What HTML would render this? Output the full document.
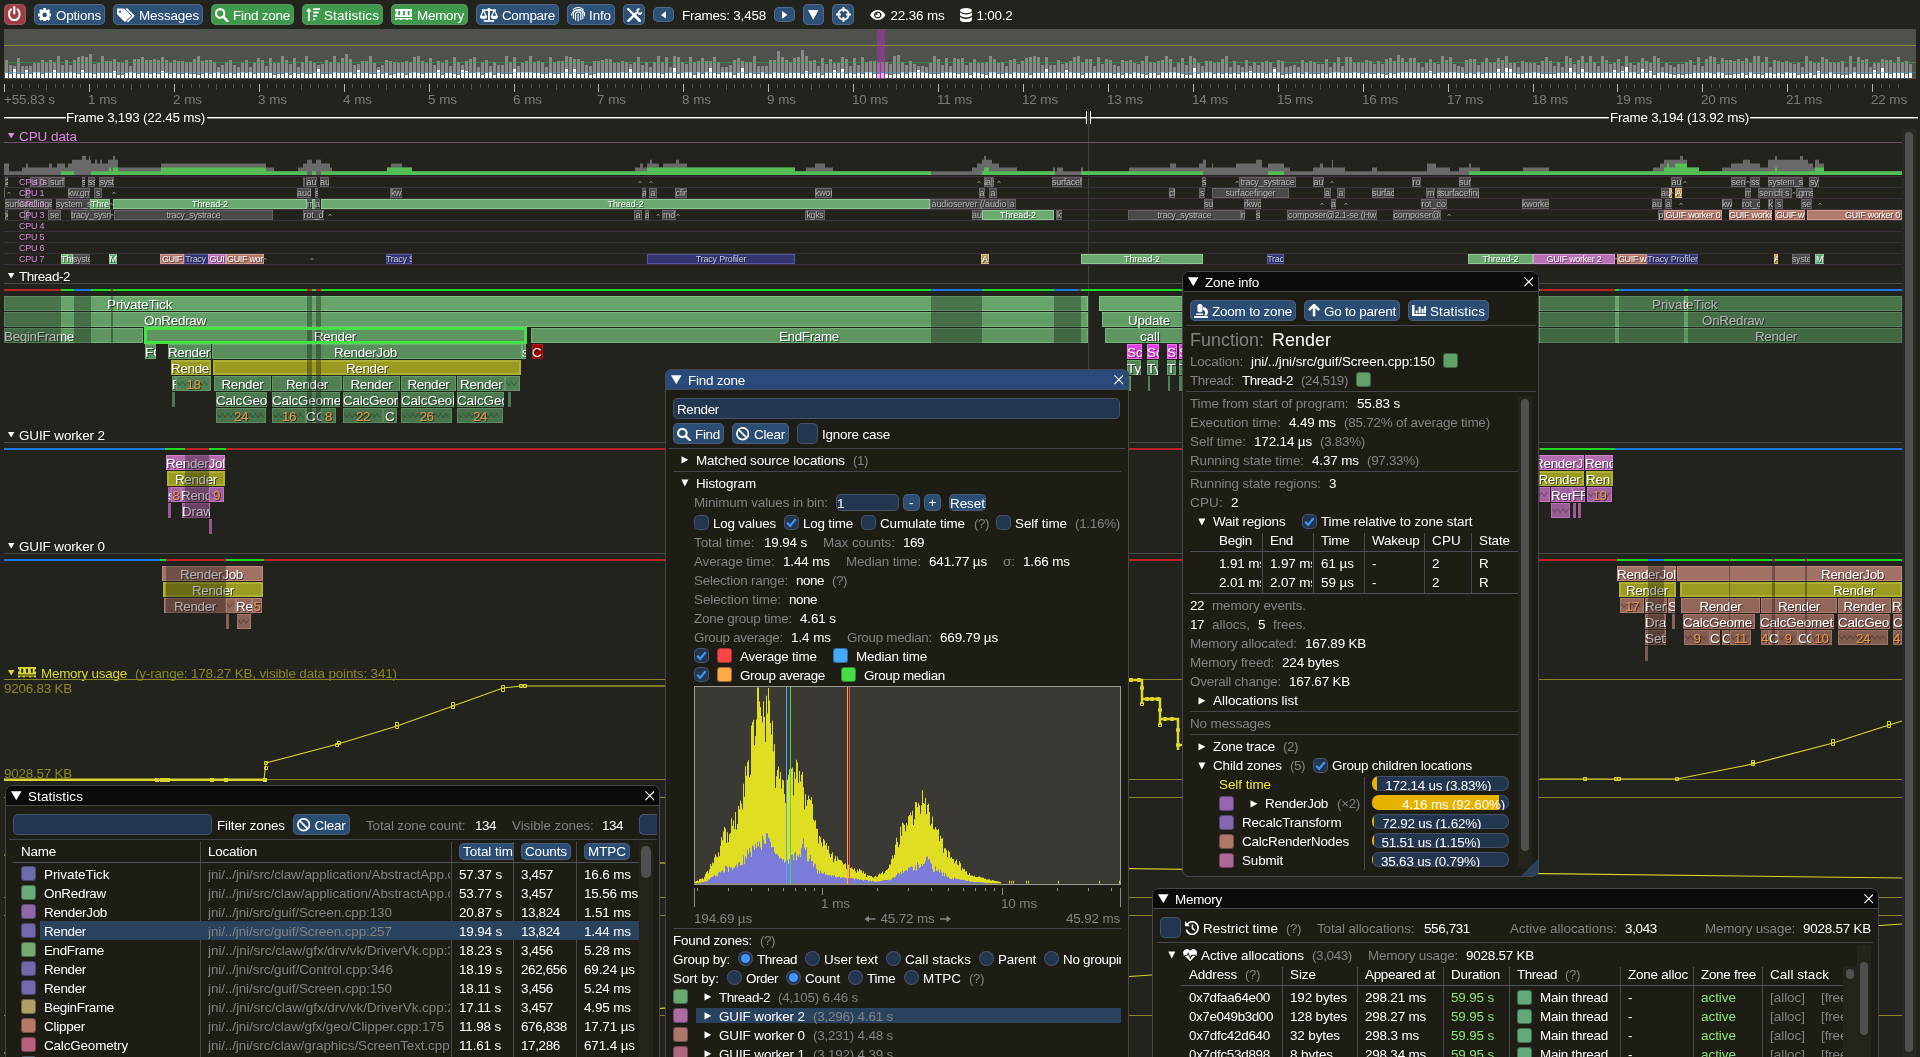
<!DOCTYPE html><html><head><meta charset="utf-8"><title>Tracy Profiler</title><style>
*{box-sizing:border-box}
html,body{margin:0;padding:0;background:#21231c;}
body{width:1920px;height:1057px;position:relative;overflow:hidden;font-family:"Liberation Sans",sans-serif;font-size:13.43px;color:#fff;will-change:transform;}
div,span,svg,i,b{position:absolute;}
span{white-space:pre;line-height:15px;height:15px;}
i{top:0;height:100%;font-style:normal}
b{font-weight:normal;top:1px;height:15px;line-height:15px;white-space:pre;text-shadow:1px 1px 0 rgba(0,0,0,.55);}
.big{font-size:17.9px;line-height:20px;height:20px;}
.sm{font-size:8.95px;line-height:10px;height:10px;letter-spacing:-0.2px;}
.cz{height:10px;font-size:8.95px;line-height:10px;overflow:hidden;white-space:pre;text-align:center;text-shadow:1px 1px 0 rgba(0,0,0,.5);}
.z{height:15px;overflow:hidden;}
.win{overflow:hidden;border-radius:7px;box-shadow:inset 0 0 0 1px #45454b;}
.clip{overflow:hidden;}
</style></head><body>
<div style="left:4px;top:4px;width:22px;height:21px;background:#a03c44;border-radius:5px;box-shadow:inset 0 0 0 1px rgba(130,130,150,.45);"></div>
<svg style="left:8.2px;top:5.6px" width="12.6" height="15.4" viewBox="0.9 0 14.2 15.3" preserveAspectRatio="none" fill="#fff" stroke="none"><path d="M8 1.2v6.3" stroke="#fff" stroke-width="2.3" stroke-linecap="round" fill="none"/><path d="M4.3 3.4a6 6 0 1 0 7.4 0" fill="none" stroke="#fff" stroke-width="2.2" stroke-linecap="round"/></svg>
<div style="left:34px;top:4px;width:71px;height:21px;background:#2e5177;border-radius:5px;box-shadow:inset 0 0 0 1px rgba(130,130,150,.45);"></div>
<svg style="left:38px;top:7.7px" width="13.3" height="13.8" viewBox="0 0 16 16" preserveAspectRatio="none" fill="#fff" stroke="none"><g transform="translate(8 8)"><circle r="4.500" fill="none" stroke="#fff" stroke-width="3.600"/><rect x="-1.700" y="-8" width="3.400" height="4" transform="rotate(0)"/><rect x="-1.700" y="-8" width="3.400" height="4" transform="rotate(45)"/><rect x="-1.700" y="-8" width="3.400" height="4" transform="rotate(90)"/><rect x="-1.700" y="-8" width="3.400" height="4" transform="rotate(135)"/><rect x="-1.700" y="-8" width="3.400" height="4" transform="rotate(180)"/><rect x="-1.700" y="-8" width="3.400" height="4" transform="rotate(225)"/><rect x="-1.700" y="-8" width="3.400" height="4" transform="rotate(270)"/><rect x="-1.700" y="-8" width="3.400" height="4" transform="rotate(315)"/></g></svg>
<span style="left:56px;top:8px;color:#fff;letter-spacing:-0.183px;">Options</span>
<div style="left:113px;top:4px;width:90px;height:21px;background:#2e5177;border-radius:5px;box-shadow:inset 0 0 0 1px rgba(130,130,150,.45);"></div>
<svg style="left:117px;top:7.5px" width="17.5" height="14.7" viewBox="0.5 1 15.3 13" preserveAspectRatio="none" fill="#fff" stroke="none"><path d="M0.5 1.5h6.2l6.3 6.3-5.6 5.6-6.9-6.9z M3.2 3.3a1 1 0 1 0 .01 0z" fill-rule="evenodd"/><path d="M8.7 1.5l6.3 6.3-5.6 5.6" fill="none" stroke="#fff" stroke-width="1.5"/></svg>
<span style="left:139px;top:8px;color:#fff;letter-spacing:-0.151px;">Messages</span>
<div style="left:211px;top:4px;width:83px;height:21px;background:#3e9a4a;border-radius:5px;box-shadow:inset 0 0 0 1px rgba(130,130,150,.45);"></div>
<svg style="left:215px;top:7.5px" width="13.7" height="14.3" viewBox="0.75 0.75 15.2 15.2" preserveAspectRatio="none" fill="#fff" stroke="none"><circle cx="6.5" cy="6.5" r="4.6" fill="none" stroke="#fff" stroke-width="2.3"/><path d="M10 10l4.6 4.6" stroke="#fff" stroke-width="2.6" stroke-linecap="round"/></svg>
<span style="left:233px;top:8px;color:#fff;letter-spacing:-0.220px;">Find zone</span>
<div style="left:302px;top:4px;width:81px;height:21px;background:#3e9a4a;border-radius:5px;box-shadow:inset 0 0 0 1px rgba(130,130,150,.45);"></div>
<svg style="left:306px;top:8px" width="14.3" height="12.9" viewBox="0.5 1.5 15 13.5" preserveAspectRatio="none" fill="#fff" stroke="none"><path d="M3.5 15V3" stroke="#fff" stroke-width="1.8"/><path d="M0.5 5.2L3.5 1.5 6.5 5.2z"/><path d="M8 2.6h7.5M8 6.2h5.8M8 9.8h4M8 13.4h2.3" stroke="#fff" stroke-width="1.9"/></svg>
<span style="left:324px;top:8px;color:#fff;letter-spacing:0.127px;">Statistics</span>
<div style="left:391px;top:4px;width:77px;height:21px;background:#3e9a4a;border-radius:5px;box-shadow:inset 0 0 0 1px rgba(130,130,150,.45);"></div>
<svg style="left:394.7px;top:9px" width="17.8" height="11.1" viewBox="0.5 3 15 10.5" preserveAspectRatio="none" fill="#fff" stroke="none"><path d="M0.5 3h15v2.2a1.2 1.2 0 0 0 0 2.4V10.5h-15V7.6a1.2 1.2 0 0 0 0-2.4z M3.2 4.8v4h1.6v-4z M7.2 4.8v4h1.6v-4z M11.2 4.8v4h1.6v-4z" fill-rule="evenodd"/><path d="M0.5 11.6h15v1.9h-1.6v-.9h-2.4v.9h-1.6v-.9h-3.8v.9h-1.6v-.9h-2.4v.9h-1.6z"/></svg>
<span style="left:417px;top:8px;color:#fff;letter-spacing:-0.250px;">Memory</span>
<div style="left:476px;top:4px;width:83px;height:21px;background:#2e5177;border-radius:5px;box-shadow:inset 0 0 0 1px rgba(130,130,150,.45);"></div>
<svg style="left:480px;top:8px" width="17.9" height="13.9" viewBox="0.3 1.2 15.4 13.7" preserveAspectRatio="none" fill="#fff" stroke="none"><path d="M8 2v11" stroke="#fff" stroke-width="1.6"/><path d="M2 3.3h12" stroke="#fff" stroke-width="1.5"/><path d="M3.5 14h9" stroke="#fff" stroke-width="1.7"/><path d="M3.3 3.5L0.8 9.5h5z M12.7 3.5L10.2 9.5h5z" fill="none" stroke="#fff" stroke-width="1.1"/><path d="M0.3 9.6h6a3 2.6 0 0 1-6 0z M9.7 9.6h6a3 2.6 0 0 1-6 0z"/><circle cx="8" cy="2.6" r="1.4"/></svg>
<span style="left:502px;top:8px;color:#fff;letter-spacing:-0.319px;">Compare</span>
<div style="left:567px;top:4px;width:48px;height:21px;background:#2e5177;border-radius:5px;box-shadow:inset 0 0 0 1px rgba(130,130,150,.45);"></div>
<svg style="left:570.8px;top:7.3px" width="14.3" height="14.3" viewBox="1 0.8 14 15" preserveAspectRatio="none" fill="#fff" stroke="none"><g fill="none" stroke="#fff" stroke-width="1.15" stroke-linecap="round"><path d="M1.6 9.5a6.6 6.6 0 0 1 12.8-1.5v2"/><path d="M3.4 12.5v-4a4.6 4.6 0 0 1 9.2 0v4.5"/><path d="M5.4 14.5v-6a2.6 2.6 0 0 1 5.2 0v5.5"/><path d="M8 8.4v6.8"/><path d="M3.2 3.3a7 7 0 0 1 9.6 0"/></g></svg>
<span style="left:589px;top:8px;color:#fff;letter-spacing:-0.100px;">Info</span>
<div style="left:623px;top:4px;width:22px;height:21px;background:#2e5177;border-radius:5px;box-shadow:inset 0 0 0 1px rgba(130,130,150,.45);"></div>
<svg style="left:626.5px;top:7.6px" width="15.5" height="14.3" viewBox="0.9 0.9 15.4 14.4" preserveAspectRatio="none" fill="#fff" stroke="none"><path d="M2 2l5.5 5.5" stroke="#fff" stroke-width="2.2" stroke-linecap="round"/><path d="M7.5 7.5l6 6.2" stroke="#fff" stroke-width="3" stroke-linecap="round"/><path d="M2.3 13.8l7.5-7.5" stroke="#fff" stroke-width="2.4" stroke-linecap="round"/><path d="M10 3.2a3 3 0 0 1 4.2-1.5l-2 2 .4 1.7 1.7.4 2-2a3 3 0 0 1-4.6 3.3z"/></svg>
<div style="left:653px;top:7px;width:21px;height:15px;background:#2e5177;border-radius:5px;box-shadow:inset 0 0 0 1px rgba(130,130,150,.45);"></div>
<svg style="left:661px;top:10.9px" width="5.4" height="7.8" viewBox="4.5 2.5 6.5 11" preserveAspectRatio="none" fill="#fff" stroke="none"><path d="M11 2.5v11L4.5 8z"/></svg>
<span style="left:682px;top:8px;color:#fff;letter-spacing:-0.199px;">Frames: 3,458</span>
<div style="left:774px;top:7px;width:21px;height:15px;background:#2e5177;border-radius:5px;box-shadow:inset 0 0 0 1px rgba(130,130,150,.45);"></div>
<svg style="left:781.9px;top:10.9px" width="5.4" height="7.8" viewBox="5 2.5 6.5 11" preserveAspectRatio="none" fill="#fff" stroke="none"><path d="M5 2.5v11L11.5 8z"/></svg>
<div style="left:803px;top:4px;width:21px;height:21px;background:#2e5177;border-radius:5px;box-shadow:inset 0 0 0 1px rgba(130,130,150,.45);"></div>
<svg style="left:808.3px;top:9.9px" width="10.5" height="9.8" viewBox="2 3 12 11" preserveAspectRatio="none" fill="#fff" stroke="none"><path d="M2 3h12L8 14z"/></svg>
<div style="left:832px;top:4px;width:22px;height:21px;background:#2e5177;border-radius:5px;box-shadow:inset 0 0 0 1px rgba(130,130,150,.45);"></div>
<svg style="left:835.5px;top:7px" width="15" height="15" viewBox="0.5 0.5 15 15" preserveAspectRatio="none" fill="#fff" stroke="none"><circle cx="8" cy="8" r="5.2" fill="none" stroke="#fff" stroke-width="1.8"/><path d="M8 0.5v5M8 10.5v5M0.5 8h5M10.5 8h5" stroke="#fff" stroke-width="1.8"/></svg>
<svg style="left:870px;top:10.2px" width="15.5" height="10" viewBox="0.3 2.6 15.4 10.8" preserveAspectRatio="none" fill="#fff" stroke="none"><path d="M0.3 8C2.2 4.2 5 2.6 8 2.6s5.8 1.6 7.7 5.4c-1.9 3.8-4.7 5.4-7.7 5.4S2.2 11.800 .3 8z M8 4.300a3.700 3.700 0 1 0 .01 0z" fill-rule="evenodd"/><circle cx="8" cy="8" r="2.4"/><circle cx="6.900" cy="6.900" r="1" fill="#22231c"/></svg>
<span style="left:890.5px;top:8px;color:#fff;letter-spacing:-0.155px;">22.36 ms</span>
<svg style="left:960px;top:7.6px" width="12" height="14.3" viewBox="1.5 0.4 13 14.4" preserveAspectRatio="none" fill="#fff" stroke="none"><ellipse cx="8" cy="3" rx="6.5" ry="2.600"/><path d="M1.500 4.800c1 1.500 3.500 2.100 6.500 2.100s5.500-.6 6.500-2.100v3c-1 1.500-3.500 2.100-6.500 2.100S2.500 9.300 1.500 7.800z"/><path d="M1.500 9.300c1 1.500 3.500 2.100 6.500 2.100s5.500-.6 6.500-2.100v3.200c-1 1.700-3.500 2.300-6.500 2.300s-5.500-.6-6.500-2.300z"/></svg>
<span style="left:976.5px;top:8px;color:#fff;letter-spacing:-0.223px;">1:00.2</span>
<div style="left:4px;top:29px;width:1912px;height:50px;background:#4f524c;"></div>
<svg style="left:0;top:0" width="1920" height="80"><path d="M5 60h3v18h-3zM9 65h3v13h-3zM13 66h3v12h-3zM17 58h3v20h-3zM21 66h3v12h-3zM25 66h3v12h-3zM29 66h3v12h-3zM33 63h3v15h-3zM37 63h3v15h-3zM41 60h3v18h-3zM45 62h3v16h-3zM49 60h3v18h-3zM53 62h3v16h-3zM57 56h3v22h-3zM61 65h3v13h-3zM65 60h3v18h-3zM69 65h3v13h-3zM73 60h3v18h-3zM77 57h3v21h-3zM81 56h3v22h-3zM85 57h3v21h-3zM89 54h3v24h-3zM93 64h3v14h-3zM97 63h3v15h-3zM101 56h3v22h-3zM105 61h3v17h-3zM109 61h3v17h-3zM113 59h3v19h-3zM117 62h3v16h-3zM121 63h3v15h-3zM125 60h3v18h-3zM129 66h3v12h-3zM133 59h3v19h-3zM137 59h3v19h-3zM141 57h3v21h-3zM145 60h3v18h-3zM149 60h3v18h-3zM153 59h3v19h-3zM157 60h3v18h-3zM161 57h3v21h-3zM165 60h3v18h-3zM169 63h3v15h-3zM173 60h3v18h-3zM177 61h3v17h-3zM181 61h3v17h-3zM185 62h3v16h-3zM189 62h3v16h-3zM193 59h3v19h-3zM197 56h3v22h-3zM201 61h3v17h-3zM205 60h3v18h-3zM209 60h3v18h-3zM213 62h3v16h-3zM217 67h3v11h-3zM221 65h3v13h-3zM225 62h3v16h-3zM229 60h3v18h-3zM233 65h3v13h-3zM237 67h3v11h-3zM241 63h3v15h-3zM245 60h3v18h-3zM249 67h3v11h-3zM253 63h3v15h-3zM257 58h3v20h-3zM261 60h3v18h-3zM265 66h3v12h-3zM269 58h3v20h-3zM273 63h3v15h-3zM277 63h3v15h-3zM281 56h3v22h-3zM285 60h3v18h-3zM289 64h3v14h-3zM293 58h3v20h-3zM297 67h3v11h-3zM301 62h3v16h-3zM305 56h3v22h-3zM309 61h3v17h-3zM313 63h3v15h-3zM317 65h3v13h-3zM321 64h3v14h-3zM325 60h3v18h-3zM329 62h3v16h-3zM333 56h3v22h-3zM337 63h3v15h-3zM341 58h3v20h-3zM345 54h3v24h-3zM349 59h3v19h-3zM353 65h3v13h-3zM357 64h3v14h-3zM361 61h3v17h-3zM365 61h3v17h-3zM369 56h3v22h-3zM373 63h3v15h-3zM377 67h3v11h-3zM381 65h3v13h-3zM385 60h3v18h-3zM389 61h3v17h-3zM393 62h3v16h-3zM397 63h3v15h-3zM401 62h3v16h-3zM405 61h3v17h-3zM409 62h3v16h-3zM413 57h3v21h-3zM417 56h3v22h-3zM421 61h3v17h-3zM425 63h3v15h-3zM429 58h3v20h-3zM433 65h3v13h-3zM437 61h3v17h-3zM441 63h3v15h-3zM445 60h3v18h-3zM449 66h3v12h-3zM453 57h3v21h-3zM457 62h3v16h-3zM461 65h3v13h-3zM465 61h3v17h-3zM469 59h3v19h-3zM473 57h3v21h-3zM477 67h3v11h-3zM481 62h3v16h-3zM485 60h3v18h-3zM489 66h3v12h-3zM493 62h3v16h-3zM497 65h3v13h-3zM501 65h3v13h-3zM505 56h3v22h-3zM509 62h3v16h-3zM513 57h3v21h-3zM517 66h3v12h-3zM521 63h3v15h-3zM525 61h3v17h-3zM529 56h3v22h-3zM533 62h3v16h-3zM537 61h3v17h-3zM541 62h3v16h-3zM545 67h3v11h-3zM549 57h3v21h-3zM553 62h3v16h-3zM557 61h3v17h-3zM561 61h3v17h-3zM565 56h3v22h-3zM569 57h3v21h-3zM573 59h3v19h-3zM577 59h3v19h-3zM581 61h3v17h-3zM585 65h3v13h-3zM589 66h3v12h-3zM593 61h3v17h-3zM597 61h3v17h-3zM601 60h3v18h-3zM605 59h3v19h-3zM609 59h3v19h-3zM613 63h3v15h-3zM617 63h3v15h-3zM621 61h3v17h-3zM625 62h3v16h-3zM629 64h3v14h-3zM633 62h3v16h-3zM637 57h3v21h-3zM641 65h3v13h-3zM645 62h3v16h-3zM649 67h3v11h-3zM653 62h3v16h-3zM657 56h3v22h-3zM661 62h3v16h-3zM665 57h3v21h-3zM669 67h3v11h-3zM673 56h3v22h-3zM677 57h3v21h-3zM681 62h3v16h-3zM685 64h3v14h-3zM689 57h3v21h-3zM693 62h3v16h-3zM697 61h3v17h-3zM701 58h3v20h-3zM705 61h3v17h-3zM709 61h3v17h-3zM713 57h3v21h-3zM717 62h3v16h-3zM721 67h3v11h-3zM725 67h3v11h-3zM729 65h3v13h-3zM733 60h3v18h-3zM737 58h3v20h-3zM741 61h3v17h-3zM745 62h3v16h-3zM749 62h3v16h-3zM753 56h3v22h-3zM757 66h3v12h-3zM761 66h3v12h-3zM765 66h3v12h-3zM769 60h3v18h-3zM773 60h3v18h-3zM777 51h3v27h-3zM781 57h3v21h-3zM785 60h3v18h-3zM789 62h3v16h-3zM793 58h3v20h-3zM797 57h3v21h-3zM801 50h3v28h-3zM805 56h3v22h-3zM809 61h3v17h-3zM813 60h3v18h-3zM817 66h3v12h-3zM821 58h3v20h-3zM825 64h3v14h-3zM829 59h3v19h-3zM833 63h3v15h-3zM837 63h3v15h-3zM841 57h3v21h-3zM845 59h3v19h-3zM849 66h3v12h-3zM853 58h3v20h-3zM857 65h3v13h-3zM861 57h3v21h-3zM865 62h3v16h-3zM869 61h3v17h-3zM873 61h3v17h-3zM877 63h3v15h-3zM881 62h3v16h-3zM885 62h3v16h-3zM889 64h3v14h-3zM893 56h3v22h-3zM897 55h3v23h-3zM901 62h3v16h-3zM905 65h3v13h-3zM909 61h3v17h-3zM913 64h3v14h-3zM917 66h3v12h-3zM921 66h3v12h-3zM925 67h3v11h-3zM929 63h3v15h-3zM933 56h3v22h-3zM937 59h3v19h-3zM941 65h3v13h-3zM945 58h3v20h-3zM949 66h3v12h-3zM953 58h3v20h-3zM957 59h3v19h-3zM961 58h3v20h-3zM965 65h3v13h-3zM969 63h3v15h-3zM973 59h3v19h-3zM977 63h3v15h-3zM981 63h3v15h-3zM985 62h3v16h-3zM989 56h3v22h-3zM993 59h3v19h-3zM997 63h3v15h-3zM1001 62h3v16h-3zM1005 66h3v12h-3zM1009 60h3v18h-3zM1013 59h3v19h-3zM1017 64h3v14h-3zM1021 61h3v17h-3zM1025 58h3v20h-3zM1029 57h3v21h-3zM1033 56h3v22h-3zM1037 57h3v21h-3zM1041 65h3v13h-3zM1045 57h3v21h-3zM1049 65h3v13h-3zM1053 65h3v13h-3zM1057 60h3v18h-3zM1061 64h3v14h-3zM1065 63h3v15h-3zM1069 61h3v17h-3zM1073 57h3v21h-3zM1077 56h3v22h-3zM1081 62h3v16h-3zM1085 59h3v19h-3zM1089 59h3v19h-3zM1093 66h3v12h-3zM1097 57h3v21h-3zM1101 64h3v14h-3zM1105 59h3v19h-3zM1109 60h3v18h-3zM1113 65h3v13h-3zM1117 66h3v12h-3zM1121 60h3v18h-3zM1125 61h3v17h-3zM1129 60h3v18h-3zM1133 63h3v15h-3zM1137 64h3v14h-3zM1141 61h3v17h-3zM1145 56h3v22h-3zM1149 62h3v16h-3zM1153 63h3v15h-3zM1157 61h3v17h-3zM1161 60h3v18h-3zM1165 56h3v22h-3zM1169 59h3v19h-3zM1173 67h3v11h-3zM1177 63h3v15h-3zM1181 58h3v20h-3zM1185 65h3v13h-3zM1189 56h3v22h-3zM1193 58h3v20h-3zM1197 63h3v15h-3zM1201 66h3v12h-3zM1205 61h3v17h-3zM1209 61h3v17h-3zM1213 63h3v15h-3zM1217 62h3v16h-3zM1221 59h3v19h-3zM1225 56h3v22h-3zM1229 67h3v11h-3zM1233 61h3v17h-3zM1237 65h3v13h-3zM1241 67h3v11h-3zM1245 60h3v18h-3zM1249 66h3v12h-3zM1253 62h3v16h-3zM1257 65h3v13h-3zM1261 62h3v16h-3zM1265 61h3v17h-3zM1269 62h3v16h-3zM1273 67h3v11h-3zM1277 60h3v18h-3zM1281 61h3v17h-3zM1285 67h3v11h-3zM1289 66h3v12h-3zM1293 65h3v13h-3zM1297 67h3v11h-3zM1301 60h3v18h-3zM1305 63h3v15h-3zM1309 61h3v17h-3zM1313 62h3v16h-3zM1317 64h3v14h-3zM1321 64h3v14h-3zM1325 59h3v19h-3zM1329 67h3v11h-3zM1333 63h3v15h-3zM1337 57h3v21h-3zM1341 66h3v12h-3zM1345 57h3v21h-3zM1349 57h3v21h-3zM1353 63h3v15h-3zM1357 62h3v16h-3zM1361 63h3v15h-3zM1365 60h3v18h-3zM1369 61h3v17h-3zM1373 64h3v14h-3zM1377 61h3v17h-3zM1381 64h3v14h-3zM1385 59h3v19h-3zM1389 58h3v20h-3zM1393 61h3v17h-3zM1397 55h3v23h-3zM1401 58h3v20h-3zM1405 62h3v16h-3zM1409 58h3v20h-3zM1413 58h3v20h-3zM1417 63h3v15h-3zM1421 67h3v11h-3zM1425 63h3v15h-3zM1429 59h3v19h-3zM1433 63h3v15h-3zM1437 64h3v14h-3zM1441 56h3v22h-3zM1445 60h3v18h-3zM1449 57h3v21h-3zM1453 64h3v14h-3zM1457 66h3v12h-3zM1461 67h3v11h-3zM1465 60h3v18h-3zM1469 59h3v19h-3zM1473 59h3v19h-3zM1477 65h3v13h-3zM1481 62h3v16h-3zM1485 58h3v20h-3zM1489 63h3v15h-3zM1493 62h3v16h-3zM1497 58h3v20h-3zM1501 60h3v18h-3zM1505 56h3v22h-3zM1509 63h3v15h-3zM1513 63h3v15h-3zM1517 67h3v11h-3zM1521 61h3v17h-3zM1525 62h3v16h-3zM1529 63h3v15h-3zM1533 63h3v15h-3zM1537 65h3v13h-3zM1541 61h3v17h-3zM1545 57h3v21h-3zM1549 61h3v17h-3zM1553 66h3v12h-3zM1557 62h3v16h-3zM1561 67h3v11h-3zM1565 56h3v22h-3zM1569 58h3v20h-3zM1573 64h3v14h-3zM1577 60h3v18h-3zM1581 56h3v22h-3zM1585 63h3v15h-3zM1589 56h3v22h-3zM1593 62h3v16h-3zM1597 66h3v12h-3zM1601 56h3v22h-3zM1605 60h3v18h-3zM1609 64h3v14h-3zM1613 63h3v15h-3zM1617 59h3v19h-3zM1621 66h3v12h-3zM1625 56h3v22h-3zM1629 63h3v15h-3zM1633 65h3v13h-3zM1637 63h3v15h-3zM1641 58h3v20h-3zM1645 61h3v17h-3zM1649 63h3v15h-3zM1653 56h3v22h-3zM1657 58h3v20h-3zM1661 67h3v11h-3zM1665 63h3v15h-3zM1669 65h3v13h-3zM1673 67h3v11h-3zM1677 64h3v14h-3zM1681 64h3v14h-3zM1685 62h3v16h-3zM1689 60h3v18h-3zM1693 65h3v13h-3zM1697 57h3v21h-3zM1701 66h3v12h-3zM1705 59h3v19h-3zM1709 56h3v22h-3zM1713 57h3v21h-3zM1717 64h3v14h-3zM1721 58h3v20h-3zM1725 60h3v18h-3zM1729 60h3v18h-3zM1733 61h3v17h-3zM1737 59h3v19h-3zM1741 61h3v17h-3zM1745 58h3v20h-3zM1749 63h3v15h-3zM1753 56h3v22h-3zM1757 56h3v22h-3zM1761 62h3v16h-3zM1765 57h3v21h-3zM1769 67h3v11h-3zM1773 60h3v18h-3zM1777 61h3v17h-3zM1781 62h3v16h-3zM1785 61h3v17h-3zM1789 63h3v15h-3zM1793 64h3v14h-3zM1797 63h3v15h-3zM1801 67h3v11h-3zM1805 56h3v22h-3zM1809 61h3v17h-3zM1813 63h3v15h-3zM1817 63h3v15h-3zM1821 57h3v21h-3zM1825 59h3v19h-3zM1829 62h3v16h-3zM1833 63h3v15h-3zM1837 62h3v16h-3zM1841 61h3v17h-3zM1845 67h3v11h-3zM1849 56h3v22h-3zM1853 67h3v11h-3zM1857 57h3v21h-3zM1861 60h3v18h-3zM1865 59h3v19h-3zM1869 67h3v11h-3zM1873 63h3v15h-3zM1877 63h3v15h-3zM1881 59h3v19h-3zM1885 60h3v18h-3zM1889 60h3v18h-3zM1893 63h3v15h-3zM1897 57h3v21h-3zM1901 62h3v16h-3zM1905 61h3v17h-3zM1909 64h3v14h-3z" fill="#888"/><path d="M5 73h3v5h-3zM9 74h3v4h-3zM13 69h3v9h-3zM17 74h3v4h-3zM21 74h3v4h-3zM25 70h3v8h-3zM29 74h3v4h-3zM33 72h3v6h-3zM37 72h3v6h-3zM41 74h3v4h-3zM45 73h3v5h-3zM49 73h3v5h-3zM53 70h3v8h-3zM57 73h3v5h-3zM61 73h3v5h-3zM65 73h3v5h-3zM69 72h3v6h-3zM73 73h3v5h-3zM77 74h3v4h-3zM81 70h3v8h-3zM85 73h3v5h-3zM89 73h3v5h-3zM93 74h3v4h-3zM97 73h3v5h-3zM101 73h3v5h-3zM105 73h3v5h-3zM109 73h3v5h-3zM113 71h3v7h-3zM117 75h3v3h-3zM121 75h3v3h-3zM125 73h3v5h-3zM129 72h3v6h-3zM133 73h3v5h-3zM137 74h3v4h-3zM141 73h3v5h-3zM145 73h3v5h-3zM149 74h3v4h-3zM153 73h3v5h-3zM157 74h3v4h-3zM161 71h3v7h-3zM165 73h3v5h-3zM169 74h3v4h-3zM173 73h3v5h-3zM177 74h3v4h-3zM181 74h3v4h-3zM185 73h3v5h-3zM189 74h3v4h-3zM193 74h3v4h-3zM197 75h3v3h-3zM201 74h3v4h-3zM205 73h3v5h-3zM209 74h3v4h-3zM213 73h3v5h-3zM217 72h3v6h-3zM221 74h3v4h-3zM225 74h3v4h-3zM229 73h3v5h-3zM233 74h3v4h-3zM237 73h3v5h-3zM241 72h3v6h-3zM245 73h3v5h-3zM249 72h3v6h-3zM253 74h3v4h-3zM257 73h3v5h-3zM261 73h3v5h-3zM265 73h3v5h-3zM269 73h3v5h-3zM273 75h3v3h-3zM277 74h3v4h-3zM281 74h3v4h-3zM285 73h3v5h-3zM289 75h3v3h-3zM293 73h3v5h-3zM297 74h3v4h-3zM301 73h3v5h-3zM305 74h3v4h-3zM309 74h3v4h-3zM313 73h3v5h-3zM317 69h3v9h-3zM321 74h3v4h-3zM325 74h3v4h-3zM329 74h3v4h-3zM333 72h3v6h-3zM337 73h3v5h-3zM341 73h3v5h-3zM345 73h3v5h-3zM349 72h3v6h-3zM353 74h3v4h-3zM357 70h3v8h-3zM361 73h3v5h-3zM365 73h3v5h-3zM369 74h3v4h-3zM373 74h3v4h-3zM377 70h3v8h-3zM381 74h3v4h-3zM385 73h3v5h-3zM389 75h3v3h-3zM393 74h3v4h-3zM397 73h3v5h-3zM401 73h3v5h-3zM405 75h3v3h-3zM409 73h3v5h-3zM413 72h3v6h-3zM417 73h3v5h-3zM421 74h3v4h-3zM425 73h3v5h-3zM429 73h3v5h-3zM433 73h3v5h-3zM437 70h3v8h-3zM441 75h3v3h-3zM445 73h3v5h-3zM449 73h3v5h-3zM453 74h3v4h-3zM457 75h3v3h-3zM461 70h3v8h-3zM465 71h3v7h-3zM469 73h3v5h-3zM473 73h3v5h-3zM477 72h3v6h-3zM481 75h3v3h-3zM485 73h3v5h-3zM489 72h3v6h-3zM493 75h3v3h-3zM497 73h3v5h-3zM501 74h3v4h-3zM505 74h3v4h-3zM509 74h3v4h-3zM513 69h3v9h-3zM517 72h3v6h-3zM521 72h3v6h-3zM525 72h3v6h-3zM529 72h3v6h-3zM533 73h3v5h-3zM537 73h3v5h-3zM541 74h3v4h-3zM545 74h3v4h-3zM549 73h3v5h-3zM553 74h3v4h-3zM557 74h3v4h-3zM561 73h3v5h-3zM565 69h3v9h-3zM569 74h3v4h-3zM573 69h3v9h-3zM577 74h3v4h-3zM581 74h3v4h-3zM585 73h3v5h-3zM589 75h3v3h-3zM593 74h3v4h-3zM597 73h3v5h-3zM601 73h3v5h-3zM605 73h3v5h-3zM609 73h3v5h-3zM613 73h3v5h-3zM617 73h3v5h-3zM621 72h3v6h-3zM625 73h3v5h-3zM629 69h3v9h-3zM633 73h3v5h-3zM637 73h3v5h-3zM641 73h3v5h-3zM645 72h3v6h-3zM649 73h3v5h-3zM653 73h3v5h-3zM657 73h3v5h-3zM661 74h3v4h-3zM665 73h3v5h-3zM669 73h3v5h-3zM673 68h3v10h-3zM677 74h3v4h-3zM681 73h3v5h-3zM685 72h3v6h-3zM689 72h3v6h-3zM693 75h3v3h-3zM697 72h3v6h-3zM701 74h3v4h-3zM705 72h3v6h-3zM709 68h3v10h-3zM713 73h3v5h-3zM717 74h3v4h-3zM721 72h3v6h-3zM725 72h3v6h-3zM729 72h3v6h-3zM733 75h3v3h-3zM737 73h3v5h-3zM741 68h3v10h-3zM745 74h3v4h-3zM749 73h3v5h-3zM753 74h3v4h-3zM757 74h3v4h-3zM761 72h3v6h-3zM765 74h3v4h-3zM769 74h3v4h-3zM773 72h3v6h-3zM777 73h3v5h-3zM781 73h3v5h-3zM785 74h3v4h-3zM789 73h3v5h-3zM793 73h3v5h-3zM797 73h3v5h-3zM801 74h3v4h-3zM805 71h3v7h-3zM809 74h3v4h-3zM813 73h3v5h-3zM817 73h3v5h-3zM821 75h3v3h-3zM825 73h3v5h-3zM829 73h3v5h-3zM833 70h3v8h-3zM837 73h3v5h-3zM841 69h3v9h-3zM845 74h3v4h-3zM849 73h3v5h-3zM853 74h3v4h-3zM857 73h3v5h-3zM861 74h3v4h-3zM865 72h3v6h-3zM869 72h3v6h-3zM873 74h3v4h-3zM877 74h3v4h-3zM881 73h3v5h-3zM885 74h3v4h-3zM889 75h3v3h-3zM893 74h3v4h-3zM897 74h3v4h-3zM901 72h3v6h-3zM905 74h3v4h-3zM909 72h3v6h-3zM913 72h3v6h-3zM917 70h3v8h-3zM921 72h3v6h-3zM925 73h3v5h-3zM929 74h3v4h-3zM933 74h3v4h-3zM937 74h3v4h-3zM941 73h3v5h-3zM945 72h3v6h-3zM949 72h3v6h-3zM953 73h3v5h-3zM957 74h3v4h-3zM961 73h3v5h-3zM965 73h3v5h-3zM969 75h3v3h-3zM973 72h3v6h-3zM977 73h3v5h-3zM981 74h3v4h-3zM985 75h3v3h-3zM989 72h3v6h-3zM993 72h3v6h-3zM997 74h3v4h-3zM1001 74h3v4h-3zM1005 73h3v5h-3zM1009 74h3v4h-3zM1013 72h3v6h-3zM1017 73h3v5h-3zM1021 73h3v5h-3zM1025 73h3v5h-3zM1029 75h3v3h-3zM1033 73h3v5h-3zM1037 73h3v5h-3zM1041 73h3v5h-3zM1045 69h3v9h-3zM1049 73h3v5h-3zM1053 73h3v5h-3zM1057 72h3v6h-3zM1061 73h3v5h-3zM1065 70h3v8h-3zM1069 72h3v6h-3zM1073 73h3v5h-3zM1077 73h3v5h-3zM1081 75h3v3h-3zM1085 73h3v5h-3zM1089 73h3v5h-3zM1093 73h3v5h-3zM1097 72h3v6h-3zM1101 73h3v5h-3zM1105 73h3v5h-3zM1109 73h3v5h-3zM1113 74h3v4h-3zM1117 73h3v5h-3zM1121 75h3v3h-3zM1125 73h3v5h-3zM1129 74h3v4h-3zM1133 72h3v6h-3zM1137 73h3v5h-3zM1141 74h3v4h-3zM1145 75h3v3h-3zM1149 73h3v5h-3zM1153 73h3v5h-3zM1157 75h3v3h-3zM1161 72h3v6h-3zM1165 73h3v5h-3zM1169 72h3v6h-3zM1173 72h3v6h-3zM1177 73h3v5h-3zM1181 74h3v4h-3zM1185 75h3v3h-3zM1189 75h3v3h-3zM1193 68h3v10h-3zM1197 74h3v4h-3zM1201 73h3v5h-3zM1205 72h3v6h-3zM1209 72h3v6h-3zM1213 74h3v4h-3zM1217 73h3v5h-3zM1221 74h3v4h-3zM1225 73h3v5h-3zM1229 74h3v4h-3zM1233 73h3v5h-3zM1237 74h3v4h-3zM1241 72h3v6h-3zM1245 72h3v6h-3zM1249 71h3v7h-3zM1253 73h3v5h-3zM1257 73h3v5h-3zM1261 73h3v5h-3zM1265 74h3v4h-3zM1269 73h3v5h-3zM1273 69h3v9h-3zM1277 72h3v6h-3zM1281 75h3v3h-3zM1285 74h3v4h-3zM1289 74h3v4h-3zM1293 73h3v5h-3zM1297 73h3v5h-3zM1301 74h3v4h-3zM1305 72h3v6h-3zM1309 74h3v4h-3zM1313 74h3v4h-3zM1317 74h3v4h-3zM1321 73h3v5h-3zM1325 74h3v4h-3zM1329 73h3v5h-3zM1333 72h3v6h-3zM1337 72h3v6h-3zM1341 73h3v5h-3zM1345 73h3v5h-3zM1349 73h3v5h-3zM1353 72h3v6h-3zM1357 73h3v5h-3zM1361 74h3v4h-3zM1365 73h3v5h-3zM1369 74h3v4h-3zM1373 74h3v4h-3zM1377 73h3v5h-3zM1381 74h3v4h-3zM1385 75h3v3h-3zM1389 73h3v5h-3zM1393 74h3v4h-3zM1397 73h3v5h-3zM1401 72h3v6h-3zM1405 72h3v6h-3zM1409 72h3v6h-3zM1413 73h3v5h-3zM1417 73h3v5h-3zM1421 73h3v5h-3zM1425 73h3v5h-3zM1429 71h3v7h-3zM1433 74h3v4h-3zM1437 73h3v5h-3zM1441 72h3v6h-3zM1445 73h3v5h-3zM1449 72h3v6h-3zM1453 72h3v6h-3zM1457 73h3v5h-3zM1461 73h3v5h-3zM1465 74h3v4h-3zM1469 73h3v5h-3zM1473 74h3v4h-3zM1477 72h3v6h-3zM1481 74h3v4h-3zM1485 73h3v5h-3zM1489 73h3v5h-3zM1493 73h3v5h-3zM1497 69h3v9h-3zM1501 73h3v5h-3zM1505 68h3v10h-3zM1509 69h3v9h-3zM1513 73h3v5h-3zM1517 74h3v4h-3zM1521 74h3v4h-3zM1525 73h3v5h-3zM1529 73h3v5h-3zM1533 72h3v6h-3zM1537 73h3v5h-3zM1541 74h3v4h-3zM1545 74h3v4h-3zM1549 74h3v4h-3zM1553 74h3v4h-3zM1557 73h3v5h-3zM1561 73h3v5h-3zM1565 73h3v5h-3zM1569 68h3v10h-3zM1573 72h3v6h-3zM1577 74h3v4h-3zM1581 69h3v9h-3zM1585 72h3v6h-3zM1589 73h3v5h-3zM1593 73h3v5h-3zM1597 73h3v5h-3zM1601 73h3v5h-3zM1605 72h3v6h-3zM1609 73h3v5h-3zM1613 70h3v8h-3zM1617 73h3v5h-3zM1621 71h3v7h-3zM1625 67h3v11h-3zM1629 72h3v6h-3zM1633 72h3v6h-3zM1637 74h3v4h-3zM1641 69h3v9h-3zM1645 73h3v5h-3zM1649 71h3v7h-3zM1653 75h3v3h-3zM1657 73h3v5h-3zM1661 72h3v6h-3zM1665 73h3v5h-3zM1669 74h3v4h-3zM1673 75h3v3h-3zM1677 74h3v4h-3zM1681 75h3v3h-3zM1685 74h3v4h-3zM1689 74h3v4h-3zM1693 73h3v5h-3zM1697 73h3v5h-3zM1701 73h3v5h-3zM1705 72h3v6h-3zM1709 73h3v5h-3zM1713 74h3v4h-3zM1717 72h3v6h-3zM1721 73h3v5h-3zM1725 75h3v3h-3zM1729 75h3v3h-3zM1733 74h3v4h-3zM1737 74h3v4h-3zM1741 73h3v5h-3zM1745 75h3v3h-3zM1749 72h3v6h-3zM1753 74h3v4h-3zM1757 74h3v4h-3zM1761 75h3v3h-3zM1765 73h3v5h-3zM1769 73h3v5h-3zM1773 74h3v4h-3zM1777 73h3v5h-3zM1781 74h3v4h-3zM1785 72h3v6h-3zM1789 73h3v5h-3zM1793 73h3v5h-3zM1797 75h3v3h-3zM1801 74h3v4h-3zM1805 74h3v4h-3zM1809 73h3v5h-3zM1813 75h3v3h-3zM1817 71h3v7h-3zM1821 74h3v4h-3zM1825 74h3v4h-3zM1829 72h3v6h-3zM1833 74h3v4h-3zM1837 74h3v4h-3zM1841 75h3v3h-3zM1845 75h3v3h-3zM1849 74h3v4h-3zM1853 72h3v6h-3zM1857 74h3v4h-3zM1861 74h3v4h-3zM1865 74h3v4h-3zM1869 74h3v4h-3zM1873 70h3v8h-3zM1877 74h3v4h-3zM1881 68h3v10h-3zM1885 73h3v5h-3zM1889 74h3v4h-3zM1893 73h3v5h-3zM1897 73h3v5h-3zM1901 73h3v5h-3zM1905 74h3v4h-3zM1909 73h3v5h-3z" fill="#f8f8f8"/></svg>
<div style="left:4px;top:45px;width:1912px;height:1px;background:rgba(180,170,40,.6);"></div>
<div style="left:4px;top:62px;width:1912px;height:1px;background:rgba(60,160,60,.6);"></div>
<div style="left:4px;top:72px;width:1912px;height:1px;background:rgba(60,160,220,.5);"></div>
<div style="left:877px;top:29px;width:8px;height:50px;background:rgba(221,34,221,.36);"></div>
<svg style="left:0;top:0" width="1920" height="100"><path d="M4.5 84v8M89.5 84v8M174.5 84v8M259.5 84v8M344.5 84v8M429.5 84v8M514.5 84v8M598.5 84v8M683.5 84v8M768.5 84v8M853.5 84v8M938.5 84v8M1023.5 84v8M1108.5 84v8M1193.5 84v8M1278.5 84v8M1363.5 84v8M1448.5 84v8M1533.5 84v8M1617.5 84v8M1702.5 84v8M1787.5 84v8M1872.5 84v8" stroke="#b4b4b0" fill="none"/><path d="M46.5 84v6M131.5 84v6M216.5 84v6M301.5 84v6M386.5 84v6M471.5 84v6M556.5 84v6M641.5 84v6M726.5 84v6M811.5 84v6M896.5 84v6M981.5 84v6M1066.5 84v6M1150.5 84v6M1235.5 84v6M1320.5 84v6M1405.5 84v6M1490.5 84v6M1575.5 84v6M1660.5 84v6M1745.5 84v6M1830.5 84v6M12.5 84v4M21.5 84v4M29.5 84v4M38.5 84v4M55.5 84v4M63.5 84v4M72.5 84v4M80.5 84v4M97.5 84v4M106.5 84v4M114.5 84v4M123.5 84v4M140.5 84v4M148.5 84v4M157.5 84v4M165.5 84v4M182.5 84v4M191.5 84v4M199.5 84v4M208.5 84v4M225.5 84v4M233.5 84v4M242.5 84v4M250.5 84v4M267.5 84v4M276.5 84v4M284.5 84v4M293.5 84v4M310.5 84v4M318.5 84v4M327.5 84v4M335.5 84v4M352.5 84v4M361.5 84v4M369.5 84v4M378.5 84v4M395.5 84v4M403.5 84v4M412.5 84v4M420.5 84v4M437.5 84v4M446.5 84v4M454.5 84v4M463.5 84v4M480.5 84v4M488.5 84v4M497.5 84v4M505.5 84v4M522.5 84v4M531.5 84v4M539.5 84v4M547.5 84v4M564.5 84v4M573.5 84v4M581.5 84v4M590.5 84v4M607.5 84v4M615.5 84v4M624.5 84v4M632.5 84v4M649.5 84v4M658.5 84v4M666.5 84v4M675.5 84v4M692.5 84v4M700.5 84v4M709.5 84v4M717.5 84v4M734.5 84v4M743.5 84v4M751.5 84v4M760.5 84v4M777.5 84v4M785.5 84v4M794.5 84v4M802.5 84v4M819.5 84v4M828.5 84v4M836.5 84v4M845.5 84v4M862.5 84v4M870.5 84v4M879.5 84v4M887.5 84v4M904.5 84v4M913.5 84v4M921.5 84v4M930.5 84v4M947.5 84v4M955.5 84v4M964.5 84v4M972.5 84v4M989.5 84v4M998.5 84v4M1006.5 84v4M1015.5 84v4M1032.5 84v4M1040.5 84v4M1049.5 84v4M1057.5 84v4M1074.5 84v4M1082.5 84v4M1091.5 84v4M1099.5 84v4M1116.5 84v4M1125.5 84v4M1133.5 84v4M1142.5 84v4M1159.5 84v4M1167.5 84v4M1176.5 84v4M1184.5 84v4M1201.5 84v4M1210.5 84v4M1218.5 84v4M1227.5 84v4M1244.5 84v4M1252.5 84v4M1261.5 84v4M1269.5 84v4M1286.5 84v4M1295.5 84v4M1303.5 84v4M1312.5 84v4M1329.5 84v4M1337.5 84v4M1346.5 84v4M1354.5 84v4M1371.5 84v4M1380.5 84v4M1388.5 84v4M1397.5 84v4M1414.5 84v4M1422.5 84v4M1431.5 84v4M1439.5 84v4M1456.5 84v4M1465.5 84v4M1473.5 84v4M1482.5 84v4M1499.5 84v4M1507.5 84v4M1516.5 84v4M1524.5 84v4M1541.5 84v4M1550.5 84v4M1558.5 84v4M1567.5 84v4M1584.5 84v4M1592.5 84v4M1600.5 84v4M1609.5 84v4M1626.5 84v4M1634.5 84v4M1643.5 84v4M1651.5 84v4M1668.5 84v4M1677.5 84v4M1685.5 84v4M1694.5 84v4M1711.5 84v4M1719.5 84v4M1728.5 84v4M1736.5 84v4M1753.5 84v4M1762.5 84v4M1770.5 84v4M1779.5 84v4M1796.5 84v4M1804.5 84v4M1813.5 84v4M1821.5 84v4M1838.5 84v4M1847.5 84v4M1855.5 84v4M1864.5 84v4M1881.5 84v4M1889.5 84v4M1898.5 84v4" stroke="#53544f" fill="none"/></svg>
<span style="left:4px;top:92px;color:#7b7c78;letter-spacing:-0.112px;">+55.83 s</span>
<span style="left:88px;top:92px;color:#7b7c78;letter-spacing:-0.026px;">1 ms</span>
<span style="left:173px;top:92px;color:#7b7c78;letter-spacing:-0.026px;">2 ms</span>
<span style="left:258px;top:92px;color:#7b7c78;letter-spacing:-0.026px;">3 ms</span>
<span style="left:343px;top:92px;color:#7b7c78;letter-spacing:-0.026px;">4 ms</span>
<span style="left:428px;top:92px;color:#7b7c78;letter-spacing:-0.026px;">5 ms</span>
<span style="left:513px;top:92px;color:#7b7c78;letter-spacing:-0.026px;">6 ms</span>
<span style="left:597px;top:92px;color:#7b7c78;letter-spacing:-0.026px;">7 ms</span>
<span style="left:682px;top:92px;color:#7b7c78;letter-spacing:-0.026px;">8 ms</span>
<span style="left:767px;top:92px;color:#7b7c78;letter-spacing:-0.026px;">9 ms</span>
<span style="left:852px;top:92px;color:#7b7c78;letter-spacing:-0.114px;">10 ms</span>
<span style="left:937px;top:92px;color:#7b7c78;letter-spacing:-0.114px;">11 ms</span>
<span style="left:1022px;top:92px;color:#7b7c78;letter-spacing:-0.114px;">12 ms</span>
<span style="left:1107px;top:92px;color:#7b7c78;letter-spacing:-0.114px;">13 ms</span>
<span style="left:1192px;top:92px;color:#7b7c78;letter-spacing:-0.114px;">14 ms</span>
<span style="left:1277px;top:92px;color:#7b7c78;letter-spacing:-0.114px;">15 ms</span>
<span style="left:1362px;top:92px;color:#7b7c78;letter-spacing:-0.114px;">16 ms</span>
<span style="left:1447px;top:92px;color:#7b7c78;letter-spacing:-0.114px;">17 ms</span>
<span style="left:1532px;top:92px;color:#7b7c78;letter-spacing:-0.114px;">18 ms</span>
<span style="left:1616px;top:92px;color:#7b7c78;letter-spacing:-0.114px;">19 ms</span>
<span style="left:1701px;top:92px;color:#7b7c78;letter-spacing:-0.114px;">20 ms</span>
<span style="left:1786px;top:92px;color:#7b7c78;letter-spacing:-0.114px;">21 ms</span>
<span style="left:1871px;top:92px;color:#7b7c78;letter-spacing:-0.114px;">22 ms</span>
<div style="left:4px;top:117px;width:62px;height:1px;background:#fff;"></div>
<div style="left:4px;top:118px;width:62px;height:1px;background:rgba(255,255,255,.4);"></div>
<div style="left:207px;top:117px;width:879px;height:1px;background:#fff;"></div>
<div style="left:207px;top:118px;width:879px;height:1px;background:rgba(255,255,255,.4);"></div>
<div style="left:1091px;top:117px;width:518px;height:1px;background:#fff;"></div>
<div style="left:1091px;top:118px;width:518px;height:1px;background:rgba(255,255,255,.4);"></div>
<div style="left:1750px;top:117px;width:168px;height:1px;background:#fff;"></div>
<div style="left:1750px;top:118px;width:168px;height:1px;background:rgba(255,255,255,.4);"></div>
<span style="left:66px;top:110px;color:#fff;letter-spacing:-0.230px;">Frame 3,193 (22.45 ms)</span>
<div style="left:1086px;top:111px;width:1px;height:13px;background:#fff;"></div>
<div style="left:1090px;top:111px;width:1px;height:13px;background:#fff;"></div>
<span style="left:1610px;top:110px;color:#fff;letter-spacing:-0.230px;">Frame 3,194 (13.92 ms)</span>
<div style="left:1088px;top:110px;width:1px;height:320px;background:rgba(255,255,255,.13);"></div>
<div style="left:1902px;top:129px;width:14px;height:928px;background:rgba(255,255,255,.03);"></div>
<div style="left:1905px;top:132px;width:8px;height:920px;background:#4f4f4f;border-radius:4px;"></div>
<svg style="left:8.200px;top:132.5px" width="6.400" height="5.600" viewBox="0 0 8 7" preserveAspectRatio="none"><path d="M0 0h8L4 7z" fill="#dd88dd"/></svg>
<span style="left:19px;top:129px;color:#dd88dd;letter-spacing:-0.028px;">CPU data</span>
<div style="left:4px;top:142px;width:1898px;height:1px;background:#724a72;"></div>
<svg style="left:0;top:140px" width="1920" height="40" viewBox="0 140 1920 40"><path d="M4 175V163.6H9V175zM9 175V171.2H22V175zM22 175V167.4H26V175zM26 175V163.6H28V175zM28 175V167.4H49V175zM49 175V163.6H52V175zM52 175V167.4H57V175zM57 175V163.6H61V175zM61 175V163.6H65V175zM65 175V167.4H68V175zM68 175V163.6H72V175zM72 175V159.8H74V175zM74 175V159.8H82V175zM82 175V156H86V175zM86 175V159.8H89V175zM89 175V156H90V175zM90 175V159.8H91V175zM91 175V163.6H95V175zM95 175V159.8H97V175zM97 175V163.6H100V175zM100 175V159.8H102V175zM102 175V163.6H108V175zM108 175V159.8H109V175zM109 175V159.8H111V175zM111 175V159.8H113V175zM113 175V156H115V175zM115 175V159.8H118V175zM118 175V167.4H161V175zM161 175V163.6H266V175zM266 175V167.4H274V175zM274 175V171.2H298V175zM298 175V167.4H303V175zM303 175V163.6H307V175zM307 175V159.8H312V175zM312 175V163.6H316V175zM316 175V159.8H321V175zM321 175V163.6H325V175zM325 175V163.6H330V175zM330 175V167.4H332V175zM332 175V171.2H387V175zM387 175V167.4H391V175zM391 175V163.6H402V175zM402 175V167.4H412V175zM412 175V171.2H635V175zM635 175V167.4H640V175zM640 175V163.6H643V175zM643 175V167.4H647V175zM647 175V163.6H650V175zM650 175V159.8H652V175zM652 175V163.6H659V175zM659 175V167.4H663V175zM663 175V163.6H676V175zM676 175V159.8H679V175zM679 175V163.6H687V175zM687 175V167.4H795V175zM795 175V171.2H806V175zM806 175V167.4H815V175zM815 175V163.6H825V175zM825 175V167.4H833V175zM833 175V171.2H931V175zM931 175V171.2H972V175zM972 175V167.4H977V175zM977 175V163.6H982V175zM982 175V159.8H984V175zM984 175V156H986V175zM986 175V159.8H989V175zM989 175V159.8H992V175zM992 175V163.6H999V175zM999 175V167.4H1017V175zM1017 175V171.2H1053V175zM1053 175V167.4H1055V175zM1055 175V171.2H1057V175zM1057 175V167.4H1063V175zM1063 175V171.2H1081V175zM1081 175V167.4H1083V175zM1083 175V171.2H1129V175zM1129 175V167.4H1170V175zM1170 175V163.6H1176V175zM1176 175V167.4H1199V175zM1199 175V163.6H1203V175zM1203 175V159.8H1206V175zM1206 175V167.4H1212V175zM1212 175V163.6H1213V175zM1213 175V167.4H1236V175zM1236 175V163.6H1240V175zM1240 175V163.6H1256V175zM1256 175V159.8H1262V175zM1262 175V167.4H1268V175zM1268 175V163.6H1284V175zM1284 175V167.4H1290V175zM1290 175V171.2H1313V175zM1313 175V167.4H1320V175zM1320 175V163.6H1323V175zM1323 175V167.4H1332V175zM1332 175V159.8H1333V175zM1333 175V167.4H1345V175zM1345 175V171.2H1372V175zM1372 175V167.4H1377V175zM1377 175V171.2H1427V175zM1427 175V163.6H1436V175zM1436 175V167.4H1450V175zM1450 175V171.2H1459V175zM1459 175V167.4H1469V175zM1469 175V163.6H1471V175zM1471 175V167.4H1480V175zM1480 175V171.2H1523V175zM1523 175V167.4H1549V175zM1549 175V171.2H1653V175zM1653 175V167.4H1660V175zM1660 175V163.6H1664V175zM1664 175V159.8H1667V175zM1667 175V159.8H1669V175zM1669 175V159.8H1675V175zM1675 175V159.8H1680V175zM1680 175V156H1683V175zM1683 175V159.8H1687V175zM1687 175V167.4H1699V175zM1699 175V171.2H1722V175zM1722 175V167.4H1731V175zM1731 175V163.6H1743V175zM1743 175V159.8H1750V175zM1750 175V163.6H1760V175zM1760 175V167.4H1768V175zM1768 175V159.8H1775V175zM1775 175V156H1777V175zM1777 175V159.8H1792V175zM1792 175V159.8H1800V175zM1800 175V156H1803V175zM1803 175V159.8H1808V175zM1808 175V163.6H1813V175zM1813 175V167.4H1815V175zM1815 175V159.8H1819V175zM1819 175V163.6H1824V175zM1824 175V171.2H1902V175z" fill="#696969"/><path d="M61 175V171.2H65V175zM65 175V171.2H68V175zM68 175V171.2H72V175zM72 175V171.2H74V175zM91 175V171.2H95V175zM95 175V171.2H97V175zM97 175V171.2H100V175zM100 175V171.2H102V175zM102 175V171.2H108V175zM108 175V171.2H109V175zM109 175V167.4H111V175zM111 175V171.2H113V175zM113 175V167.4H115V175zM115 175V167.4H118V175zM118 175V171.2H161V175zM161 175V167.4H266V175zM266 175V171.2H274V175zM274 175V171.2H298V175zM298 175V171.2H303V175zM303 175V171.2H307V175zM312 175V171.2H316V175zM321 175V171.2H325V175zM325 175V171.2H330V175zM330 175V171.2H332V175zM332 175V171.2H387V175zM387 175V167.4H391V175zM391 175V167.4H402V175zM402 175V167.4H412V175zM412 175V171.2H635V175zM635 175V171.2H640V175zM640 175V171.2H643V175zM643 175V171.2H647V175zM647 175V167.4H650V175zM650 175V167.4H652V175zM652 175V167.4H659V175zM659 175V167.4H663V175zM663 175V167.4H676V175zM676 175V167.4H679V175zM679 175V167.4H687V175zM687 175V167.4H795V175zM795 175V171.2H806V175zM806 175V171.2H815V175zM815 175V171.2H825V175zM825 175V171.2H833V175zM833 175V171.2H931V175zM982 175V171.2H984V175zM984 175V167.4H986V175zM986 175V167.4H989V175zM989 175V171.2H992V175zM992 175V171.2H999V175zM999 175V171.2H1017V175zM1017 175V171.2H1053V175zM1053 175V171.2H1055V175zM1081 175V171.2H1083V175zM1083 175V171.2H1129V175zM1129 175V171.2H1170V175zM1170 175V171.2H1176V175zM1176 175V171.2H1199V175zM1199 175V171.2H1203V175zM1268 175V171.2H1284V175zM1469 175V171.2H1471V175zM1471 175V171.2H1480V175zM1480 175V171.2H1523V175zM1523 175V171.2H1549V175zM1549 175V171.2H1653V175zM1653 175V171.2H1660V175zM1660 175V171.2H1664V175zM1664 175V167.4H1667V175zM1667 175V163.6H1669V175zM1669 175V167.4H1675V175zM1675 175V163.6H1680V175zM1680 175V163.6H1683V175zM1683 175V163.6H1687V175zM1687 175V167.4H1699V175zM1699 175V171.2H1722V175zM1722 175V171.2H1731V175zM1731 175V171.2H1743V175zM1743 175V171.2H1750V175zM1750 175V171.2H1760V175zM1760 175V171.2H1768V175zM1768 175V171.2H1775V175zM1775 175V167.4H1777V175zM1777 175V171.2H1792V175zM1792 175V171.2H1800V175zM1800 175V171.2H1803V175zM1803 175V171.2H1808V175zM1808 175V171.2H1813V175zM1813 175V171.2H1815V175zM1815 175V167.4H1819V175zM1819 175V167.4H1824V175zM1824 175V171.2H1902V175z" fill="#54bd55"/></svg>
<div style="left:4px;top:176px;width:1898px;height:1px;background:#3b2f3a;"></div>
<div style="left:4px;top:187px;width:1898px;height:1px;background:#3b2f3a;"></div>
<div style="left:4px;top:198px;width:1898px;height:1px;background:#3b2f3a;"></div>
<div style="left:4px;top:209px;width:1898px;height:1px;background:#3b2f3a;"></div>
<div style="left:4px;top:220px;width:1898px;height:1px;background:#3b2f3a;"></div>
<div style="left:4px;top:231px;width:1898px;height:1px;background:#3b2f3a;"></div>
<div style="left:4px;top:242px;width:1898px;height:1px;background:#3b2f3a;"></div>
<div style="left:4px;top:253px;width:1898px;height:1px;background:#3b2f3a;"></div>
<div style="left:4px;top:264px;width:1898px;height:1px;background:#3b2f3a;"></div>
<div class="cz" style="left:5px;top:177px;width:3px;background:#494949;box-shadow:inset 0 0 0 1px #646464;color:#b9b9b9;letter-spacing:0.022px;">2</div>
<div class="cz" style="left:30px;top:177px;width:10px;background:#494949;box-shadow:inset 0 0 0 1px #646464;color:#b9b9b9;letter-spacing:-0.475px;">s</div>
<div class="cz" style="left:40px;top:177px;width:9px;background:#494949;box-shadow:inset 0 0 0 1px #646464;color:#b9b9b9;letter-spacing:-0.475px;">s</div>
<div class="cz" style="left:49px;top:177px;width:16px;background:#494949;box-shadow:inset 0 0 0 1px #646464;color:#b9b9b9;letter-spacing:-0.230px;">surf</div>
<div class="cz" style="left:82px;top:177px;width:3px;background:#494949;box-shadow:inset 0 0 0 1px #646464;color:#b9b9b9;letter-spacing:-0.475px;">s</div>
<div class="cz" style="left:88px;top:177px;width:7px;background:#494949;box-shadow:inset 0 0 0 1px #646464;color:#b9b9b9;letter-spacing:-0.475px;">ss</div>
<div class="cz" style="left:99px;top:177px;width:15px;background:#494949;box-shadow:inset 0 0 0 1px #646464;color:#b9b9b9;letter-spacing:-0.478px;">syst</div>
<div class="cz" style="left:303px;top:177px;width:2px;background:#494949;box-shadow:inset 0 0 0 1px #646464;color:#b9b9b9;letter-spacing:0.000px;"></div>
<div class="cz" style="left:306px;top:177px;width:11px;background:#494949;box-shadow:inset 0 0 0 1px #646464;color:#b9b9b9;letter-spacing:0.022px;">au</div>
<div class="cz" style="left:320px;top:177px;width:9px;background:#494949;box-shadow:inset 0 0 0 1px #646464;color:#b9b9b9;letter-spacing:0.022px;">au</div>
<div class="cz" style="left:984px;top:177px;width:2px;background:#494949;box-shadow:inset 0 0 0 1px #646464;color:#b9b9b9;letter-spacing:0.022px;">a</div>
<div class="cz" style="left:986px;top:177px;width:8px;background:#494949;box-shadow:inset 0 0 0 1px #646464;color:#b9b9b9;letter-spacing:-0.259px;">a|s</div>
<div class="cz" style="left:1052px;top:177px;width:30px;background:#494949;box-shadow:inset 0 0 0 1px #646464;color:#b9b9b9;letter-spacing:-0.230px;">surfacef</div>
<div class="cz" style="left:1202px;top:177px;width:4px;background:#494949;box-shadow:inset 0 0 0 1px #646464;color:#b9b9b9;letter-spacing:-0.475px;">s</div>
<div class="cz" style="left:1239px;top:177px;width:57px;background:#494949;box-shadow:inset 0 0 0 1px #646464;color:#b9b9b9;letter-spacing:-0.264px;">tracy_systrace</div>
<div class="cz" style="left:1313px;top:177px;width:11px;background:#494949;box-shadow:inset 0 0 0 1px #646464;color:#b9b9b9;letter-spacing:0.022px;">au</div>
<div class="cz" style="left:1412px;top:177px;width:9px;background:#494949;box-shadow:inset 0 0 0 1px #646464;color:#b9b9b9;letter-spacing:0.021px;">ro</div>
<div class="cz" style="left:1459px;top:177px;width:12px;background:#494949;box-shadow:inset 0 0 0 1px #646464;color:#b9b9b9;letter-spacing:-0.144px;">sur</div>
<div class="cz" style="left:1671px;top:177px;width:11px;background:#494949;box-shadow:inset 0 0 0 1px #646464;color:#b9b9b9;letter-spacing:0.022px;">au</div>
<div class="cz" style="left:1731px;top:177px;width:15px;background:#494949;box-shadow:inset 0 0 0 1px #646464;color:#b9b9b9;letter-spacing:-0.143px;">sen</div>
<div class="cz" style="left:1750px;top:177px;width:10px;background:#494949;box-shadow:inset 0 0 0 1px #646464;color:#b9b9b9;letter-spacing:-0.475px;">ss</div>
<div class="cz" style="left:1768px;top:177px;width:35px;background:#494949;box-shadow:inset 0 0 0 1px #646464;color:#b9b9b9;letter-spacing:-0.350px;">system_s</div>
<div class="cz" style="left:1809px;top:177px;width:10px;background:#494949;box-shadow:inset 0 0 0 1px #646464;color:#b9b9b9;letter-spacing:-0.475px;">sy</div>
<div class="cz" style="left:25px;top:188px;width:5px;background:#494949;box-shadow:inset 0 0 0 1px #646464;color:#b9b9b9;letter-spacing:0.000px;"></div>
<div class="cz" style="left:68px;top:188px;width:22px;background:#494949;box-shadow:inset 0 0 0 1px #646464;color:#b9b9b9;letter-spacing:-0.372px;">kw.gm</div>
<div class="cz" style="left:94px;top:188px;width:8px;background:#494949;box-shadow:inset 0 0 0 1px #646464;color:#b9b9b9;letter-spacing:-0.475px;">s</div>
<div class="cz" style="left:297px;top:188px;width:14px;background:#494949;box-shadow:inset 0 0 0 1px #646464;color:#b9b9b9;letter-spacing:0.022px;">aud</div>
<div class="cz" style="left:315px;top:188px;width:3px;background:#494949;box-shadow:inset 0 0 0 1px #646464;color:#b9b9b9;letter-spacing:-0.475px;">s</div>
<div class="cz" style="left:390px;top:188px;width:12px;background:#494949;box-shadow:inset 0 0 0 1px #646464;color:#b9b9b9;letter-spacing:-0.469px;">kw</div>
<div class="cz" style="left:642px;top:188px;width:4px;background:#494949;box-shadow:inset 0 0 0 1px #646464;color:#b9b9b9;letter-spacing:0.022px;">a</div>
<div class="cz" style="left:649px;top:188px;width:8px;background:#494949;box-shadow:inset 0 0 0 1px #646464;color:#b9b9b9;letter-spacing:0.022px;">a</div>
<div class="cz" style="left:675px;top:188px;width:12px;background:#494949;box-shadow:inset 0 0 0 1px #646464;color:#b9b9b9;letter-spacing:-0.233px;">cfir</div>
<div class="cz" style="left:815px;top:188px;width:17px;background:#494949;box-shadow:inset 0 0 0 1px #646464;color:#b9b9b9;letter-spacing:-0.224px;">kwor</div>
<div class="cz" style="left:979px;top:188px;width:6px;background:#494949;box-shadow:inset 0 0 0 1px #646464;color:#b9b9b9;letter-spacing:0.022px;">a</div>
<div class="cz" style="left:989px;top:188px;width:8px;background:#494949;box-shadow:inset 0 0 0 1px #646464;color:#b9b9b9;letter-spacing:0.022px;">a</div>
<div class="cz" style="left:1169px;top:188px;width:6px;background:#494949;box-shadow:inset 0 0 0 1px #646464;color:#b9b9b9;letter-spacing:-0.481px;">cf</div>
<div class="cz" style="left:1199px;top:188px;width:6px;background:#494949;box-shadow:inset 0 0 0 1px #646464;color:#b9b9b9;letter-spacing:-0.475px;">s</div>
<div class="cz" style="left:1212px;top:188px;width:77px;background:#494949;box-shadow:inset 0 0 0 1px #646464;color:#b9b9b9;letter-spacing:-0.134px;">surfacefinger</div>
<div class="cz" style="left:1324px;top:188px;width:7px;background:#494949;box-shadow:inset 0 0 0 1px #646464;color:#b9b9b9;letter-spacing:0.022px;">a</div>
<div class="cz" style="left:1337px;top:188px;width:8px;background:#494949;box-shadow:inset 0 0 0 1px #646464;color:#b9b9b9;letter-spacing:0.022px;">a</div>
<div class="cz" style="left:1372px;top:188px;width:22px;background:#494949;box-shadow:inset 0 0 0 1px #646464;color:#b9b9b9;letter-spacing:-0.229px;">surfac</div>
<div class="cz" style="left:1426px;top:188px;width:9px;background:#494949;box-shadow:inset 0 0 0 1px #646464;color:#b9b9b9;letter-spacing:-0.455px;">m</div>
<div class="cz" style="left:1437px;top:188px;width:3px;background:#494949;box-shadow:inset 0 0 0 1px #646464;color:#b9b9b9;letter-spacing:-0.475px;">s</div>
<div class="cz" style="left:1440px;top:188px;width:39px;background:#494949;box-shadow:inset 0 0 0 1px #646464;color:#b9b9b9;letter-spacing:-0.162px;">surfacefing</div>
<div class="cz" style="left:1661px;top:188px;width:9px;background:#494949;box-shadow:inset 0 0 0 1px #646464;color:#b9b9b9;letter-spacing:0.022px;">au</div>
<div class="cz" style="left:1669px;top:188px;width:3px;background:#b89a5a;box-shadow:inset 0 0 0 1px #d8ba7a;color:#fff;letter-spacing:0.030px;">A</div>
<div class="cz" style="left:1675px;top:188px;width:7px;background:#b89a5a;box-shadow:inset 0 0 0 1px #d8ba7a;color:#fff;letter-spacing:0.030px;">A</div>
<div class="cz" style="left:1745px;top:188px;width:6px;background:#494949;box-shadow:inset 0 0 0 1px #646464;color:#b9b9b9;letter-spacing:-0.455px;">m</div>
<div class="cz" style="left:1758px;top:188px;width:16px;background:#494949;box-shadow:inset 0 0 0 1px #646464;color:#b9b9b9;letter-spacing:-0.143px;">sen</div>
<div class="cz" style="left:1774px;top:188px;width:8px;background:#494949;box-shadow:inset 0 0 0 1px #646464;color:#b9b9b9;letter-spacing:-0.479px;">cfs</div>
<div class="cz" style="left:1782px;top:188px;width:10px;background:#494949;box-shadow:inset 0 0 0 1px #646464;color:#b9b9b9;letter-spacing:-0.475px;">s</div>
<div class="cz" style="left:1796px;top:188px;width:17px;background:#494949;box-shadow:inset 0 0 0 1px #646464;color:#b9b9b9;letter-spacing:-0.349px;">.gms</div>
<div class="cz" style="left:5px;top:199px;width:47px;background:#494949;box-shadow:inset 0 0 0 1px #646464;color:#b9b9b9;letter-spacing:-0.134px;">surfaceflinge</div>
<div class="cz" style="left:56px;top:199px;width:34px;background:#494949;box-shadow:inset 0 0 0 1px #646464;color:#b9b9b9;letter-spacing:-0.308px;">system_se</div>
<div class="cz" style="left:90px;top:199px;width:20px;background:#6aaa70;box-shadow:inset 0 0 0 1px #8cc890;color:#fff;letter-spacing:-0.101px;">Thre</div>
<div class="cz" style="left:113px;top:199px;width:194px;background:#6aaa70;box-shadow:inset 0 0 0 1px #8cc890;color:#fff;letter-spacing:-0.039px;">Thread-2</div>
<div class="cz" style="left:307px;top:199px;width:6px;background:#494949;box-shadow:inset 0 0 0 1px #646464;color:#b9b9b9;letter-spacing:-0.455px;">m</div>
<div class="cz" style="left:312px;top:199px;width:4px;background:#6aaa70;box-shadow:inset 0 0 0 1px #8cc890;color:#fff;letter-spacing:0.000px;"></div>
<div class="cz" style="left:315px;top:199px;width:5px;background:#494949;box-shadow:inset 0 0 0 1px #646464;color:#b9b9b9;letter-spacing:0.022px;">a</div>
<div class="cz" style="left:321px;top:199px;width:609px;background:#6aaa70;box-shadow:inset 0 0 0 1px #8cc890;color:#fff;letter-spacing:-0.039px;">Thread-2</div>
<div class="cz" style="left:930px;top:199px;width:78px;background:#494949;box-shadow:inset 0 0 0 1px #646464;color:#b9b9b9;letter-spacing:-0.085px;">audioserver (/audio</div>
<div class="cz" style="left:1008px;top:199px;width:8px;background:#494949;box-shadow:inset 0 0 0 1px #646464;color:#b9b9b9;letter-spacing:0.022px;">a</div>
<div class="cz" style="left:1204px;top:199px;width:9px;background:#494949;box-shadow:inset 0 0 0 1px #646464;color:#b9b9b9;letter-spacing:-0.226px;">su</div>
<div class="cz" style="left:1244px;top:199px;width:17px;background:#494949;box-shadow:inset 0 0 0 1px #646464;color:#b9b9b9;letter-spacing:-0.224px;">rkwo</div>
<div class="cz" style="left:1331px;top:199px;width:5px;background:#494949;box-shadow:inset 0 0 0 1px #646464;color:#b9b9b9;letter-spacing:0.022px;">a</div>
<div class="cz" style="left:1421px;top:199px;width:20px;background:#494949;box-shadow:inset 0 0 0 1px #646464;color:#b9b9b9;letter-spacing:-0.179px;">rot_c</div>
<div class="cz" style="left:1440px;top:199px;width:7px;background:#494949;box-shadow:inset 0 0 0 1px #646464;color:#b9b9b9;letter-spacing:0.022px;">o</div>
<div class="cz" style="left:1522px;top:199px;width:27px;background:#494949;box-shadow:inset 0 0 0 1px #646464;color:#b9b9b9;letter-spacing:-0.225px;">kworke</div>
<div class="cz" style="left:1652px;top:199px;width:10px;background:#494949;box-shadow:inset 0 0 0 1px #646464;color:#b9b9b9;letter-spacing:0.022px;">au</div>
<div class="cz" style="left:1665px;top:199px;width:7px;background:#494949;box-shadow:inset 0 0 0 1px #646464;color:#b9b9b9;letter-spacing:0.022px;">a</div>
<div class="cz" style="left:1722px;top:199px;width:10px;background:#494949;box-shadow:inset 0 0 0 1px #646464;color:#b9b9b9;letter-spacing:-0.469px;">kw</div>
<div class="cz" style="left:1742px;top:199px;width:18px;background:#494949;box-shadow:inset 0 0 0 1px #646464;color:#b9b9b9;letter-spacing:-0.179px;">rot_c</div>
<div class="cz" style="left:1768px;top:199px;width:5px;background:#494949;box-shadow:inset 0 0 0 1px #646464;color:#b9b9b9;letter-spacing:-0.475px;">k</div>
<div class="cz" style="left:1775px;top:199px;width:8px;background:#494949;box-shadow:inset 0 0 0 1px #646464;color:#b9b9b9;letter-spacing:-0.475px;">s</div>
<div class="cz" style="left:1801px;top:199px;width:11px;background:#494949;box-shadow:inset 0 0 0 1px #646464;color:#b9b9b9;letter-spacing:-0.226px;">se</div>
<div class="cz" style="left:5px;top:210px;width:3px;background:#494949;box-shadow:inset 0 0 0 1px #646464;color:#b9b9b9;letter-spacing:-0.475px;">x</div>
<div class="cz" style="left:24px;top:210px;width:5px;background:#494949;box-shadow:inset 0 0 0 1px #646464;color:#b9b9b9;letter-spacing:0.000px;"></div>
<div class="cz" style="left:48px;top:210px;width:13px;background:#494949;box-shadow:inset 0 0 0 1px #646464;color:#b9b9b9;letter-spacing:-0.226px;">se</div>
<div class="cz" style="left:71px;top:210px;width:40px;background:#494949;box-shadow:inset 0 0 0 1px #646464;color:#b9b9b9;letter-spacing:-0.277px;">tracy_sysn</div>
<div class="cz" style="left:114px;top:210px;width:159px;background:#494949;box-shadow:inset 0 0 0 1px #646464;color:#b9b9b9;letter-spacing:-0.264px;">tracy_systrace</div>
<div class="cz" style="left:303px;top:210px;width:21px;background:#494949;box-shadow:inset 0 0 0 1px #646464;color:#b9b9b9;letter-spacing:-0.080px;">rot_d</div>
<div class="cz" style="left:634px;top:210px;width:8px;background:#494949;box-shadow:inset 0 0 0 1px #646464;color:#b9b9b9;letter-spacing:0.022px;">a</div>
<div class="cz" style="left:645px;top:210px;width:4px;background:#494949;box-shadow:inset 0 0 0 1px #646464;color:#b9b9b9;letter-spacing:0.022px;">a</div>
<div class="cz" style="left:662px;top:210px;width:14px;background:#494949;box-shadow:inset 0 0 0 1px #646464;color:#b9b9b9;letter-spacing:-0.216px;">md</div>
<div class="cz" style="left:805px;top:210px;width:20px;background:#494949;box-shadow:inset 0 0 0 1px #646464;color:#b9b9b9;letter-spacing:-0.351px;">kgks</div>
<div class="cz" style="left:972px;top:210px;width:10px;background:#494949;box-shadow:inset 0 0 0 1px #646464;color:#b9b9b9;letter-spacing:0.022px;">au</div>
<div class="cz" style="left:982px;top:210px;width:72px;background:#6aaa70;box-shadow:inset 0 0 0 1px #8cc890;color:#fff;letter-spacing:-0.039px;">Thread-2</div>
<div class="cz" style="left:1056px;top:210px;width:6px;background:#494949;box-shadow:inset 0 0 0 1px #646464;color:#b9b9b9;letter-spacing:-0.475px;">k</div>
<div class="cz" style="left:1128px;top:210px;width:113px;background:#494949;box-shadow:inset 0 0 0 1px #646464;color:#b9b9b9;letter-spacing:-0.264px;">tracy_systrace</div>
<div class="cz" style="left:1241px;top:210px;width:4px;background:#494949;box-shadow:inset 0 0 0 1px #646464;color:#b9b9b9;letter-spacing:0.022px;">n</div>
<div class="cz" style="left:1256px;top:210px;width:4px;background:#494949;box-shadow:inset 0 0 0 1px #646464;color:#b9b9b9;letter-spacing:-0.475px;">s</div>
<div class="cz" style="left:1287px;top:210px;width:90px;background:#494949;box-shadow:inset 0 0 0 1px #646464;color:#b9b9b9;letter-spacing:-0.192px;">composer@2.1-se (Hw</div>
<div class="cz" style="left:1393px;top:210px;width:48px;background:#494949;box-shadow:inset 0 0 0 1px #646464;color:#b9b9b9;letter-spacing:-0.154px;">composer@</div>
<div class="cz" style="left:1440px;top:210px;width:1px;background:#494949;box-shadow:inset 0 0 0 1px #646464;color:#b9b9b9;letter-spacing:0.000px;"></div>
<div class="cz" style="left:1658px;top:210px;width:6px;background:#494949;box-shadow:inset 0 0 0 1px #646464;color:#b9b9b9;letter-spacing:0.022px;">p</div>
<div class="cz" style="left:1664px;top:210px;width:58px;background:#b27a6c;box-shadow:inset 0 0 0 1px #d09a8c;color:#fff;letter-spacing:-0.245px;">GUIF worker 0</div>
<div class="cz" style="left:1729px;top:210px;width:43px;background:#b27a6c;box-shadow:inset 0 0 0 1px #d09a8c;color:#fff;letter-spacing:-0.274px;">GUIF worke</div>
<div class="cz" style="left:1775px;top:210px;width:30px;background:#b27a6c;box-shadow:inset 0 0 0 1px #d09a8c;color:#fff;letter-spacing:-0.388px;">GUIF w</div>
<div class="cz" style="left:1807px;top:210px;width:95px;background:#b27a6c;box-shadow:inset 0 0 0 1px #d09a8c;color:#fff;text-align:right;padding-right:2px;letter-spacing:-0.245px;">GUIF worker 0</div>
<div class="cz" style="left:61px;top:254px;width:12px;background:#6aaa70;box-shadow:inset 0 0 0 1px #8cc890;color:#fff;letter-spacing:-0.142px;">Thr</div>
<div class="cz" style="left:73px;top:254px;width:17px;background:#494949;box-shadow:inset 0 0 0 1px #646464;color:#b9b9b9;letter-spacing:-0.378px;">syste</div>
<div class="cz" style="left:109px;top:254px;width:8px;background:#5fa878;box-shadow:inset 0 0 0 1px #88c89a;color:#fff;letter-spacing:-0.455px;">M</div>
<div class="cz" style="left:160px;top:254px;width:24px;background:#b27a6c;box-shadow:inset 0 0 0 1px #d09a8c;color:#fff;letter-spacing:-0.345px;">GUIF</div>
<div class="cz" style="left:184px;top:254px;width:25px;background:#34346e;box-shadow:inset 0 0 0 1px #5656a0;color:#c9c9e8;letter-spacing:-0.310px;">Tracy </div>
<div class="cz" style="left:208px;top:254px;width:18px;background:#b872b4;box-shadow:inset 0 0 0 1px #d596d0;color:#fff;letter-spacing:-0.304px;">GUI</div>
<div class="cz" style="left:226px;top:254px;width:38px;background:#b27a6c;box-shadow:inset 0 0 0 1px #d09a8c;color:#fff;letter-spacing:-0.286px;">GUIF wor</div>
<div class="cz" style="left:386px;top:254px;width:26px;background:#34346e;box-shadow:inset 0 0 0 1px #5656a0;color:#c9c9e8;letter-spacing:-0.262px;">Tracy S</div>
<div class="cz" style="left:647px;top:254px;width:148px;background:#34346e;box-shadow:inset 0 0 0 1px #5656a0;color:#c9c9e8;letter-spacing:-0.158px;">Tracy Profiler</div>
<div class="cz" style="left:981px;top:254px;width:8px;background:#b89a5a;box-shadow:inset 0 0 0 1px #d8ba7a;color:#fff;letter-spacing:0.030px;">A</div>
<div class="cz" style="left:1081px;top:254px;width:122px;background:#6aaa70;box-shadow:inset 0 0 0 1px #8cc890;color:#fff;letter-spacing:-0.039px;">Thread-2</div>
<div class="cz" style="left:1267px;top:254px;width:17px;background:#34346e;box-shadow:inset 0 0 0 1px #5656a0;color:#c9c9e8;letter-spacing:-0.225px;">Trac</div>
<div class="cz" style="left:1468px;top:254px;width:65px;background:#6aaa70;box-shadow:inset 0 0 0 1px #8cc890;color:#fff;letter-spacing:-0.039px;">Thread-2</div>
<div class="cz" style="left:1533px;top:254px;width:82px;background:#b872b4;box-shadow:inset 0 0 0 1px #d596d0;color:#fff;letter-spacing:-0.245px;">GUIF worker 2</div>
<div class="cz" style="left:1617px;top:254px;width:30px;background:#b27a6c;box-shadow:inset 0 0 0 1px #d09a8c;color:#fff;letter-spacing:-0.388px;">GUIF w</div>
<div class="cz" style="left:1647px;top:254px;width:51px;background:#34346e;box-shadow:inset 0 0 0 1px #5656a0;color:#c9c9e8;letter-spacing:-0.158px;">Tracy Profiler</div>
<div class="cz" style="left:1774px;top:254px;width:4px;background:#b89a5a;box-shadow:inset 0 0 0 1px #d8ba7a;color:#fff;letter-spacing:0.030px;">A</div>
<div class="cz" style="left:1792px;top:254px;width:18px;background:#494949;box-shadow:inset 0 0 0 1px #646464;color:#b9b9b9;letter-spacing:-0.378px;">syste</div>
<div class="cz" style="left:1815px;top:254px;width:9px;background:#5fa878;box-shadow:inset 0 0 0 1px #88c89a;color:#fff;letter-spacing:-0.455px;">M</div>
<div style="left:4px;top:188px;width:1px;height:10px;background:#646464;"></div>
<svg style="left:0;top:170px" width="1920" height="100" viewBox="0 170 1920 100"><path d="M7.5 194l1.500 -2 1.500 2M112.5 194l1.500 -2 1.500 2M109.5 205l1.500 -2 1.500 2M110.5 216l1.500 -2 1.500 2M328.5 216l1.500 -2 1.500 2M263.5 260l1.500 -2 1.500 2M310.5 260l1.500 -2 1.500 2M638.5 183l1.500 -2 1.500 2M649.5 183l1.500 -2 1.500 2M656.5 216l1.500 -2 1.500 2M676.5 216l1.500 -2 1.500 2M977.5 183l1.500 -2 1.500 2M997.5 183l1.500 -2 1.500 2M1235.5 183l1.500 -2 1.500 2M1330.5 183l1.500 -2 1.500 2M1320.5 205l1.500 -2 1.500 2M1344.5 205l1.500 -2 1.500 2M1683.5 183l1.500 -2 1.500 2M1746.5 183l1.500 -2 1.500 2M1670.5 194l1.500 -2 1.500 2M1792.5 194l1.500 -2 1.500 2M1679.5 205l1.500 -2 1.500 2M1818.5 205l1.500 -2 1.500 2M1447.5 216l1.500 -2 1.500 2M1614.5 260l1.500 -2 1.500 2" fill="none" stroke="#8c8c8c" stroke-width="0.900"/></svg>
<span class="sm" style="left:19px;top:177px;color:#dd88dd">CPU 0</span>
<span class="sm" style="left:19px;top:188px;color:#dd88dd">CPU 1</span>
<span class="sm" style="left:19px;top:199px;color:#dd88dd">CPU 2</span>
<span class="sm" style="left:19px;top:210px;color:#dd88dd">CPU 3</span>
<span class="sm" style="left:19px;top:221px;color:#dd88dd">CPU 4</span>
<span class="sm" style="left:19px;top:232px;color:#dd88dd">CPU 5</span>
<span class="sm" style="left:19px;top:243px;color:#dd88dd">CPU 6</span>
<span class="sm" style="left:19px;top:254px;color:#dd88dd">CPU 7</span>
<svg style="left:8.200px;top:272.5px" width="6.400" height="5.600" viewBox="0 0 8 7" preserveAspectRatio="none"><path d="M0 0h8L4 7z" fill="#fff"/></svg>
<span style="left:19px;top:269px;color:#fff;letter-spacing:-0.437px;">Thread-2</span>
<div style="left:4px;top:283px;width:1898px;height:1px;background:#4a4a46;"></div>
<div style="left:4px;top:289px;width:57px;height:2px;background:#b8242a;"></div>
<div style="left:61px;top:289px;width:13px;height:2px;background:#22d826;"></div>
<div style="left:74px;top:289px;width:17px;height:2px;background:#1f78e8;"></div>
<div style="left:91px;top:289px;width:20px;height:2px;background:#22d826;"></div>
<div style="left:111px;top:289px;width:2px;height:2px;background:#b8242a;"></div>
<div style="left:113px;top:289px;width:194px;height:2px;background:#22d826;"></div>
<div style="left:307px;top:289px;width:5px;height:2px;background:#b8242a;"></div>
<div style="left:312px;top:289px;width:4px;height:2px;background:#22d826;"></div>
<div style="left:316px;top:289px;width:5px;height:2px;background:#b8242a;"></div>
<div style="left:321px;top:289px;width:610px;height:2px;background:#22d826;"></div>
<div style="left:931px;top:289px;width:51px;height:2px;background:#1f78e8;"></div>
<div style="left:982px;top:289px;width:72px;height:2px;background:#22d826;"></div>
<div style="left:1054px;top:289px;width:25px;height:2px;background:#1f78e8;"></div>
<div style="left:1079px;top:289px;width:2px;height:2px;background:#b8242a;"></div>
<div style="left:1081px;top:289px;width:459px;height:2px;background:#22d826;"></div>
<div style="left:1540px;top:289px;width:75px;height:2px;background:#b8242a;"></div>
<div style="left:1615px;top:289px;width:4px;height:2px;background:#22d826;"></div>
<div style="left:1619px;top:289px;width:65px;height:2px;background:#1f78e8;"></div>
<div style="left:1684px;top:289px;width:4px;height:2px;background:#22d826;"></div>
<div style="left:1688px;top:289px;width:214px;height:2px;background:#1f78e8;"></div>
<div class="z" style="left:4px;top:296px;width:1084px;background:#68a56c;box-shadow:inset 0 0 0 1px #7ec582;"><b style="left:103px;color:#fff;letter-spacing:-0.038px;">PrivateTick</b><i style="left:0px;width:57px;background:rgba(0,0,0,.3)"></i><i style="left:70px;width:17px;background:rgba(0,0,0,.3)"></i><i style="left:107px;width:2px;background:rgba(0,0,0,.3)"></i><i style="left:303px;width:5px;background:rgba(0,0,0,.3)"></i><i style="left:312px;width:5px;background:rgba(0,0,0,.3)"></i><i style="left:927px;width:51px;background:rgba(0,0,0,.3)"></i><i style="left:1050px;width:25px;background:rgba(0,0,0,.3)"></i><i style="left:1075px;width:2px;background:rgba(0,0,0,.3)"></i></div>
<div class="z" style="left:1099px;top:296px;width:803px;background:#68a56c;box-shadow:inset 0 0 0 1px #7ec582;"><b style="left:553px;color:#fff;letter-spacing:-0.038px;">PrivateTick</b><i style="left:441px;width:75px;background:rgba(0,0,0,.3)"></i><i style="left:520px;width:65px;background:rgba(0,0,0,.3)"></i><i style="left:589px;width:214px;background:rgba(0,0,0,.3)"></i></div>
<div class="z" style="left:4px;top:312px;width:1084px;background:#639d67;box-shadow:inset 0 0 0 1px #78bb7c;"><b style="left:140px;color:#fff;letter-spacing:-0.274px;">OnRedraw</b><i style="left:0px;width:57px;background:rgba(0,0,0,.3)"></i><i style="left:70px;width:17px;background:rgba(0,0,0,.3)"></i><i style="left:107px;width:2px;background:rgba(0,0,0,.3)"></i><i style="left:303px;width:5px;background:rgba(0,0,0,.3)"></i><i style="left:312px;width:5px;background:rgba(0,0,0,.3)"></i><i style="left:927px;width:51px;background:rgba(0,0,0,.3)"></i><i style="left:1050px;width:25px;background:rgba(0,0,0,.3)"></i><i style="left:1075px;width:2px;background:rgba(0,0,0,.3)"></i></div>
<div class="z" style="left:1102px;top:312px;width:800px;background:#639d67;box-shadow:inset 0 0 0 1px #78bb7c;"><b style="left:600px;color:#fff;letter-spacing:-0.274px;">OnRedraw</b><i style="left:438px;width:75px;background:rgba(0,0,0,.3)"></i><i style="left:517px;width:65px;background:rgba(0,0,0,.3)"></i><i style="left:586px;width:214px;background:rgba(0,0,0,.3)"></i></div>
<span style="left:1128px;top:313px;color:#fff;letter-spacing:-0.218px;text-shadow:1px 1px 0 rgba(0,0,0,.6);">Update</span>
<div class="z" style="left:4px;top:328px;width:139px;background:#5e9561;box-shadow:inset 0 0 0 1px #72b276;"><b style="left:0px;color:#fff;letter-spacing:-0.315px;">BeginFrame</b><i style="left:0px;width:57px;background:rgba(0,0,0,.3)"></i><i style="left:70px;width:17px;background:rgba(0,0,0,.3)"></i><i style="left:107px;width:2px;background:rgba(0,0,0,.3)"></i></div>
<div class="z" style="left:145px;top:328px;width:381px;background:#5e9561;"><b style="left:169px;color:#fff;letter-spacing:-0.341px;">Render</b><i style="left:162px;width:5px;background:rgba(0,0,0,.3)"></i><i style="left:171px;width:5px;background:rgba(0,0,0,.3)"></i></div>
<div style="left:144px;top:327px;width:383px;height:17px;border:3px solid #44e244;"></div>
<div class="z" style="left:531px;top:328px;width:557px;background:#5e9561;box-shadow:inset 0 0 0 1px #72b276;"><b style="left:248px;color:#fff;letter-spacing:-0.337px;">EndFrame</b><i style="left:400px;width:51px;background:rgba(0,0,0,.3)"></i><i style="left:523px;width:25px;background:rgba(0,0,0,.3)"></i><i style="left:548px;width:2px;background:rgba(0,0,0,.3)"></i></div>
<div class="z" style="left:1105px;top:328px;width:797px;background:#5e9561;box-shadow:inset 0 0 0 1px #72b276;"><b style="left:650px;color:#fff;letter-spacing:-0.341px;">Render</b><i style="left:435px;width:75px;background:rgba(0,0,0,.3)"></i><i style="left:514px;width:65px;background:rgba(0,0,0,.3)"></i><i style="left:583px;width:214px;background:rgba(0,0,0,.3)"></i></div>
<span style="left:1140px;top:329px;color:#fff;letter-spacing:-0.038px;text-shadow:1px 1px 0 rgba(0,0,0,.6);">call</span>
<div class="z" style="left:145px;top:344px;width:11px;background:#598d5d;box-shadow:inset 0 0 0 1px #6caa70;"><b style="left:0px;color:#fff;letter-spacing:0.049px;">FC</b></div>
<div class="z" style="left:168px;top:344px;width:43px;background:#598d5d;box-shadow:inset 0 0 0 1px #6caa70;"><b style="left:0px;color:#fff;letter-spacing:-0.341px;">Render</b></div>
<div class="z" style="left:212px;top:344px;width:310px;background:#598d5d;box-shadow:inset 0 0 0 1px #6caa70;"><b style="left:122px;color:#fff;letter-spacing:-0.300px;">RenderJob</b><i style="left:95px;width:5px;background:rgba(0,0,0,.3)"></i><i style="left:104px;width:5px;background:rgba(0,0,0,.3)"></i></div>
<div class="z" style="left:522px;top:344px;width:4px;background:#598d5d;box-shadow:inset 0 0 0 1px #6caa70;"><b style="left:0px;color:#fff;letter-spacing:0.285px;">s</b></div>
<div class="z" style="left:532px;top:344px;width:11px;background:#960000;box-shadow:inset 0 0 0 1px #b01c1c;"><b style="left:0px;color:#fff;letter-spacing:0.301px;">C</b></div>
<div class="z" style="left:1127px;top:344px;width:15px;background:#e040e0;box-shadow:inset 0 0 0 1px #f070f0;"><b style="left:0px;color:#fff;letter-spacing:0.164px;">Sc</b></div>
<div class="z" style="left:1147px;top:344px;width:12px;background:#e040e0;box-shadow:inset 0 0 0 1px #f070f0;"><b style="left:0px;color:#fff;letter-spacing:0.164px;">Sc</b></div>
<div class="z" style="left:1167px;top:344px;width:10px;background:#e040e0;box-shadow:inset 0 0 0 1px #f070f0;"><b style="left:0px;color:#fff;letter-spacing:0.042px;">S</b></div>
<div class="z" style="left:1179px;top:344px;width:5px;background:#e040e0;box-shadow:inset 0 0 0 1px #f070f0;"><b style="left:0px;color:#fff;letter-spacing:0.042px;">S</b></div>
<div class="z" style="left:171px;top:360px;width:40px;background:#9a9a20;box-shadow:inset 0 0 0 2px #adb034;"><b style="left:0px;color:#fff;letter-spacing:-0.315px;">Rende</b></div>
<div class="z" style="left:213px;top:360px;width:308px;background:#9a9a20;box-shadow:inset 0 0 0 2px #adb034;"><b style="left:133px;color:#fff;letter-spacing:-0.341px;">Render</b><i style="left:94px;width:5px;background:rgba(0,0,0,.3)"></i><i style="left:103px;width:5px;background:rgba(0,0,0,.3)"></i></div>
<div class="z" style="left:1127px;top:360px;width:14px;background:#558658;box-shadow:inset 0 0 0 1px #67a16b;"><b style="left:0px;color:#fff;letter-spacing:0.041px;">Ty</b></div>
<div class="z" style="left:1147px;top:360px;width:11px;background:#558658;box-shadow:inset 0 0 0 1px #67a16b;"><b style="left:0px;color:#fff;letter-spacing:0.041px;">Ty</b></div>
<div class="z" style="left:1167px;top:360px;width:9px;background:#558658;box-shadow:inset 0 0 0 1px #67a16b;"><b style="left:0px;color:#fff;letter-spacing:-0.204px;">T</b></div>
<div class="z" style="left:1179px;top:360px;width:5px;background:#558658;box-shadow:inset 0 0 0 1px #67a16b;"><b style="left:0px;color:#fff;letter-spacing:-0.204px;">T</b></div>
<div class="z" style="left:172px;top:376px;width:4px;background:#508054;box-shadow:inset 0 0 0 1px #629966;"><b style="left:0px;color:#fff;letter-spacing:-0.204px;">F</b></div>
<div class="z" style="left:176px;top:376px;width:35px;background:#508054;box-shadow:inset 0 0 0 1px #629966;"><svg style="left:0;top:0" width="35" height="15"><polyline points="1,5.5 3.75,9.5 6.5,5.5 9.25,9.5 12,5.5 14.75,9.5 17.5,5.5 20.25,9.5 23,5.5 25.75,9.5 28.5,5.5 31.25,9.5" fill="none" stroke="rgba(0,0,0,.32)" stroke-width="1"/></svg><b style="left:0;width:35px;text-align:center;color:#e8964a;letter-spacing:-0.469px;">18</b></div>
<div class="z" style="left:214px;top:376px;width:57px;background:#508054;box-shadow:inset 0 0 0 1px #629966;"><b style="left:0;width:57px;text-align:center;color:#fff;letter-spacing:-0.341px;">Render</b></div>
<div class="z" style="left:272px;top:376px;width:70px;background:#508054;box-shadow:inset 0 0 0 1px #629966;"><b style="left:0;width:70px;text-align:center;color:#fff;letter-spacing:-0.341px;">Render</b><i style="left:35px;width:5px;background:rgba(0,0,0,.3)"></i><i style="left:44px;width:5px;background:rgba(0,0,0,.3)"></i></div>
<div class="z" style="left:343px;top:376px;width:57px;background:#508054;box-shadow:inset 0 0 0 1px #629966;"><b style="left:0;width:57px;text-align:center;color:#fff;letter-spacing:-0.341px;">Render</b></div>
<div class="z" style="left:401px;top:376px;width:55px;background:#508054;box-shadow:inset 0 0 0 1px #629966;"><b style="left:0;width:55px;text-align:center;color:#fff;letter-spacing:-0.341px;">Render</b></div>
<div class="z" style="left:457px;top:376px;width:48px;background:#508054;box-shadow:inset 0 0 0 1px #629966;"><b style="left:3px;color:#fff;letter-spacing:-0.248px;">Render F</b></div>
<div class="z" style="left:505px;top:376px;width:15px;background:#508054;box-shadow:inset 0 0 0 1px #629966;"><svg style="left:0;top:0" width="15" height="15"><polyline points="1,5.5 3.75,9.5 6.5,5.5 9.25,9.5 12,5.5" fill="none" stroke="rgba(0,0,0,.32)" stroke-width="1"/></svg></div>
<div class="z" style="left:1127px;top:376px;width:4px;background:#508054;box-shadow:inset 0 0 0 1px #629966;"></div>
<div class="z" style="left:1148px;top:376px;width:2px;background:#508054;"></div>
<div class="z" style="left:1168px;top:376px;width:2px;background:#508054;"></div>
<div class="z" style="left:1179px;top:376px;width:3px;background:#508054;"></div>
<div class="z" style="left:172px;top:392px;width:3px;background:#4c794f;"></div>
<div class="z" style="left:216px;top:392px;width:51px;background:#4c794f;box-shadow:inset 0 0 0 1px #5d9261;"><b style="left:0px;color:#fff;letter-spacing:-0.179px;">CalcGeo</b></div>
<div class="z" style="left:272px;top:392px;width:68px;background:#4c794f;box-shadow:inset 0 0 0 1px #5d9261;"><b style="left:0px;color:#fff;letter-spacing:-0.212px;">CalcGeome</b><i style="left:35px;width:5px;background:rgba(0,0,0,.3)"></i><i style="left:44px;width:5px;background:rgba(0,0,0,.3)"></i></div>
<div class="z" style="left:343px;top:392px;width:55px;background:#4c794f;box-shadow:inset 0 0 0 1px #5d9261;"><b style="left:0px;color:#fff;letter-spacing:-0.215px;">CalcGeor</b></div>
<div class="z" style="left:401px;top:392px;width:53px;background:#4c794f;box-shadow:inset 0 0 0 1px #5d9261;"><b style="left:0px;color:#fff;letter-spacing:-0.154px;">CalcGeoi</b></div>
<div class="z" style="left:457px;top:392px;width:47px;background:#4c794f;box-shadow:inset 0 0 0 1px #5d9261;"><b style="left:0px;color:#fff;letter-spacing:-0.071px;">CalcGec</b></div>
<div class="z" style="left:508px;top:392px;width:3px;background:#4c794f;"></div>
<div class="z" style="left:216px;top:408px;width:50px;background:#49734b;box-shadow:inset 0 0 0 1px #598b5c;"><svg style="left:0;top:0" width="50" height="15"><polyline points="1,5.5 3.75,9.5 6.5,5.5 9.25,9.5 12,5.5 14.75,9.5 17.5,5.5 20.25,9.5 23,5.5 25.75,9.5 28.5,5.5 31.25,9.5 34,5.5 36.75,9.5 39.5,5.5 42.25,9.5 45,5.5 47.75,9.5" fill="none" stroke="rgba(0,0,0,.32)" stroke-width="1"/></svg><b style="left:0;width:50px;text-align:center;color:#e8964a;letter-spacing:-0.469px;">24</b></div>
<div class="z" style="left:272px;top:408px;width:34px;background:#49734b;box-shadow:inset 0 0 0 1px #598b5c;"><svg style="left:0;top:0" width="34" height="15"><polyline points="1,5.5 3.75,9.5 6.5,5.5 9.25,9.5 12,5.5 14.75,9.5 17.5,5.5 20.25,9.5 23,5.5 25.75,9.5 28.5,5.5 31.25,9.5" fill="none" stroke="rgba(0,0,0,.32)" stroke-width="1"/></svg><b style="left:0;width:34px;text-align:center;color:#e8964a;letter-spacing:-0.469px;">16</b></div>
<div class="z" style="left:306px;top:408px;width:15px;background:#49734b;box-shadow:inset 0 0 0 1px #598b5c;"><b style="left:0px;color:#fff;letter-spacing:0.301px;">CC</b><i style="left:1px;width:5px;background:rgba(0,0,0,.3)"></i><i style="left:10px;width:5px;background:rgba(0,0,0,.3)"></i></div>
<div class="z" style="left:321px;top:408px;width:15px;background:#49734b;box-shadow:inset 0 0 0 1px #598b5c;"><svg style="left:0;top:0" width="15" height="15"><polyline points="1,5.5 3.75,9.5 6.5,5.5 9.25,9.5 12,5.5" fill="none" stroke="rgba(0,0,0,.32)" stroke-width="1"/></svg><b style="left:0;width:15px;text-align:center;color:#e8964a;letter-spacing:-0.469px;">8</b></div>
<div class="z" style="left:343px;top:408px;width:40px;background:#49734b;box-shadow:inset 0 0 0 1px #598b5c;"><svg style="left:0;top:0" width="40" height="15"><polyline points="1,5.5 3.75,9.5 6.5,5.5 9.25,9.5 12,5.5 14.75,9.5 17.5,5.5 20.25,9.5 23,5.5 25.75,9.5 28.5,5.5 31.25,9.5 34,5.5 36.75,9.5" fill="none" stroke="rgba(0,0,0,.32)" stroke-width="1"/></svg><b style="left:0;width:40px;text-align:center;color:#e8964a;letter-spacing:-0.469px;">22</b></div>
<div class="z" style="left:383px;top:408px;width:14px;background:#49734b;box-shadow:inset 0 0 0 1px #598b5c;"><b style="left:0;width:14px;text-align:center;color:#fff;letter-spacing:0.301px;">C</b></div>
<div class="z" style="left:401px;top:408px;width:51px;background:#49734b;box-shadow:inset 0 0 0 1px #598b5c;"><svg style="left:0;top:0" width="51" height="15"><polyline points="1,5.5 3.75,9.5 6.5,5.5 9.25,9.5 12,5.5 14.75,9.5 17.5,5.5 20.25,9.5 23,5.5 25.75,9.5 28.5,5.5 31.25,9.5 34,5.5 36.75,9.5 39.5,5.5 42.25,9.5 45,5.5 47.75,9.5" fill="none" stroke="rgba(0,0,0,.32)" stroke-width="1"/></svg><b style="left:0;width:51px;text-align:center;color:#e8964a;letter-spacing:-0.469px;">26</b></div>
<div class="z" style="left:457px;top:408px;width:46px;background:#49734b;box-shadow:inset 0 0 0 1px #598b5c;"><svg style="left:0;top:0" width="46" height="15"><polyline points="1,5.5 3.75,9.5 6.5,5.5 9.25,9.5 12,5.5 14.75,9.5 17.5,5.5 20.25,9.5 23,5.5 25.75,9.5 28.5,5.5 31.25,9.5 34,5.5 36.75,9.5 39.5,5.5 42.25,9.5" fill="none" stroke="rgba(0,0,0,.32)" stroke-width="1"/></svg><b style="left:0;width:46px;text-align:center;color:#e8964a;letter-spacing:-0.469px;">24</b></div>
<svg style="left:8.200px;top:431.5px" width="6.400" height="5.600" viewBox="0 0 8 7" preserveAspectRatio="none"><path d="M0 0h8L4 7z" fill="#fff"/></svg>
<span style="left:19px;top:428px;color:#fff;letter-spacing:-0.101px;">GUIF worker 2</span>
<div style="left:4px;top:442px;width:1898px;height:1px;background:#4a4a46;"></div>
<div style="left:4px;top:448px;width:161px;height:2px;background:#1f78e8;"></div>
<div style="left:165px;top:448px;width:20px;height:2px;background:#22d826;"></div>
<div style="left:185px;top:448px;width:24px;height:2px;background:#b8242a;"></div>
<div style="left:209px;top:448px;width:17px;height:2px;background:#22d826;"></div>
<div style="left:226px;top:448px;width:1314px;height:2px;background:#b8242a;"></div>
<div style="left:1540px;top:448px;width:75px;height:2px;background:#22d826;"></div>
<div style="left:1615px;top:448px;width:287px;height:2px;background:#1f78e8;"></div>
<div class="z" style="left:166px;top:455px;width:59px;background:#b26cad;box-shadow:inset 0 0 0 1px #d482ce;"><b style="left:0px;color:#fff;letter-spacing:-0.246px;">RenderJol</b><i style="left:19px;width:24px;background:rgba(0,0,0,.3)"></i></div>
<div class="z" style="left:167px;top:471px;width:58px;background:#9a9a20;box-shadow:inset 0 0 0 2px #adb034;"><b style="left:0;width:58px;text-align:center;color:#fff;letter-spacing:-0.341px;">Render</b><i style="left:18px;width:24px;background:rgba(0,0,0,.3)"></i></div>
<div class="z" style="left:168px;top:487px;width:3px;background:#a1619c;"><b style="left:0px;color:#fff;letter-spacing:0.285px;">s</b></div>
<div class="z" style="left:171px;top:487px;width:10px;background:#a1619c;box-shadow:inset 0 0 0 1px #c076bb;"><svg style="left:0;top:0" width="10" height="15"><polyline points="1,5.5 3.75,9.5 6.5,5.5" fill="none" stroke="rgba(0,0,0,.32)" stroke-width="1"/></svg><b style="left:0;width:10px;text-align:center;color:#e8964a;letter-spacing:-0.469px;">8</b></div>
<div class="z" style="left:181px;top:487px;width:28px;background:#a1619c;box-shadow:inset 0 0 0 1px #c076bb;"><b style="left:0px;color:#fff;letter-spacing:-0.277px;">Rend</b><i style="left:4px;width:24px;background:rgba(0,0,0,.3)"></i></div>
<div class="z" style="left:209px;top:487px;width:15px;background:#a1619c;box-shadow:inset 0 0 0 1px #c076bb;"><svg style="left:0;top:0" width="15" height="15"><polyline points="1,5.5 3.75,9.5 6.5,5.5 9.25,9.5 12,5.5" fill="none" stroke="rgba(0,0,0,.32)" stroke-width="1"/></svg><b style="left:0;width:15px;text-align:center;color:#e8964a;letter-spacing:-0.469px;">9</b></div>
<div class="z" style="left:168px;top:503px;width:3px;background:#995d94;"></div>
<div class="z" style="left:182px;top:503px;width:28px;background:#995d94;box-shadow:inset 0 0 0 1px #b770b2;"><b style="left:0px;color:#fff;letter-spacing:-0.085px;">Draw</b><i style="left:3px;width:24px;background:rgba(0,0,0,.3)"></i></div>
<div class="z" style="left:209px;top:519px;width:3px;background:#91588d;"></div>
<div class="z" style="left:1534px;top:455px;width:50px;background:#b26cad;box-shadow:inset 0 0 0 1px #d482ce;"><b style="left:0px;color:#fff;letter-spacing:-0.252px;">RenderJ</b><i style="left:0px;width:6px;background:rgba(0,0,0,.3)"></i></div>
<div class="z" style="left:1585px;top:455px;width:28px;background:#b26cad;box-shadow:inset 0 0 0 1px #d482ce;"><b style="left:0px;color:#fff;letter-spacing:-0.277px;">Rend</b></div>
<div class="z" style="left:1535px;top:471px;width:49px;background:#9a9a20;box-shadow:inset 0 0 0 2px #adb034;"><b style="left:0;width:49px;text-align:center;color:#fff;letter-spacing:-0.341px;">Render</b><i style="left:0px;width:5px;background:rgba(0,0,0,.3)"></i></div>
<div class="z" style="left:1586px;top:471px;width:27px;background:#9a9a20;box-shadow:inset 0 0 0 2px #adb034;"><b style="left:0px;color:#fff;letter-spacing:-0.212px;">Ren</b></div>
<div class="z" style="left:1535px;top:487px;width:15px;background:#a1619c;box-shadow:inset 0 0 0 1px #c076bb;"><svg style="left:0;top:0" width="15" height="15"><polyline points="1,5.5 3.75,9.5 6.5,5.5 9.25,9.5 12,5.5" fill="none" stroke="rgba(0,0,0,.32)" stroke-width="1"/></svg><i style="left:0px;width:5px;background:rgba(0,0,0,.3)"></i></div>
<div class="z" style="left:1551px;top:487px;width:21px;background:#a1619c;box-shadow:inset 0 0 0 1px #c076bb;"><b style="left:0px;color:#fff;letter-spacing:-0.213px;">Rer</b></div>
<div class="z" style="left:1572px;top:487px;width:13px;background:#a1619c;box-shadow:inset 0 0 0 1px #c076bb;"><b style="left:0px;color:#fff;letter-spacing:-0.204px;">FF</b></div>
<div class="z" style="left:1587px;top:487px;width:25px;background:#a1619c;box-shadow:inset 0 0 0 1px #c076bb;"><svg style="left:0;top:0" width="25" height="15"><polyline points="1,5.5 3.75,9.5 6.5,5.5 9.25,9.5 12,5.5 14.75,9.5 17.5,5.5 20.25,9.5 23,5.5" fill="none" stroke="rgba(0,0,0,.32)" stroke-width="1"/></svg><b style="left:0;width:25px;text-align:center;color:#e8964a;letter-spacing:-0.469px;">19</b></div>
<div class="z" style="left:1551px;top:503px;width:19px;background:#995d94;box-shadow:inset 0 0 0 1px #b770b2;"><svg style="left:0;top:0" width="19" height="15"><polyline points="1,5.5 3.75,9.5 6.5,5.5 9.25,9.5 12,5.5 14.75,9.5 17.5,5.5" fill="none" stroke="rgba(0,0,0,.32)" stroke-width="1"/></svg></div>
<div class="z" style="left:1573px;top:503px;width:3px;background:#995d94;"></div>
<div class="z" style="left:1578px;top:503px;width:3px;background:#995d94;"></div>
<svg style="left:8.200px;top:542.5px" width="6.400" height="5.600" viewBox="0 0 8 7" preserveAspectRatio="none"><path d="M0 0h8L4 7z" fill="#fff"/></svg>
<span style="left:19px;top:539px;color:#fff;letter-spacing:-0.101px;">GUIF worker 0</span>
<div style="left:4px;top:553px;width:1898px;height:1px;background:#4a4a46;"></div>
<div style="left:4px;top:559px;width:156px;height:2px;background:#1f78e8;"></div>
<div style="left:160px;top:559px;width:6px;height:2px;background:#22d826;"></div>
<div style="left:166px;top:559px;width:60px;height:2px;background:#b8242a;"></div>
<div style="left:226px;top:559px;width:38px;height:2px;background:#22d826;"></div>
<div style="left:264px;top:559px;width:1276px;height:2px;background:#b8242a;"></div>
<div style="left:1540px;top:559px;width:77px;height:2px;background:#b8242a;"></div>
<div style="left:1617px;top:559px;width:31px;height:2px;background:#22d826;"></div>
<div style="left:1648px;top:559px;width:16px;height:2px;background:#1f78e8;"></div>
<div style="left:1664px;top:559px;width:65px;height:2px;background:#22d826;"></div>
<div style="left:1729px;top:559px;width:1px;height:2px;background:#b8242a;"></div>
<div style="left:1730px;top:559px;width:42px;height:2px;background:#22d826;"></div>
<div style="left:1772px;top:559px;width:3px;height:2px;background:#b8242a;"></div>
<div style="left:1775px;top:559px;width:30px;height:2px;background:#22d826;"></div>
<div style="left:1805px;top:559px;width:2px;height:2px;background:#b8242a;"></div>
<div style="left:1807px;top:559px;width:95px;height:2px;background:#22d826;"></div>
<div class="z" style="left:162px;top:566px;width:101px;background:#a17165;box-shadow:inset 0 0 0 1px #c0887a;"><b style="left:18px;color:#fff;letter-spacing:-0.300px;">RenderJob</b><i style="left:4px;width:60px;background:rgba(0,0,0,.3)"></i></div>
<div class="z" style="left:163px;top:582px;width:100px;background:#9a9a20;box-shadow:inset 0 0 0 2px #adb034;"><b style="left:29px;color:#fff;letter-spacing:-0.341px;">Render</b><i style="left:3px;width:60px;background:rgba(0,0,0,.3)"></i></div>
<div class="z" style="left:164px;top:598px;width:62px;background:#91665b;box-shadow:inset 0 0 0 1px #ae7b6f;"><b style="left:10px;color:#fff;letter-spacing:-0.341px;">Render</b><i style="left:2px;width:60px;background:rgba(0,0,0,.3)"></i></div>
<div class="z" style="left:226px;top:598px;width:10px;background:#91665b;box-shadow:inset 0 0 0 1px #ae7b6f;"><svg style="left:0;top:0" width="10" height="15"><polyline points="1,5.5 3.75,9.5 6.5,5.5" fill="none" stroke="rgba(0,0,0,.32)" stroke-width="1"/></svg></div>
<div class="z" style="left:236px;top:598px;width:16px;background:#91665b;box-shadow:inset 0 0 0 1px #ae7b6f;"><b style="left:0px;color:#fff;letter-spacing:-0.084px;">Re</b></div>
<div class="z" style="left:252px;top:598px;width:10px;background:#91665b;box-shadow:inset 0 0 0 1px #ae7b6f;"><svg style="left:0;top:0" width="10" height="15"><polyline points="1,5.5 3.75,9.5 6.5,5.5" fill="none" stroke="rgba(0,0,0,.32)" stroke-width="1"/></svg><b style="left:0;width:10px;text-align:center;color:#e8964a;letter-spacing:-0.469px;">5</b></div>
<div class="z" style="left:226px;top:614px;width:3px;background:#8a6157;"></div>
<div class="z" style="left:237px;top:614px;width:14px;background:#8a6157;box-shadow:inset 0 0 0 1px #a67569;"><svg style="left:0;top:0" width="14" height="15"><polyline points="1,5.5 3.75,9.5 6.5,5.5 9.25,9.5 12,5.5" fill="none" stroke="rgba(0,0,0,.32)" stroke-width="1"/></svg></div>
<div class="z" style="left:1617px;top:566px;width:59px;background:#a17165;box-shadow:inset 0 0 0 1px #c0887a;"><b style="left:0px;color:#fff;letter-spacing:-0.246px;">RenderJol</b><i style="left:31px;width:16px;background:rgba(0,0,0,.3)"></i></div>
<div class="z" style="left:1677px;top:566px;width:225px;background:#a17165;box-shadow:inset 0 0 0 1px #c0887a;"><b style="left:144px;color:#fff;letter-spacing:-0.300px;">RenderJob</b><i style="left:52px;width:1px;background:rgba(0,0,0,.3)"></i><i style="left:95px;width:3px;background:rgba(0,0,0,.3)"></i><i style="left:128px;width:2px;background:rgba(0,0,0,.3)"></i></div>
<div class="z" style="left:1619px;top:582px;width:57px;background:#9a9a20;box-shadow:inset 0 0 0 2px #adb034;"><b style="left:7px;color:#fff;letter-spacing:-0.341px;">Render</b><i style="left:29px;width:16px;background:rgba(0,0,0,.3)"></i></div>
<div class="z" style="left:1680px;top:582px;width:222px;background:#9a9a20;box-shadow:inset 0 0 0 2px #adb034;"><b style="left:153px;color:#fff;letter-spacing:-0.341px;">Render</b><i style="left:49px;width:1px;background:rgba(0,0,0,.3)"></i><i style="left:92px;width:3px;background:rgba(0,0,0,.3)"></i><i style="left:125px;width:2px;background:rgba(0,0,0,.3)"></i></div>
<div class="z" style="left:1620px;top:598px;width:24px;background:#91665b;box-shadow:inset 0 0 0 1px #ae7b6f;"><svg style="left:0;top:0" width="24" height="15"><polyline points="1,5.5 3.75,9.5 6.5,5.5 9.25,9.5 12,5.5 14.75,9.5 17.5,5.5 20.25,9.5" fill="none" stroke="rgba(0,0,0,.32)" stroke-width="1"/></svg><b style="left:0;width:24px;text-align:center;color:#e8964a;letter-spacing:-0.469px;">17</b></div>
<div class="z" style="left:1645px;top:598px;width:22px;background:#91665b;box-shadow:inset 0 0 0 1px #ae7b6f;"><b style="left:0px;color:#fff;letter-spacing:-0.213px;">Rer</b><i style="left:3px;width:16px;background:rgba(0,0,0,.3)"></i></div>
<div class="z" style="left:1668px;top:598px;width:7px;background:#91665b;box-shadow:inset 0 0 0 1px #ae7b6f;"><b style="left:0px;color:#fff;letter-spacing:0.042px;">S</b></div>
<div class="z" style="left:1681px;top:598px;width:79px;background:#91665b;box-shadow:inset 0 0 0 1px #ae7b6f;"><b style="left:0;width:79px;text-align:center;color:#fff;letter-spacing:-0.341px;">Render</b><i style="left:48px;width:1px;background:rgba(0,0,0,.3)"></i></div>
<div class="z" style="left:1761px;top:598px;width:76px;background:#91665b;box-shadow:inset 0 0 0 1px #ae7b6f;"><b style="left:0;width:76px;text-align:center;color:#fff;letter-spacing:-0.341px;">Render</b><i style="left:11px;width:3px;background:rgba(0,0,0,.3)"></i><i style="left:44px;width:2px;background:rgba(0,0,0,.3)"></i></div>
<div class="z" style="left:1838px;top:598px;width:53px;background:#91665b;box-shadow:inset 0 0 0 1px #ae7b6f;"><b style="left:0;width:53px;text-align:center;color:#fff;letter-spacing:-0.341px;">Render</b></div>
<div class="z" style="left:1892px;top:598px;width:10px;background:#91665b;box-shadow:inset 0 0 0 1px #ae7b6f;"><b style="left:0px;color:#fff;letter-spacing:0.301px;">R</b></div>
<div class="z" style="left:1645px;top:614px;width:21px;background:#8a6157;box-shadow:inset 0 0 0 1px #a67569;"><b style="left:0px;color:#fff;letter-spacing:-0.213px;">Dra</b><i style="left:3px;width:16px;background:rgba(0,0,0,.3)"></i></div>
<div class="z" style="left:1672px;top:614px;width:3px;background:#8a6157;"></div>
<div class="z" style="left:1683px;top:614px;width:72px;background:#8a6157;box-shadow:inset 0 0 0 1px #a67569;"><b style="left:0px;color:#fff;letter-spacing:-0.212px;">CalcGeome</b><i style="left:46px;width:1px;background:rgba(0,0,0,.3)"></i></div>
<div class="z" style="left:1760px;top:614px;width:74px;background:#8a6157;box-shadow:inset 0 0 0 1px #a67569;"><b style="left:0px;color:#fff;letter-spacing:-0.164px;">CalcGeomet</b><i style="left:12px;width:3px;background:rgba(0,0,0,.3)"></i><i style="left:45px;width:2px;background:rgba(0,0,0,.3)"></i></div>
<div class="z" style="left:1838px;top:614px;width:52px;background:#8a6157;box-shadow:inset 0 0 0 1px #a67569;"><b style="left:0px;color:#fff;letter-spacing:-0.179px;">CalcGeo</b></div>
<div class="z" style="left:1893px;top:614px;width:9px;background:#8a6157;box-shadow:inset 0 0 0 1px #a67569;"><b style="left:0px;color:#fff;letter-spacing:0.301px;">C</b></div>
<div class="z" style="left:1645px;top:630px;width:21px;background:#835c52;box-shadow:inset 0 0 0 1px #9d7064;"><b style="left:0px;color:#fff;letter-spacing:-0.053px;">Set</b><i style="left:3px;width:16px;background:rgba(0,0,0,.3)"></i></div>
<div class="z" style="left:1684px;top:630px;width:26px;background:#835c52;box-shadow:inset 0 0 0 1px #9d7064;"><svg style="left:0;top:0" width="26" height="15"><polyline points="1,5.5 3.75,9.5 6.5,5.5 9.25,9.5 12,5.5 14.75,9.5 17.5,5.5 20.25,9.5 23,5.5" fill="none" stroke="rgba(0,0,0,.32)" stroke-width="1"/></svg><b style="left:0;width:26px;text-align:center;color:#e8964a;letter-spacing:-0.469px;">9</b></div>
<div class="z" style="left:1710px;top:630px;width:10px;background:#835c52;box-shadow:inset 0 0 0 1px #9d7064;"><b style="left:0px;color:#fff;letter-spacing:0.301px;">C</b></div>
<div class="z" style="left:1722px;top:630px;width:8px;background:#835c52;box-shadow:inset 0 0 0 1px #9d7064;"><b style="left:0px;color:#fff;letter-spacing:0.301px;">C</b><i style="left:7px;width:1px;background:rgba(0,0,0,.3)"></i></div>
<div class="z" style="left:1730px;top:630px;width:21px;background:#835c52;box-shadow:inset 0 0 0 1px #9d7064;"><svg style="left:0;top:0" width="21" height="15"><polyline points="1,5.5 3.75,9.5 6.5,5.5 9.25,9.5 12,5.5 14.75,9.5 17.5,5.5" fill="none" stroke="rgba(0,0,0,.32)" stroke-width="1"/></svg><b style="left:0;width:21px;text-align:center;color:#e8964a;letter-spacing:-0.469px;">11</b></div>
<div class="z" style="left:1761px;top:630px;width:8px;background:#835c52;box-shadow:inset 0 0 0 1px #9d7064;"><svg style="left:0;top:0" width="8" height="15"><polyline points="1,5.5 3.75,9.5 6.5,5.5" fill="none" stroke="rgba(0,0,0,.32)" stroke-width="1"/></svg><b style="left:0px;color:#e8964a;letter-spacing:-0.469px;">4</b></div>
<div class="z" style="left:1769px;top:630px;width:9px;background:#835c52;box-shadow:inset 0 0 0 1px #9d7064;"><b style="left:0px;color:#fff;letter-spacing:0.301px;">C</b><i style="left:3px;width:3px;background:rgba(0,0,0,.3)"></i></div>
<div class="z" style="left:1778px;top:630px;width:20px;background:#835c52;box-shadow:inset 0 0 0 1px #9d7064;"><svg style="left:0;top:0" width="20" height="15"><polyline points="1,5.5 3.75,9.5 6.5,5.5 9.25,9.5 12,5.5 14.75,9.5 17.5,5.5" fill="none" stroke="rgba(0,0,0,.32)" stroke-width="1"/></svg><b style="left:0;width:20px;text-align:center;color:#e8964a;letter-spacing:-0.469px;">9</b></div>
<div class="z" style="left:1798px;top:630px;width:8px;background:#835c52;box-shadow:inset 0 0 0 1px #9d7064;"><b style="left:0px;color:#fff;letter-spacing:0.301px;">C</b><i style="left:7px;width:1px;background:rgba(0,0,0,.3)"></i></div>
<div class="z" style="left:1806px;top:630px;width:5px;background:#835c52;box-shadow:inset 0 0 0 1px #9d7064;"><b style="left:0px;color:#fff;letter-spacing:0.301px;">C</b><i style="left:0px;width:1px;background:rgba(0,0,0,.3)"></i></div>
<div class="z" style="left:1811px;top:630px;width:21px;background:#835c52;box-shadow:inset 0 0 0 1px #9d7064;"><svg style="left:0;top:0" width="21" height="15"><polyline points="1,5.5 3.75,9.5 6.5,5.5 9.25,9.5 12,5.5 14.75,9.5 17.5,5.5" fill="none" stroke="rgba(0,0,0,.32)" stroke-width="1"/></svg><b style="left:0;width:21px;text-align:center;color:#e8964a;letter-spacing:-0.469px;">10</b></div>
<div class="z" style="left:1838px;top:630px;width:50px;background:#835c52;box-shadow:inset 0 0 0 1px #9d7064;"><svg style="left:0;top:0" width="50" height="15"><polyline points="1,5.5 3.75,9.5 6.5,5.5 9.25,9.5 12,5.5 14.75,9.5 17.5,5.5 20.25,9.5 23,5.5 25.75,9.5 28.5,5.5 31.25,9.5 34,5.5 36.75,9.5 39.5,5.5 42.25,9.5 45,5.5 47.75,9.5" fill="none" stroke="rgba(0,0,0,.32)" stroke-width="1"/></svg><b style="left:0;width:50px;text-align:center;color:#e8964a;letter-spacing:-0.469px;">24</b></div>
<div class="z" style="left:1893px;top:630px;width:9px;background:#835c52;box-shadow:inset 0 0 0 1px #9d7064;"><svg style="left:0;top:0" width="9" height="15"><polyline points="1,5.5 3.75,9.5 6.5,5.5" fill="none" stroke="rgba(0,0,0,.32)" stroke-width="1"/></svg><b style="left:0px;color:#e8964a;letter-spacing:-0.469px;">4</b></div>
<div class="z" style="left:1645px;top:646px;width:3px;background:#7d574e;"></div>
<svg style="left:8.200px;top:669.5px" width="6.400" height="5.600" viewBox="0 0 8 7" preserveAspectRatio="none"><path d="M0 0h8L4 7z" fill="#dcd72f"/></svg>
<svg style="left:18.3px;top:667.2px" width="18" height="10.5" viewBox="0.5 3 15 10.5" preserveAspectRatio="none" fill="#dcd72f" stroke="none"><path d="M0.5 3h15v2.2a1.2 1.2 0 0 0 0 2.4V10.5h-15V7.6a1.2 1.2 0 0 0 0-2.4z M3.2 4.8v4h1.6v-4z M7.2 4.8v4h1.6v-4z M11.2 4.8v4h1.6v-4z" fill-rule="evenodd"/><path d="M0.5 11.6h15v1.9h-1.6v-.9h-2.4v.9h-1.6v-.9h-3.8v.9h-1.6v-.9h-2.4v.9h-1.6z"/></svg>
<span style="left:41px;top:666px;color:#dcd72f;letter-spacing:-0.235px;">Memory usage</span>
<span style="left:135px;top:666px;color:#8a8626;letter-spacing:-0.147px;">(y-range: 178.27 KB, visible data points: 341)</span>
<div style="left:4px;top:679px;width:1898px;height:1px;background:#8a8626;"></div>
<div style="left:4px;top:779px;width:1898px;height:1px;background:#8a8626;"></div>
<span style="left:4px;top:681px;color:#8a8626;letter-spacing:-0.219px;">9206.83 KB</span>
<span style="left:4px;top:766px;color:#8a8626;letter-spacing:-0.219px;">9028.57 KB</span>
<svg style="left:0;top:660px" width="1920" height="400" viewBox="0 660 1920 400"><path d="M4 779L264 779L266 763L338 744L397 726L453 706L503 688L521 686L1128 686M1540 779L1677 779L1753 764L1833 743L1889 725L1902 721" fill="none" stroke="#dcd72f" stroke-width="1.100"/><path d="M1128 680H1142V704M1142 699H1160V725M1160 719H1178V750M1178 745H1190V780" fill="none" stroke="#dcd72f" stroke-width="2.500"/><path d="M4 780H264" fill="none" stroke="#dcd72f" stroke-width="2"/><path d="M155 778h4v4h-4zM160 778h10v4h-10zM210 778h4v4h-4zM224 778h4v4h-4zM263 778h4v4h-4z" fill="#dcd72f"/><path d="M264.5 766.5h3v3h-3zM264.5 761.5h3v3h-3zM335.5 743.5h3v3h-3zM337.5 741.5h3v3h-3zM395.5 725.5h3v3h-3zM395.5 722.5h3v3h-3zM451.5 705.5h3v3h-3zM451.5 702.5h3v3h-3zM501.5 688.5h3v3h-3zM501.5 685.5h3v3h-3zM519.5 684.5h3v3h-3zM523.5 684.5h3v3h-3zM1583.5 777.5h3v3h-3zM1614.5 777.5h3v3h-3zM1617.5 777.5h3v3h-3zM1675.5 777.5h3v3h-3zM1751.5 762.5h3v3h-3zM1751.5 760.5h3v3h-3zM1831.5 742.5h3v3h-3zM1831.5 739.5h3v3h-3zM1887.5 724.5h3v3h-3zM1887.5 721.5h3v3h-3zM1129.5 678.5h3v3h-3zM1137.5 678.5h3v3h-3zM1140.5 686.5h3v3h-3zM1140.5 702.5h3v3h-3zM1145.5 697.5h3v3h-3zM1150.5 697.5h3v3h-3zM1156.5 697.5h3v3h-3zM1158.5 708.5h3v3h-3zM1158.5 723.5h3v3h-3zM1163.5 717.5h3v3h-3zM1170.5 717.5h3v3h-3zM1176.5 728.5h3v3h-3zM1176.5 743.5h3v3h-3z" fill="none" stroke="#dcd72f" stroke-width="1"/><path d="M4 797.500H1902M4 897.500H1902M4 915.500H1902M4 1015.500H1902" stroke="#8a8626" fill="none"/><path d="M4 855L1902 878M4 1053L1902 924" stroke="#dcd72f" fill="none" stroke-width="1.100"/></svg>
<div class="win" style="left:5px;top:785px;width:655px;height:285px;background:#1d1c15;"><div style="left:0;top:0;width:655px;height:21px;background:#0a0a0a;border-bottom:1px solid #46464b"></div><div style="left:0;top:0;width:655px;height:285px;border:1px solid #46464b;border-radius:7px;"></div></div>
<svg style="left:11.2px;top:791.2px" width="10.500" height="9.300" viewBox="0 0 11 10" preserveAspectRatio="none"><path d="M0 0.300h11L5.500 9.900z" fill="#fff"/></svg>
<span style="left:28px;top:789px;color:#fff;letter-spacing:0.127px;">Statistics</span>
<svg style="left:644.8px;top:791.3px" width="9.6" height="9.6" viewBox="2 2 12 12" preserveAspectRatio="none" fill="#fff" stroke="none"><path d="M2.500 2.500l11 11M13.500 2.500l-11 11" stroke="#fff" stroke-width="1.500" fill="none"/></svg>
<div style="left:13px;top:814px;width:199px;height:21px;background:#233650;border-radius:5px;box-shadow:inset 0 0 0 1px rgba(110,110,128,.5);"></div>
<span style="left:217px;top:818px;color:#fff;letter-spacing:-0.118px;">Filter zones</span>
<div style="left:293px;top:814px;width:57px;height:21px;background:#2b4d73;border-radius:5px;box-shadow:inset 0 0 0 1px rgba(110,110,128,.5);"></div>
<svg style="left:297.2px;top:818px" width="13.3" height="13.5" viewBox="1.1 1.1 13.8 13.8" preserveAspectRatio="none" fill="#fff" stroke="none"><circle cx="8" cy="8" r="6" fill="none" stroke="#fff" stroke-width="1.800"/><path d="M3.800 3.800l8.400 8.400" stroke="#fff" stroke-width="1.800"/></svg>
<span style="left:314.5px;top:818px;color:#fff;letter-spacing:-0.219px;">Clear</span>
<span style="left:366px;top:818px;color:#828282;letter-spacing:-0.119px;">Total zone count:</span>
<span style="left:475px;top:818px;color:#fff;letter-spacing:-0.469px;">134</span>
<span style="left:512px;top:818px;color:#828282;letter-spacing:-0.062px;">Visible zones:</span>
<span style="left:602px;top:818px;color:#fff;letter-spacing:-0.469px;">134</span>
<div style="left:639px;top:814px;width:18px;height:21px;background:#233650;border-radius:5px 0 0 5px;box-shadow:inset 1px 0 0 0 rgba(110,110,128,.5),inset 0 1px 0 0 rgba(110,110,128,.5),inset 0 -1px 0 0 rgba(110,110,128,.5);"></div>
<div style="left:9px;top:839px;width:648px;height:1px;background:#46464b;"></div>
<span style="left:21px;top:844px;color:#fff;letter-spacing:-0.206px;">Name</span>
<span style="left:208px;top:844px;color:#fff;letter-spacing:-0.222px;">Location</span>
<div style="left:200px;top:842px;width:1px;height:215px;background:#4a4a50;"></div>
<div style="left:451px;top:842px;width:1px;height:215px;background:#4a4a50;"></div>
<div style="left:513px;top:842px;width:1px;height:215px;background:#4a4a50;"></div>
<div style="left:576px;top:842px;width:1px;height:215px;background:#4a4a50;"></div>
<div class="clip" style="left:459px;top:843px;width:54px;height:17px"><div style="left:0;top:0;width:70px;height:17px;background:#2b4d73;border-radius:5px;box-shadow:inset 0 0 0 1px rgba(110,110,128,.5)"></div><span style="left:4px;top:1px">Total time</span></div>
<div style="left:521px;top:843px;width:50px;height:17px;background:#2b4d73;border-radius:5px;box-shadow:inset 0 0 0 1px rgba(110,110,128,.5);"></div>
<span style="left:525px;top:844px;color:#fff;letter-spacing:-0.092px;">Counts</span>
<div style="left:584px;top:843px;width:46px;height:17px;background:#2b4d73;border-radius:5px;box-shadow:inset 0 0 0 1px rgba(110,110,128,.5);"></div>
<span style="left:588px;top:844px;color:#fff;letter-spacing:-0.012px;">MTPC</span>
<div style="left:13px;top:862px;width:626px;height:1px;background:#4f4f58;"></div>
<div style="left:639px;top:842px;width:14px;height:215px;background:rgba(255,255,255,.03);"></div>
<div style="left:641px;top:846px;width:10px;height:32px;background:#4f4f4f;border-radius:5px;"></div>
<div style="left:21.2px;top:866.2px;width:14.4px;height:14.4px;background:#6c6cac;border-radius:3.500px;box-shadow:inset 0 0 0 1px rgba(30,30,38,.45);"></div>
<span style="left:44px;top:867px;color:#fff;letter-spacing:-0.038px;">PrivateTick</span>
<span style="left:208px;top:867px;color:#828282;letter-spacing:-0.066px;width:242px;overflow:hidden;">jni/../jni/src/claw/application/AbstractApp.cpp:120</span>
<span style="left:459px;top:867px;color:#fff;letter-spacing:-0.151px;">57.37 s</span>
<span style="left:521px;top:867px;color:#fff;letter-spacing:-0.322px;">3,457</span>
<span style="left:584px;top:867px;color:#fff;letter-spacing:-0.110px;width:55px;overflow:hidden;">16.6 ms</span>
<div style="left:21.2px;top:885.2px;width:14.4px;height:14.4px;background:#68aa78;border-radius:3.500px;box-shadow:inset 0 0 0 1px rgba(30,30,38,.45);"></div>
<span style="left:44px;top:886px;color:#fff;letter-spacing:-0.274px;">OnRedraw</span>
<span style="left:208px;top:886px;color:#828282;letter-spacing:-0.066px;width:242px;overflow:hidden;">jni/../jni/src/claw/application/AbstractApp.cpp:200</span>
<span style="left:459px;top:886px;color:#fff;letter-spacing:-0.151px;">53.77 s</span>
<span style="left:521px;top:886px;color:#fff;letter-spacing:-0.322px;">3,457</span>
<span style="left:584px;top:886px;color:#fff;letter-spacing:-0.155px;width:55px;overflow:hidden;">15.56 ms</span>
<div style="left:21.2px;top:904.2px;width:14.4px;height:14.4px;background:#8e68aa;border-radius:3.500px;box-shadow:inset 0 0 0 1px rgba(30,30,38,.45);"></div>
<span style="left:44px;top:905px;color:#fff;letter-spacing:-0.300px;">RenderJob</span>
<span style="left:208px;top:905px;color:#828282;letter-spacing:-0.077px;width:242px;overflow:hidden;">jni/../jni/src/guif/Screen.cpp:130</span>
<span style="left:459px;top:905px;color:#fff;letter-spacing:-0.151px;">20.87 s</span>
<span style="left:521px;top:905px;color:#fff;letter-spacing:-0.346px;">13,824</span>
<span style="left:584px;top:905px;color:#fff;letter-spacing:-0.110px;width:55px;overflow:hidden;">1.51 ms</span>
<div style="left:40px;top:921px;width:599px;height:19px;background:#29425e;"></div>
<div style="left:21.2px;top:923.2px;width:14.4px;height:14.4px;background:#7468ac;border-radius:3.500px;box-shadow:inset 0 0 0 1px rgba(30,30,38,.45);"></div>
<span style="left:44px;top:924px;color:#fff;letter-spacing:-0.341px;">Render</span>
<span style="left:208px;top:924px;color:#828282;letter-spacing:-0.077px;width:242px;overflow:hidden;">jni/../jni/src/guif/Screen.cpp:257</span>
<span style="left:459px;top:924px;color:#fff;letter-spacing:-0.151px;">19.94 s</span>
<span style="left:521px;top:924px;color:#fff;letter-spacing:-0.346px;">13,824</span>
<span style="left:584px;top:924px;color:#fff;letter-spacing:-0.110px;width:55px;overflow:hidden;">1.44 ms</span>
<div style="left:21.2px;top:942.2px;width:14.4px;height:14.4px;background:#76aa70;border-radius:3.500px;box-shadow:inset 0 0 0 1px rgba(30,30,38,.45);"></div>
<span style="left:44px;top:943px;color:#fff;letter-spacing:-0.337px;">EndFrame</span>
<span style="left:208px;top:943px;color:#828282;letter-spacing:0.001px;width:242px;overflow:hidden;">jni/../jni/src/claw/gfx/drv/vk/DriverVk.cpp:300</span>
<span style="left:459px;top:943px;color:#fff;letter-spacing:-0.151px;">18.23 s</span>
<span style="left:521px;top:943px;color:#fff;letter-spacing:-0.322px;">3,456</span>
<span style="left:584px;top:943px;color:#fff;letter-spacing:-0.110px;width:55px;overflow:hidden;">5.28 ms</span>
<div style="left:21.2px;top:961.2px;width:14.4px;height:14.4px;background:#7468ac;border-radius:3.500px;box-shadow:inset 0 0 0 1px rgba(30,30,38,.45);"></div>
<span style="left:44px;top:962px;color:#fff;letter-spacing:-0.341px;">Render</span>
<span style="left:208px;top:962px;color:#828282;letter-spacing:-0.068px;width:242px;overflow:hidden;">jni/../jni/src/guif/Control.cpp:346</span>
<span style="left:459px;top:962px;color:#fff;letter-spacing:-0.151px;">18.19 s</span>
<span style="left:521px;top:962px;color:#fff;letter-spacing:-0.364px;">262,656</span>
<span style="left:584px;top:962px;color:#fff;letter-spacing:-0.099px;width:55px;overflow:hidden;">69.24 µs</span>
<div style="left:21.2px;top:980.2px;width:14.4px;height:14.4px;background:#7468ac;border-radius:3.500px;box-shadow:inset 0 0 0 1px rgba(30,30,38,.45);"></div>
<span style="left:44px;top:981px;color:#fff;letter-spacing:-0.341px;">Render</span>
<span style="left:208px;top:981px;color:#828282;letter-spacing:-0.077px;width:242px;overflow:hidden;">jni/../jni/src/guif/Screen.cpp:150</span>
<span style="left:459px;top:981px;color:#fff;letter-spacing:-0.151px;">18.11 s</span>
<span style="left:521px;top:981px;color:#fff;letter-spacing:-0.322px;">3,456</span>
<span style="left:584px;top:981px;color:#fff;letter-spacing:-0.110px;width:55px;overflow:hidden;">5.24 ms</span>
<div style="left:21.2px;top:999.2px;width:14.4px;height:14.4px;background:#b0a064;border-radius:3.500px;box-shadow:inset 0 0 0 1px rgba(30,30,38,.45);"></div>
<span style="left:44px;top:1000px;color:#fff;letter-spacing:-0.315px;">BeginFrame</span>
<span style="left:208px;top:1000px;color:#828282;letter-spacing:0.001px;width:242px;overflow:hidden;">jni/../jni/src/claw/gfx/drv/vk/DriverVk.cpp:250</span>
<span style="left:459px;top:1000px;color:#fff;letter-spacing:-0.151px;">17.11 s</span>
<span style="left:521px;top:1000px;color:#fff;letter-spacing:-0.322px;">3,457</span>
<span style="left:584px;top:1000px;color:#fff;letter-spacing:-0.110px;width:55px;overflow:hidden;">4.95 ms</span>
<div style="left:21.2px;top:1018.2px;width:14.4px;height:14.4px;background:#b87868;border-radius:3.500px;box-shadow:inset 0 0 0 1px rgba(30,30,38,.45);"></div>
<span style="left:44px;top:1019px;color:#fff;letter-spacing:-0.221px;">Clipper</span>
<span style="left:208px;top:1019px;color:#828282;letter-spacing:-0.061px;width:242px;overflow:hidden;">jni/../jni/src/claw/gfx/geo/Clipper.cpp:175</span>
<span style="left:459px;top:1019px;color:#fff;letter-spacing:-0.151px;">11.98 s</span>
<span style="left:521px;top:1019px;color:#fff;letter-spacing:-0.364px;">676,838</span>
<span style="left:584px;top:1019px;color:#fff;letter-spacing:-0.099px;width:55px;overflow:hidden;">17.71 µs</span>
<div style="left:21.2px;top:1037.2px;width:14.4px;height:14.4px;background:#b8607c;border-radius:3.500px;box-shadow:inset 0 0 0 1px rgba(30,30,38,.45);"></div>
<span style="left:44px;top:1038px;color:#fff;letter-spacing:-0.152px;">CalcGeometry</span>
<span style="left:208px;top:1038px;color:#828282;letter-spacing:-0.073px;width:242px;overflow:hidden;">jni/../jni/src/claw/graphics/ScreenText.cpp:300</span>
<span style="left:459px;top:1038px;color:#fff;letter-spacing:-0.151px;">11.61 s</span>
<span style="left:521px;top:1038px;color:#fff;letter-spacing:-0.346px;">17,286</span>
<span style="left:584px;top:1038px;color:#fff;letter-spacing:-0.099px;width:55px;overflow:hidden;">671.4 µs</span>
<div style="left:21.2px;top:1056.2px;width:14.4px;height:14.4px;background:#6e8a9a;border-radius:3.500px;box-shadow:inset 0 0 0 1px rgba(30,30,38,.45);"></div>
<span style="left:44px;top:1057px;color:#fff;letter-spacing:0.000px;"></span>
<span style="left:208px;top:1057px;color:#828282;letter-spacing:0.000px;width:242px;overflow:hidden;"></span>
<span style="left:459px;top:1057px;color:#fff;letter-spacing:0.000px;"></span>
<span style="left:521px;top:1057px;color:#fff;letter-spacing:0.000px;"></span>
<span style="left:584px;top:1057px;color:#fff;letter-spacing:0.000px;width:55px;overflow:hidden;"></span>
<div class="win" style="left:1182px;top:271px;width:357px;height:606px;background:#1d1c15;"><div style="left:0;top:0;width:357px;height:21px;background:#0a0a0a;border-bottom:1px solid #46464b"></div><div style="left:0;top:0;width:357px;height:606px;border:1px solid #46464b;border-radius:7px;"></div></div>
<svg style="left:1188.2px;top:277.2px" width="10.500" height="9.300" viewBox="0 0 11 10" preserveAspectRatio="none"><path d="M0 0.300h11L5.500 9.900z" fill="#fff"/></svg>
<span style="left:1205px;top:275px;color:#fff;letter-spacing:-0.222px;">Zone info</span>
<svg style="left:1523.8px;top:277.3px" width="9.6" height="9.6" viewBox="2 2 12 12" preserveAspectRatio="none" fill="#fff" stroke="none"><path d="M2.500 2.500l11 11M13.500 2.500l-11 11" stroke="#fff" stroke-width="1.500" fill="none"/></svg>
<div style="left:1190px;top:300px;width:106px;height:21px;background:#2b4d73;border-radius:5px;box-shadow:inset 0 0 0 1px rgba(110,110,128,.5);"></div>
<svg style="left:1194px;top:303.9px" width="14" height="14" viewBox="1.5 1 13 14" preserveAspectRatio="none" fill="#fff" stroke="none"><path d="M5.500 1h3v1h.8v6.500h-.8v.8h-3v-.8h-.8V2h.8z"/><path d="M9.500 4a5 5 0 0 1 3.500 8.500h-2.300a3.500 3.500 0 0 0-1.200-6z"/><path d="M1.500 13h13v2h-13z"/><path d="M3.500 10.500h6.500v1.500h-6.500z"/></svg>
<span style="left:1212px;top:304px;color:#fff;letter-spacing:-0.176px;">Zoom to zone</span>
<div style="left:1304px;top:300px;width:96px;height:21px;background:#2b4d73;border-radius:5px;box-shadow:inset 0 0 0 1px rgba(110,110,128,.5);"></div>
<svg style="left:1308px;top:304.4px" width="12.2" height="12.3" viewBox="1.5 1.3 13 13.7" preserveAspectRatio="none" fill="#fff" stroke="none"><path d="M8 15V3" stroke="#fff" stroke-width="2.800"/><path d="M2.500 8L8 2.500 13.500 8" fill="none" stroke="#fff" stroke-width="2.800"/></svg>
<span style="left:1324px;top:304px;color:#fff;letter-spacing:-0.222px;">Go to parent</span>
<div style="left:1408px;top:300px;width:81px;height:21px;background:#2b4d73;border-radius:5px;box-shadow:inset 0 0 0 1px rgba(110,110,128,.5);"></div>
<svg style="left:1411.8px;top:304.9px" width="14.2" height="11.2" viewBox="0.5 1.5 14.5 13" preserveAspectRatio="none" fill="#fff" stroke="none"><path d="M1.700 1.500v11.800h13.300" fill="none" stroke="#fff" stroke-width="2.600"/><path d="M5.300 8v3M8.300 3.500v7.500M11.300 6v5M14 3v8" stroke="#fff" stroke-width="2.100"/></svg>
<span style="left:1430px;top:304px;color:#fff;letter-spacing:0.127px;">Statistics</span>
<div style="left:1186px;top:325px;width:350px;height:1px;background:#46464b;"></div>
<span class="big" style="left:1190px;top:330px;color:#828282;letter-spacing:0.041px;">Function:</span>
<span class="big" style="left:1272px;top:330px;color:#fff;letter-spacing:0.049px;">Render</span>
<span style="left:1190px;top:354px;color:#828282;letter-spacing:-0.167px;">Location:</span>
<span style="left:1251px;top:354px;color:#fff;letter-spacing:-0.077px;">jni/../jni/src/guif/Screen.cpp:150</span>
<div style="left:1443.2px;top:353.2px;width:14.4px;height:14.4px;background:#62a068;border-radius:3.500px;box-shadow:inset 0 0 0 1px rgba(30,30,38,.45);"></div>
<span style="left:1190px;top:373px;color:#828282;letter-spacing:-0.326px;">Thread:</span>
<span style="left:1242px;top:373px;color:#fff;letter-spacing:-0.437px;">Thread-2</span>
<span style="left:1301px;top:373px;color:#828282;letter-spacing:-0.378px;">(24,519)</span>
<div style="left:1356.2px;top:372.2px;width:14.4px;height:14.4px;background:#62a068;border-radius:3.500px;box-shadow:inset 0 0 0 1px rgba(30,30,38,.45);"></div>
<div style="left:1186px;top:391px;width:350px;height:1px;background:#46464b;"></div>
<div style="left:1518px;top:396px;width:14px;height:473px;background:rgba(255,255,255,.03);"></div>
<div style="left:1521px;top:399px;width:8px;height:452px;background:#4f4f4f;border-radius:4px;"></div>
<span style="left:1190px;top:396px;color:#828282;letter-spacing:-0.137px;">Time from start of program:</span>
<span style="left:1357px;top:396px;color:#fff;letter-spacing:-0.151px;">55.83 s</span>
<span style="left:1190px;top:415px;color:#828282;letter-spacing:-0.054px;">Execution time:</span>
<span style="left:1289px;top:415px;color:#fff;letter-spacing:-0.110px;">4.49 ms</span>
<span style="left:1344px;top:415px;color:#828282;letter-spacing:-0.200px;">(85.72% of average time)</span>
<span style="left:1190px;top:434px;color:#828282;letter-spacing:0.002px;">Self time:</span>
<span style="left:1254px;top:434px;color:#fff;letter-spacing:-0.140px;">172.14 µs</span>
<span style="left:1320px;top:434px;color:#828282;letter-spacing:-0.289px;">(3.83%)</span>
<span style="left:1190px;top:453px;color:#828282;letter-spacing:-0.090px;">Running state time:</span>
<span style="left:1312px;top:453px;color:#fff;letter-spacing:-0.110px;">4.37 ms</span>
<span style="left:1367px;top:453px;color:#828282;letter-spacing:-0.312px;">(97.33%)</span>
<div style="left:1190px;top:471px;width:328px;height:1px;background:#46464b;"></div>
<span style="left:1190px;top:476px;color:#828282;letter-spacing:-0.154px;">Running state regions:</span>
<span style="left:1329px;top:476px;color:#fff;letter-spacing:-0.469px;">3</span>
<span style="left:1190px;top:495px;color:#828282;letter-spacing:0.228px;">CPU:</span>
<span style="left:1231px;top:495px;color:#fff;letter-spacing:-0.469px;">2</span>
<svg style="left:1198px;top:518px" width="7.7" height="7.7" viewBox="0 0 8 8"><path d="M0.300 0.500h7.400L4 7.700z" fill="#fff"/></svg>
<span style="left:1213px;top:514px;color:#fff;letter-spacing:-0.137px;">Wait regions</span>
<div style="left:1302px;top:514px;width:15px;height:15px;background:#233650;border-radius:5px;box-shadow:inset 0 0 0 1px rgba(110,110,128,.5);"></div>
<svg style="left:1302px;top:514px" width="15" height="15" viewBox="0 0 15 15"><path d="M3.200 7.800l2.900 3.100 5.600-6.800" fill="none" stroke="#4296fa" stroke-width="2.200"/></svg>
<span style="left:1321px;top:514px;color:#fff;letter-spacing:-0.093px;">Time relative to zone start</span>
<span style="left:1219px;top:533px;color:#fff;letter-spacing:-0.270px;">Begin</span>
<span style="left:1270px;top:533px;color:#fff;letter-spacing:-0.299px;">End</span>
<span style="left:1321px;top:533px;color:#fff;letter-spacing:-0.211px;">Time</span>
<span style="left:1372px;top:533px;color:#fff;letter-spacing:-0.211px;">Wakeup</span>
<span style="left:1432px;top:533px;color:#fff;letter-spacing:0.215px;">CPU</span>
<span style="left:1479px;top:533px;color:#fff;letter-spacing:-0.072px;">State</span>
<div style="left:1262px;top:533px;width:1px;height:60px;background:#4a4a50;"></div>
<div style="left:1313px;top:533px;width:1px;height:60px;background:#4a4a50;"></div>
<div style="left:1364px;top:533px;width:1px;height:60px;background:#4a4a50;"></div>
<div style="left:1424px;top:533px;width:1px;height:60px;background:#4a4a50;"></div>
<div style="left:1471px;top:533px;width:1px;height:60px;background:#4a4a50;"></div>
<div style="left:1190px;top:551px;width:328px;height:1px;background:#4f4f58;"></div>
<div style="left:1190px;top:593px;width:328px;height:1px;background:#4f4f58;"></div>
<span style="left:1219px;top:556px;color:#fff;letter-spacing:-0.110px;width:42px;overflow:hidden;">1.91 ms</span>
<span style="left:1270px;top:556px;color:#fff;letter-spacing:-0.110px;width:42px;overflow:hidden;">1.97 ms</span>
<span style="left:1321px;top:556px;color:#fff;letter-spacing:-0.025px;">61 µs</span>
<span style="left:1372px;top:556px;color:#fff;letter-spacing:-0.472px;">-</span>
<span style="left:1432px;top:556px;color:#fff;letter-spacing:-0.469px;">2</span>
<span style="left:1479px;top:556px;color:#fff;letter-spacing:0.301px;">R</span>
<span style="left:1219px;top:575px;color:#fff;letter-spacing:-0.110px;width:42px;overflow:hidden;">2.01 ms</span>
<span style="left:1270px;top:575px;color:#fff;letter-spacing:-0.110px;width:42px;overflow:hidden;">2.07 ms</span>
<span style="left:1321px;top:575px;color:#fff;letter-spacing:-0.025px;">59 µs</span>
<span style="left:1372px;top:575px;color:#fff;letter-spacing:-0.472px;">-</span>
<span style="left:1432px;top:575px;color:#fff;letter-spacing:-0.469px;">2</span>
<span style="left:1479px;top:575px;color:#fff;letter-spacing:0.301px;">R</span>
<span style="left:1190px;top:598px;color:#fff;letter-spacing:-0.469px;">22</span>
<span style="left:1212px;top:598px;color:#828282;letter-spacing:-0.109px;">memory events.</span>
<span style="left:1190px;top:617px;color:#fff;letter-spacing:-0.469px;">17</span>
<span style="left:1212px;top:617px;color:#828282;letter-spacing:-0.010px;">allocs,</span>
<span style="left:1258px;top:617px;color:#fff;letter-spacing:-0.469px;">5</span>
<span style="left:1273px;top:617px;color:#828282;letter-spacing:-0.098px;">frees.</span>
<span style="left:1190px;top:636px;color:#828282;letter-spacing:-0.160px;">Memory allocated:</span>
<span style="left:1305px;top:636px;color:#fff;letter-spacing:-0.192px;">167.89 KB</span>
<span style="left:1190px;top:655px;color:#828282;letter-spacing:-0.198px;">Memory freed:</span>
<span style="left:1282px;top:655px;color:#fff;letter-spacing:-0.138px;">224 bytes</span>
<span style="left:1190px;top:674px;color:#828282;letter-spacing:-0.204px;">Overall change:</span>
<span style="left:1289px;top:674px;color:#fff;letter-spacing:-0.192px;">167.67 KB</span>
<svg style="left:1198px;top:697px" width="7.7" height="7.7" viewBox="0 0 8 8"><path d="M0.500 0.300v7.400L7.700 4z" fill="#fff"/></svg>
<span style="left:1213px;top:693px;color:#fff;letter-spacing:-0.006px;">Allocations list</span>
<div style="left:1190px;top:711px;width:328px;height:1px;background:#46464b;"></div>
<span style="left:1190px;top:716px;color:#828282;letter-spacing:-0.101px;">No messages</span>
<div style="left:1190px;top:734px;width:328px;height:1px;background:#46464b;"></div>
<svg style="left:1198px;top:743px" width="7.7" height="7.7" viewBox="0 0 8 8"><path d="M0.500 0.300v7.400L7.700 4z" fill="#fff"/></svg>
<span style="left:1213px;top:739px;color:#fff;letter-spacing:-0.220px;">Zone trace</span>
<span style="left:1283px;top:739px;color:#828282;letter-spacing:-0.471px;">(2)</span>
<svg style="left:1198px;top:762px" width="7.7" height="7.7" viewBox="0 0 8 8"><path d="M0.300 0.500h7.400L4 7.700z" fill="#fff"/></svg>
<span style="left:1213px;top:758px;color:#fff;letter-spacing:-0.107px;">Child zones</span>
<span style="left:1290px;top:758px;color:#828282;letter-spacing:-0.471px;">(5)</span>
<div style="left:1313px;top:758px;width:15px;height:15px;background:#233650;border-radius:5px;box-shadow:inset 0 0 0 1px rgba(110,110,128,.5);"></div>
<svg style="left:1313px;top:758px" width="15" height="15" viewBox="0 0 15 15"><path d="M3.200 7.800l2.900 3.100 5.600-6.800" fill="none" stroke="#4296fa" stroke-width="2.200"/></svg>
<span style="left:1332px;top:758px;color:#fff;letter-spacing:-0.201px;">Group children locations</span>
<div style="left:1364px;top:777px;width:1px;height:93px;background:#4a4a50;"></div>
<span style="left:1219px;top:777px;color:#f0e838;letter-spacing:-0.027px;">Self time</span>
<div class="clip" style="left:1372px;top:776px;width:137px;height:15px;background:#233650;border-radius:7px;box-shadow:inset 0 0 0 1px rgba(110,110,128,.45)"><div style="left:0;top:0;height:15px;width:5.2471px;background:#e8b200;"></div><span style="left:13.2471px;top:2px;letter-spacing:-0.220px">172.14 us (3.83%)</span></div>
<div style="left:1219.2px;top:796.2px;width:14.4px;height:14.4px;background:#9666b0;border-radius:3.500px;box-shadow:inset 0 0 0 1px rgba(30,30,38,.45);"></div>
<svg style="left:1250px;top:800px" width="7.7" height="7.7" viewBox="0 0 8 8"><path d="M0.500 0.300v7.400L7.700 4z" fill="#fff"/></svg>
<span style="left:1265px;top:796px;color:#fff;letter-spacing:-0.300px;">RenderJob</span>
<span style="left:1337px;top:796px;color:#828282;letter-spacing:-0.314px;">(×2)</span>
<div class="clip" style="left:1372px;top:795px;width:137px;height:15px;background:#233650;border-radius:7px;box-shadow:inset 0 0 0 1px rgba(110,110,128,.45)"><div style="left:0;top:0;height:15px;width:126.862px;background:#e8b200;"></div><span style="left:30px;top:2px;letter-spacing:-0.187px">4.16 ms (92.60%)</span></div>
<div style="left:1219.2px;top:815.2px;width:14.4px;height:14.4px;background:#8468b0;border-radius:3.500px;box-shadow:inset 0 0 0 1px rgba(30,30,38,.45);"></div>
<span style="left:1242px;top:815px;color:#fff;letter-spacing:-0.149px;">RecalcTransform</span>
<div class="clip" style="left:1372px;top:814px;width:137px;height:15px;background:#233650;border-radius:7px;box-shadow:inset 0 0 0 1px rgba(110,110,128,.45)"><div style="left:0;top:0;height:15px;width:2.2194px;background:#e8b200;"></div><span style="left:10.2194px;top:2px;letter-spacing:-0.205px">72.92 us (1.62%)</span></div>
<div style="left:1219.2px;top:834.2px;width:14.4px;height:14.4px;background:#b07868;border-radius:3.500px;box-shadow:inset 0 0 0 1px rgba(30,30,38,.45);"></div>
<span style="left:1242px;top:834px;color:#fff;letter-spacing:-0.182px;">CalcRenderNodes</span>
<div class="clip" style="left:1372px;top:833px;width:137px;height:15px;background:#233650;border-radius:7px;box-shadow:inset 0 0 0 1px rgba(110,110,128,.45)"><div style="left:0;top:0;height:15px;width:1.5755px;background:#e8b200;"></div><span style="left:9.5755px;top:2px;letter-spacing:-0.205px">51.51 us (1.15%)</span></div>
<div style="left:1219.2px;top:853.2px;width:14.4px;height:14.4px;background:#b06896;border-radius:3.500px;box-shadow:inset 0 0 0 1px rgba(30,30,38,.45);"></div>
<span style="left:1242px;top:853px;color:#fff;letter-spacing:-0.133px;">Submit</span>
<div class="clip" style="left:1372px;top:852px;width:137px;height:15px;background:#233650;border-radius:7px;box-shadow:inset 0 0 0 1px rgba(110,110,128,.45)"><div style="left:0;top:0;height:15px;width:1.0823px;background:#e8b200;"></div><span style="left:9.0823px;top:2px;letter-spacing:-0.205px">35.63 us (0.79%)</span></div>
<svg style="left:1519px;top:857px" width="20" height="20"><path d="M19 2V13a6 6 0 0 1-6 6H2z" fill="rgba(66,150,250,.3)"/></svg>
<div class="win" style="left:1152px;top:888px;width:727px;height:182px;background:#1d1c15;"><div style="left:0;top:0;width:727px;height:21px;background:#0a0a0a;border-bottom:1px solid #46464b"></div><div style="left:0;top:0;width:727px;height:182px;border:1px solid #46464b;border-radius:7px;"></div></div>
<svg style="left:1158.2px;top:894.2px" width="10.500" height="9.300" viewBox="0 0 11 10" preserveAspectRatio="none"><path d="M0 0.300h11L5.500 9.900z" fill="#fff"/></svg>
<span style="left:1175px;top:892px;color:#fff;letter-spacing:-0.250px;">Memory</span>
<svg style="left:1863.8px;top:894.3px" width="9.6" height="9.6" viewBox="2 2 12 12" preserveAspectRatio="none" fill="#fff" stroke="none"><path d="M2.500 2.500l11 11M13.500 2.500l-11 11" stroke="#fff" stroke-width="1.500" fill="none"/></svg>
<div style="left:1160px;top:917px;width:21px;height:21px;background:#233650;border-radius:5px;box-shadow:inset 0 0 0 1px rgba(110,110,128,.5);"></div>
<svg style="left:1185px;top:920.6px" width="14" height="14.2" viewBox="0.8 1.5 14.2 13.4" preserveAspectRatio="none" fill="#fff" stroke="none"><path d="M3.300 4.500a6 6 0 1 1-1.100 5" fill="none" stroke="#fff" stroke-width="1.700"/><path d="M0.800 1.500v5h5z"/><path d="M8.300 4.800v3.700l2.500 1.800" fill="none" stroke="#fff" stroke-width="1.600"/></svg>
<span style="left:1203px;top:921px;color:#fff;letter-spacing:0.029px;">Restrict time</span>
<span style="left:1286px;top:921px;color:#828282;letter-spacing:-0.471px;">(?)</span>
<span style="left:1317px;top:921px;color:#828282;letter-spacing:-0.099px;">Total allocations:</span>
<span style="left:1424px;top:921px;color:#fff;letter-spacing:-0.364px;">556,731</span>
<span style="left:1510px;top:921px;color:#828282;letter-spacing:-0.026px;">Active allocations:</span>
<span style="left:1625px;top:921px;color:#fff;letter-spacing:-0.322px;">3,043</span>
<span style="left:1705px;top:921px;color:#828282;letter-spacing:-0.196px;">Memory usage:</span>
<span style="left:1803px;top:921px;color:#fff;letter-spacing:-0.219px;">9028.57 KB</span>
<div style="left:1157px;top:942px;width:716px;height:1px;background:#46464b;"></div>
<div style="left:1857px;top:946px;width:14px;height:111px;background:rgba(255,255,255,.03);"></div>
<div style="left:1860px;top:962px;width:8px;height:73px;background:#4f4f4f;border-radius:4px;"></div>
<svg style="left:1168px;top:951px" width="7.7" height="7.7" viewBox="0 0 8 8"><path d="M0.300 0.500h7.400L4 7.700z" fill="#fff"/></svg>
<svg style="left:1183px;top:949px" width="14.3" height="12.2" viewBox="0.6 1.5 14.8 13" preserveAspectRatio="none" fill="#fff" stroke="none"><path d="M8 14.500L1.800 8.200a3.900 3.900 0 0 1 5.500-5.500l.7.700.7-.7a3.900 3.900 0 0 1 5.500 5.500z M1 8h3.500l1.500-3 2.200 5 1.300-2.500h5.500v1.200h-4.800l-2 3.800-2.300-5.300-.7 1.400h-4.200z" fill-rule="evenodd"/></svg>
<span style="left:1201px;top:948px;color:#fff;letter-spacing:-0.042px;">Active allocations</span>
<span style="left:1312px;top:948px;color:#828282;letter-spacing:-0.365px;">(3,043)</span>
<span style="left:1368px;top:948px;color:#828282;letter-spacing:-0.196px;">Memory usage:</span>
<span style="left:1466px;top:948px;color:#fff;letter-spacing:-0.219px;">9028.57 KB</span>
<span style="left:1189px;top:967px;color:#fff;letter-spacing:-0.181px;">Address</span>
<span style="left:1290px;top:967px;color:#fff;letter-spacing:-0.031px;">Size</span>
<span style="left:1365px;top:967px;color:#fff;letter-spacing:-0.289px;">Appeared at</span>
<span style="left:1451px;top:967px;color:#fff;letter-spacing:-0.220px;">Duration</span>
<span style="left:1517px;top:967px;color:#fff;letter-spacing:-0.425px;">Thread</span>
<span style="left:1628px;top:967px;color:#fff;letter-spacing:-0.196px;">Zone alloc</span>
<span style="left:1701px;top:967px;color:#fff;letter-spacing:-0.276px;">Zone free</span>
<span style="left:1770px;top:967px;color:#fff;letter-spacing:0.079px;">Call stack</span>
<span style="left:1245px;top:967px;color:#828282;letter-spacing:-0.471px;">(?)</span>
<span style="left:1565px;top:967px;color:#828282;letter-spacing:-0.471px;">(?)</span>
<div style="left:1282px;top:967px;width:1px;height:90px;background:#4a4a50;"></div>
<div style="left:1357px;top:967px;width:1px;height:90px;background:#4a4a50;"></div>
<div style="left:1443px;top:967px;width:1px;height:90px;background:#4a4a50;"></div>
<div style="left:1509px;top:967px;width:1px;height:90px;background:#4a4a50;"></div>
<div style="left:1620px;top:967px;width:1px;height:90px;background:#4a4a50;"></div>
<div style="left:1693px;top:967px;width:1px;height:90px;background:#4a4a50;"></div>
<div style="left:1762px;top:967px;width:1px;height:90px;background:#4a4a50;"></div>
<div style="left:1181px;top:985px;width:662px;height:1px;background:#4f4f58;"></div>
<div style="left:1843px;top:966px;width:14px;height:91px;background:rgba(255,255,255,.03);"></div>
<div style="left:1846px;top:969px;width:8px;height:10px;background:#4f4f4f;border-radius:4px;"></div>
<span style="left:1189px;top:990px;color:#fff;letter-spacing:-0.345px;">0x7dfaa64e00</span>
<span style="left:1290px;top:990px;color:#fff;letter-spacing:-0.138px;">192 bytes</span>
<span style="left:1365px;top:990px;color:#fff;letter-spacing:-0.190px;">298.21 ms</span>
<span style="left:1451px;top:990px;color:#8ce66e;letter-spacing:-0.151px;">59.95 s</span>
<div style="left:1517.2px;top:990.2px;width:14.4px;height:14.4px;background:#62aa7c;border-radius:3.500px;box-shadow:inset 0 0 0 1px rgba(30,30,38,.45);"></div>
<span style="left:1540px;top:990px;color:#fff;letter-spacing:-0.266px;">Main thread</span>
<span style="left:1628px;top:990px;color:#fff;letter-spacing:-0.472px;">-</span>
<span style="left:1701px;top:990px;color:#8ce66e;letter-spacing:-0.014px;">active</span>
<span style="left:1770px;top:990px;color:#828282;letter-spacing:-0.012px;">[alloc]</span>
<span style="left:1821px;top:990px;color:#828282;letter-spacing:-0.101px;width:22px;overflow:hidden;">[free]</span>
<span style="left:1189px;top:1009px;color:#fff;letter-spacing:-0.406px;">0x7e049b3d00</span>
<span style="left:1290px;top:1009px;color:#fff;letter-spacing:-0.138px;">128 bytes</span>
<span style="left:1365px;top:1009px;color:#fff;letter-spacing:-0.190px;">298.27 ms</span>
<span style="left:1451px;top:1009px;color:#8ce66e;letter-spacing:-0.151px;">59.95 s</span>
<div style="left:1517.2px;top:1009.2px;width:14.4px;height:14.4px;background:#62aa7c;border-radius:3.500px;box-shadow:inset 0 0 0 1px rgba(30,30,38,.45);"></div>
<span style="left:1540px;top:1009px;color:#fff;letter-spacing:-0.266px;">Main thread</span>
<span style="left:1628px;top:1009px;color:#fff;letter-spacing:-0.472px;">-</span>
<span style="left:1701px;top:1009px;color:#8ce66e;letter-spacing:-0.014px;">active</span>
<span style="left:1770px;top:1009px;color:#828282;letter-spacing:-0.012px;">[alloc]</span>
<span style="left:1821px;top:1009px;color:#828282;letter-spacing:-0.101px;width:22px;overflow:hidden;">[free]</span>
<span style="left:1189px;top:1028px;color:#fff;letter-spacing:-0.282px;">0x7dfc42d640</span>
<span style="left:1290px;top:1028px;color:#fff;letter-spacing:-0.096px;">32 bytes</span>
<span style="left:1365px;top:1028px;color:#fff;letter-spacing:-0.155px;">298.3 ms</span>
<span style="left:1451px;top:1028px;color:#8ce66e;letter-spacing:-0.151px;">59.95 s</span>
<div style="left:1517.2px;top:1028.2px;width:14.4px;height:14.4px;background:#62aa7c;border-radius:3.500px;box-shadow:inset 0 0 0 1px rgba(30,30,38,.45);"></div>
<span style="left:1540px;top:1028px;color:#fff;letter-spacing:-0.266px;">Main thread</span>
<span style="left:1628px;top:1028px;color:#fff;letter-spacing:-0.472px;">-</span>
<span style="left:1701px;top:1028px;color:#8ce66e;letter-spacing:-0.014px;">active</span>
<span style="left:1770px;top:1028px;color:#828282;letter-spacing:-0.012px;">[alloc]</span>
<span style="left:1821px;top:1028px;color:#828282;letter-spacing:-0.101px;width:22px;overflow:hidden;">[free]</span>
<span style="left:1189px;top:1047px;color:#fff;letter-spacing:-0.282px;">0x7dfc53d898</span>
<span style="left:1290px;top:1047px;color:#fff;letter-spacing:-0.043px;">8 bytes</span>
<span style="left:1365px;top:1047px;color:#fff;letter-spacing:-0.190px;">298.34 ms</span>
<span style="left:1451px;top:1047px;color:#8ce66e;letter-spacing:-0.151px;">59.95 s</span>
<div style="left:1517.2px;top:1047.2px;width:14.4px;height:14.4px;background:#62aa7c;border-radius:3.500px;box-shadow:inset 0 0 0 1px rgba(30,30,38,.45);"></div>
<span style="left:1540px;top:1047px;color:#fff;letter-spacing:-0.266px;">Main thread</span>
<span style="left:1628px;top:1047px;color:#fff;letter-spacing:-0.472px;">-</span>
<span style="left:1701px;top:1047px;color:#8ce66e;letter-spacing:-0.014px;">active</span>
<span style="left:1770px;top:1047px;color:#828282;letter-spacing:-0.012px;">[alloc]</span>
<span style="left:1821px;top:1047px;color:#828282;letter-spacing:-0.101px;width:22px;overflow:hidden;">[free]</span>
<div class="win" style="left:665px;top:369px;width:464px;height:701px;background:#1d1c15;"><div style="left:0;top:0;width:464px;height:21px;background:#294a7a;border-bottom:1px solid #46464b"></div><div style="left:0;top:0;width:464px;height:701px;border:1px solid #46464b;border-radius:7px;"></div></div>
<svg style="left:671.2px;top:375.2px" width="10.500" height="9.300" viewBox="0 0 11 10" preserveAspectRatio="none"><path d="M0 0.300h11L5.500 9.900z" fill="#fff"/></svg>
<span style="left:688px;top:373px;color:#fff;letter-spacing:-0.220px;">Find zone</span>
<svg style="left:1113.8px;top:375.3px" width="9.6" height="9.6" viewBox="2 2 12 12" preserveAspectRatio="none" fill="#fff" stroke="none"><path d="M2.500 2.500l11 11M13.500 2.500l-11 11" stroke="#fff" stroke-width="1.500" fill="none"/></svg>
<div style="left:673px;top:398px;width:447px;height:21px;background:#233650;border-radius:5px;box-shadow:inset 0 0 0 1px rgba(110,110,128,.5);"></div>
<span style="left:677px;top:402px;color:#fff;letter-spacing:-0.341px;">Render</span>
<div style="left:673px;top:423px;width:51px;height:21px;background:#2b4d73;border-radius:5px;box-shadow:inset 0 0 0 1px rgba(110,110,128,.5);"></div>
<svg style="left:676.8px;top:427.5px" width="14.2" height="13.4" viewBox="0.75 0.75 15.2 15.2" preserveAspectRatio="none" fill="#fff" stroke="none"><circle cx="6.5" cy="6.5" r="4.6" fill="none" stroke="#fff" stroke-width="2.3"/><path d="M10 10l4.6 4.6" stroke="#fff" stroke-width="2.6" stroke-linecap="round"/></svg>
<span style="left:695px;top:427px;color:#fff;letter-spacing:-0.281px;">Find</span>
<div style="left:732px;top:423px;width:57px;height:21px;background:#2b4d73;border-radius:5px;box-shadow:inset 0 0 0 1px rgba(110,110,128,.5);"></div>
<svg style="left:736.2px;top:427px" width="13.3" height="13.5" viewBox="1.1 1.1 13.8 13.8" preserveAspectRatio="none" fill="#fff" stroke="none"><circle cx="8" cy="8" r="6" fill="none" stroke="#fff" stroke-width="1.800"/><path d="M3.800 3.800l8.400 8.400" stroke="#fff" stroke-width="1.800"/></svg>
<span style="left:754px;top:427px;color:#fff;letter-spacing:-0.219px;">Clear</span>
<div style="left:797px;top:423px;width:21px;height:21px;background:#233650;border-radius:5px;box-shadow:inset 0 0 0 1px rgba(110,110,128,.5);"></div>
<span style="left:822px;top:427px;color:#fff;letter-spacing:-0.198px;">Ignore case</span>
<div style="left:669px;top:448px;width:456px;height:1px;background:#46464b;"></div>
<svg style="left:681px;top:456px" width="7.7" height="7.7" viewBox="0 0 8 8"><path d="M0.500 0.300v7.400L7.700 4z" fill="#fff"/></svg>
<span style="left:696px;top:453px;color:#fff;letter-spacing:-0.137px;">Matched source locations</span>
<span style="left:853px;top:453px;color:#828282;letter-spacing:-0.471px;">(1)</span>
<div style="left:673px;top:471px;width:448px;height:1px;background:#46464b;"></div>
<svg style="left:681px;top:479px" width="7.7" height="7.7" viewBox="0 0 8 8"><path d="M0.300 0.500h7.400L4 7.700z" fill="#fff"/></svg>
<span style="left:696px;top:476px;color:#fff;letter-spacing:-0.133px;">Histogram</span>
<span style="left:694px;top:495px;color:#828282;letter-spacing:-0.118px;">Minimum values in bin:</span>
<div style="left:836px;top:494px;width:63px;height:17px;background:#233650;border-radius:5px;box-shadow:inset 0 0 0 1px rgba(110,110,128,.5);"></div>
<span style="left:837px;top:496px;color:#fff;letter-spacing:-0.469px;">1</span>
<div style="left:903px;top:494px;width:17px;height:17px;background:#2b4d73;border-radius:5px;box-shadow:inset 0 0 0 1px rgba(110,110,128,.5);"></div>
<span style="left:909px;top:495px;color:#fff;letter-spacing:-0.472px;">-</span>
<div style="left:924px;top:494px;width:17px;height:17px;background:#2b4d73;border-radius:5px;box-shadow:inset 0 0 0 1px rgba(110,110,128,.5);"></div>
<span style="left:928.5px;top:495px;color:#fff;letter-spacing:0.157px;">+</span>
<div style="left:949px;top:494px;width:37px;height:17px;background:#2b4d73;border-radius:5px;box-shadow:inset 0 0 0 1px rgba(110,110,128,.5);"></div>
<span style="left:950px;top:496px;color:#fff;letter-spacing:-0.017px;">Reset</span>
<div style="left:694px;top:515px;width:15px;height:15px;background:#233650;border-radius:5px;box-shadow:inset 0 0 0 1px rgba(110,110,128,.5);"></div>
<span style="left:713px;top:516px;color:#fff;letter-spacing:-0.196px;">Log values</span>
<div style="left:784px;top:515px;width:15px;height:15px;background:#233650;border-radius:5px;box-shadow:inset 0 0 0 1px rgba(110,110,128,.5);"></div>
<svg style="left:784px;top:515px" width="15" height="15" viewBox="0 0 15 15"><path d="M3.200 7.800l2.900 3.100 5.600-6.800" fill="none" stroke="#4296fa" stroke-width="2.200"/></svg>
<span style="left:803px;top:516px;color:#fff;letter-spacing:-0.189px;">Log time</span>
<div style="left:861px;top:515px;width:15px;height:15px;background:#233650;border-radius:5px;box-shadow:inset 0 0 0 1px rgba(110,110,128,.5);"></div>
<span style="left:880px;top:516px;color:#fff;letter-spacing:-0.122px;">Cumulate time</span>
<span style="left:974px;top:516px;color:#828282;letter-spacing:-0.471px;">(?)</span>
<div style="left:996px;top:515px;width:15px;height:15px;background:#233650;border-radius:5px;box-shadow:inset 0 0 0 1px rgba(110,110,128,.5);"></div>
<span style="left:1015px;top:516px;color:#fff;letter-spacing:-0.027px;">Self time</span>
<span style="left:1075px;top:516px;color:#828282;letter-spacing:-0.289px;">(1.16%)</span>
<span style="left:694px;top:535px;color:#828282;letter-spacing:-0.063px;">Total time:</span>
<span style="left:764px;top:535px;color:#fff;letter-spacing:-0.151px;">19.94 s</span>
<span style="left:823px;top:535px;color:#828282;letter-spacing:-0.037px;">Max counts:</span>
<span style="left:903px;top:535px;color:#fff;letter-spacing:-0.469px;">169</span>
<span style="left:694px;top:554px;color:#828282;letter-spacing:-0.143px;">Average time:</span>
<span style="left:783px;top:554px;color:#fff;letter-spacing:-0.110px;">1.44 ms</span>
<span style="left:846px;top:554px;color:#828282;letter-spacing:-0.157px;">Median time:</span>
<span style="left:929px;top:554px;color:#fff;letter-spacing:-0.140px;">641.77 µs</span>
<span style="left:1003px;top:554px;color:#828282;letter-spacing:-0.010px;">σ:</span>
<span style="left:1023px;top:554px;color:#fff;letter-spacing:-0.110px;">1.66 ms</span>
<span style="left:694px;top:573px;color:#828282;letter-spacing:-0.191px;">Selection range:</span>
<span style="left:796px;top:573px;color:#fff;letter-spacing:-0.469px;">none</span>
<span style="left:832px;top:573px;color:#828282;letter-spacing:-0.471px;">(?)</span>
<span style="left:694px;top:592px;color:#828282;letter-spacing:-0.072px;">Selection time:</span>
<span style="left:789px;top:592px;color:#fff;letter-spacing:-0.469px;">none</span>
<span style="left:694px;top:611px;color:#828282;letter-spacing:-0.220px;">Zone group time:</span>
<span style="left:800px;top:611px;color:#fff;letter-spacing:-0.097px;">4.61 s</span>
<span style="left:694px;top:630px;color:#828282;letter-spacing:-0.309px;">Group average:</span>
<span style="left:791px;top:630px;color:#fff;letter-spacing:-0.051px;">1.4 ms</span>
<span style="left:847px;top:630px;color:#828282;letter-spacing:-0.295px;">Group median:</span>
<span style="left:940px;top:630px;color:#fff;letter-spacing:-0.140px;">669.79 µs</span>
<div style="left:694px;top:648px;width:15px;height:15px;background:#233650;border-radius:5px;box-shadow:inset 0 0 0 1px rgba(110,110,128,.5);"></div>
<svg style="left:694px;top:648px" width="15" height="15" viewBox="0 0 15 15"><path d="M3.200 7.800l2.900 3.100 5.600-6.800" fill="none" stroke="#4296fa" stroke-width="2.200"/></svg>
<div style="left:717.2px;top:648.2px;width:14.4px;height:14.4px;background:#ff4444;border-radius:3.500px;box-shadow:inset 0 0 0 1px rgba(30,30,38,.45);"></div>
<span style="left:740px;top:649px;color:#fff;letter-spacing:-0.177px;">Average time</span>
<div style="left:833.2px;top:648.2px;width:14.4px;height:14.4px;background:#44aaff;border-radius:3.500px;box-shadow:inset 0 0 0 1px rgba(30,30,38,.45);"></div>
<span style="left:856px;top:649px;color:#fff;letter-spacing:-0.195px;">Median time</span>
<div style="left:694px;top:667px;width:15px;height:15px;background:#233650;border-radius:5px;box-shadow:inset 0 0 0 1px rgba(110,110,128,.5);"></div>
<svg style="left:694px;top:667px" width="15" height="15" viewBox="0 0 15 15"><path d="M3.200 7.800l2.900 3.100 5.600-6.800" fill="none" stroke="#4296fa" stroke-width="2.200"/></svg>
<div style="left:717.2px;top:667.2px;width:14.4px;height:14.4px;background:#ffaa44;border-radius:3.500px;box-shadow:inset 0 0 0 1px rgba(30,30,38,.45);"></div>
<span style="left:740px;top:668px;color:#fff;letter-spacing:-0.353px;">Group average</span>
<div style="left:841.2px;top:667.2px;width:14.4px;height:14.4px;background:#44dd44;border-radius:3.500px;box-shadow:inset 0 0 0 1px rgba(30,30,38,.45);"></div>
<span style="left:864px;top:668px;color:#fff;letter-spacing:-0.342px;">Group median</span>
<div style="left:694px;top:686px;width:427px;height:199px;background:#3a3933;box-shadow:inset 0 0 0 1px #9a9a94;"></div>
<svg style="left:0;top:680px" width="1920" height="260" viewBox="0 680 1920 260"><path d="M695 883.5v-2.0h1V883.5zM696 883.5v-2.6h1V883.5zM697 883.5v-3.0h1V883.5zM698 883.5v-2.6h1V883.5zM699 883.5v-4.2h1V883.5zM700 883.5v-4.7h1V883.5zM701 883.5v-4.7h1V883.5zM702 883.5v-5.3h1V883.5zM703 883.5v-4.3h1V883.5zM704 883.5v-6.8h1V883.5zM705 883.5v-9.7h1V883.5zM706 883.5v-11.5h1V883.5zM707 883.5v-12.7h1V883.5zM708 883.5v-10.3h1V883.5zM709 883.5v-14.0h1V883.5zM710 883.5v-19.4h1V883.5zM711 883.5v-17.6h1V883.5zM712 883.5v-21.1h1V883.5zM713 883.5v-20.3h1V883.5zM714 883.5v-25.9h1V883.5zM715 883.5v-29.3h1V883.5zM716 883.5v-27.1h1V883.5zM717 883.5v-26.2h1V883.5zM718 883.5v-31.2h1V883.5zM719 883.5v-27.2h1V883.5zM720 883.5v-37.7h1V883.5zM721 883.5v-46.6h1V883.5zM722 883.5v-43.3h1V883.5zM723 883.5v-52.1h1V883.5zM724 883.5v-56.5h1V883.5zM725 883.5v-54.9h1V883.5zM726 883.5v-40.4h1V883.5zM727 883.5v-51.3h1V883.5zM728 883.5v-41.3h1V883.5zM729 883.5v-49.2h1V883.5zM730 883.5v-50.5h1V883.5zM731 883.5v-65.3h1V883.5zM732 883.5v-57.5h1V883.5zM733 883.5v-63.0h1V883.5zM734 883.5v-54.3h1V883.5zM735 883.5v-71.6h1V883.5zM736 883.5v-53.9h1V883.5zM737 883.5v-59.6h1V883.5zM738 883.5v-77.4h1V883.5zM739 883.5v-74.3h1V883.5zM740 883.5v-82.9h1V883.5zM741 883.5v-80.0h1V883.5zM742 883.5v-74.1h1V883.5zM743 883.5v-99.7h1V883.5zM744 883.5v-86.8h1V883.5zM745 883.5v-117.2h1V883.5zM746 883.5v-107.8h1V883.5zM747 883.5v-121.3h1V883.5zM748 883.5v-123.3h1V883.5zM749 883.5v-106.2h1V883.5zM750 883.5v-108.7h1V883.5zM751 883.5v-158.0h1V883.5zM752 883.5v-161.3h1V883.5zM753 883.5v-163.8h1V883.5zM754 883.5v-138.2h1V883.5zM755 883.5v-147.6h1V883.5zM756 883.5v-163.9h1V883.5zM757 883.5v-196.0h1V883.5zM758 883.5v-196.0h1V883.5zM759 883.5v-181.9h1V883.5zM760 883.5v-176.5h1V883.5zM761 883.5v-167.5h1V883.5zM762 883.5v-161.2h1V883.5zM763 883.5v-182.3h1V883.5zM764 883.5v-166.6h1V883.5zM765 883.5v-141.7h1V883.5zM766 883.5v-187.7h1V883.5zM767 883.5v-170.0h1V883.5zM768 883.5v-195.5h1V883.5zM769 883.5v-183.0h1V883.5zM770 883.5v-160.5h1V883.5zM771 883.5v-148.9h1V883.5zM772 883.5v-162.7h1V883.5zM773 883.5v-132.1h1V883.5zM774 883.5v-139.6h1V883.5zM775 883.5v-95.4h1V883.5zM776 883.5v-107.2h1V883.5zM777 883.5v-113.6h1V883.5zM778 883.5v-117.1h1V883.5zM779 883.5v-104.4h1V883.5zM780 883.5v-111.7h1V883.5zM781 883.5v-94.9h1V883.5zM782 883.5v-104.0h1V883.5zM783 883.5v-103.1h1V883.5zM784 883.5v-89.5h1V883.5zM785 883.5v-80.6h1V883.5zM786 883.5v-106.2h1V883.5zM787 883.5v-103.8h1V883.5zM788 883.5v-108.8h1V883.5zM789 883.5v-114.2h1V883.5zM790 883.5v-115.0h1V883.5zM791 883.5v-114.8h1V883.5zM792 883.5v-116.1h1V883.5zM793 883.5v-88.0h1V883.5zM794 883.5v-111.6h1V883.5zM795 883.5v-104.8h1V883.5zM796 883.5v-123.8h1V883.5zM797 883.5v-121.1h1V883.5zM798 883.5v-100.7h1V883.5zM799 883.5v-112.6h1V883.5zM800 883.5v-102.0h1V883.5zM801 883.5v-108.7h1V883.5zM802 883.5v-111.5h1V883.5zM803 883.5v-96.3h1V883.5zM804 883.5v-74.1h1V883.5zM805 883.5v-89.3h1V883.5zM806 883.5v-77.8h1V883.5zM807 883.5v-83.6h1V883.5zM808 883.5v-88.0h1V883.5zM809 883.5v-84.5h1V883.5zM810 883.5v-83.4h1V883.5zM811 883.5v-86.4h1V883.5zM812 883.5v-79.4h1V883.5zM813 883.5v-64.1h1V883.5zM814 883.5v-62.3h1V883.5zM815 883.5v-63.5h1V883.5zM816 883.5v-54.7h1V883.5zM817 883.5v-54.4h1V883.5zM818 883.5v-40.2h1V883.5zM819 883.5v-47.6h1V883.5zM820 883.5v-46.2h1V883.5zM821 883.5v-41.2h1V883.5zM822 883.5v-37.3h1V883.5zM823 883.5v-44.6h1V883.5zM824 883.5v-43.1h1V883.5zM825 883.5v-38.3h1V883.5zM826 883.5v-40.4h1V883.5zM827 883.5v-33.8h1V883.5zM828 883.5v-37.6h1V883.5zM829 883.5v-29.9h1V883.5zM830 883.5v-26.5h1V883.5zM831 883.5v-29.5h1V883.5zM832 883.5v-31.2h1V883.5zM833 883.5v-21.2h1V883.5zM834 883.5v-24.7h1V883.5zM835 883.5v-27.7h1V883.5zM836 883.5v-22.6h1V883.5zM837 883.5v-27.0h1V883.5zM838 883.5v-24.1h1V883.5zM839 883.5v-23.7h1V883.5zM840 883.5v-23.6h1V883.5zM841 883.5v-23.0h1V883.5zM842 883.5v-21.0h1V883.5zM843 883.5v-18.8h1V883.5zM844 883.5v-19.4h1V883.5zM845 883.5v-20.2h1V883.5zM846 883.5v-14.5h1V883.5zM847 883.5v-17.4h1V883.5zM848 883.5v-18.8h1V883.5zM849 883.5v-12.6h1V883.5zM850 883.5v-15.6h1V883.5zM851 883.5v-16.3h1V883.5zM852 883.5v-14.8h1V883.5zM853 883.5v-13.8h1V883.5zM854 883.5v-15.1h1V883.5zM855 883.5v-12.3h1V883.5zM856 883.5v-10.8h1V883.5zM857 883.5v-14.0h1V883.5zM858 883.5v-12.3h1V883.5zM859 883.5v-14.7h1V883.5zM860 883.5v-13.2h1V883.5zM861 883.5v-13.2h1V883.5zM862 883.5v-10.7h1V883.5zM863 883.5v-12.3h1V883.5zM864 883.5v-9.4h1V883.5zM865 883.5v-10.2h1V883.5zM866 883.5v-6.6h1V883.5zM867 883.5v-8.5h1V883.5zM868 883.5v-7.8h1V883.5zM869 883.5v-7.9h1V883.5zM870 883.5v-7.4h1V883.5zM871 883.5v-7.4h1V883.5zM872 883.5v-6.3h1V883.5zM873 883.5v-5.7h1V883.5zM874 883.5v-6.8h1V883.5zM875 883.5v-7.7h1V883.5zM876 883.5v-6.6h1V883.5zM877 883.5v-6.8h1V883.5zM878 883.5v-8.9h1V883.5zM879 883.5v-10.0h1V883.5zM880 883.5v-9.3h1V883.5zM881 883.5v-10.4h1V883.5zM882 883.5v-12.0h1V883.5zM883 883.5v-9.2h1V883.5zM884 883.5v-10.4h1V883.5zM885 883.5v-12.6h1V883.5zM886 883.5v-13.5h1V883.5zM887 883.5v-13.9h1V883.5zM888 883.5v-15.6h1V883.5zM889 883.5v-19.0h1V883.5zM890 883.5v-18.9h1V883.5zM891 883.5v-24.2h1V883.5zM892 883.5v-28.1h1V883.5zM893 883.5v-25.1h1V883.5zM894 883.5v-28.4h1V883.5zM895 883.5v-38.9h1V883.5zM896 883.5v-45.8h1V883.5zM897 883.5v-41.4h1V883.5zM898 883.5v-36.2h1V883.5zM899 883.5v-39.0h1V883.5zM900 883.5v-56.7h1V883.5zM901 883.5v-47.8h1V883.5zM902 883.5v-60.8h1V883.5zM903 883.5v-60.1h1V883.5zM904 883.5v-58.5h1V883.5zM905 883.5v-52.2h1V883.5zM906 883.5v-60.6h1V883.5zM907 883.5v-58.0h1V883.5zM908 883.5v-67.2h1V883.5zM909 883.5v-68.5h1V883.5zM910 883.5v-70.9h1V883.5zM911 883.5v-68.1h1V883.5zM912 883.5v-72.7h1V883.5zM913 883.5v-58.6h1V883.5zM914 883.5v-64.2h1V883.5zM915 883.5v-81.5h1V883.5zM916 883.5v-81.2h1V883.5zM917 883.5v-76.2h1V883.5zM918 883.5v-80.7h1V883.5zM919 883.5v-78.3h1V883.5zM920 883.5v-69.8h1V883.5zM921 883.5v-78.2h1V883.5zM922 883.5v-93.3h1V883.5zM923 883.5v-80.5h1V883.5zM924 883.5v-79.7h1V883.5zM925 883.5v-85.8h1V883.5zM926 883.5v-69.4h1V883.5zM927 883.5v-78.6h1V883.5zM928 883.5v-79.8h1V883.5zM929 883.5v-71.4h1V883.5zM930 883.5v-57.9h1V883.5zM931 883.5v-59.8h1V883.5zM932 883.5v-66.9h1V883.5zM933 883.5v-54.7h1V883.5zM934 883.5v-54.1h1V883.5zM935 883.5v-56.5h1V883.5zM936 883.5v-54.3h1V883.5zM937 883.5v-53.5h1V883.5zM938 883.5v-54.4h1V883.5zM939 883.5v-42.2h1V883.5zM940 883.5v-47.7h1V883.5zM941 883.5v-44.7h1V883.5zM942 883.5v-45.4h1V883.5zM943 883.5v-30.7h1V883.5zM944 883.5v-35.3h1V883.5zM945 883.5v-35.2h1V883.5zM946 883.5v-33.3h1V883.5zM947 883.5v-26.3h1V883.5zM948 883.5v-33.1h1V883.5zM949 883.5v-31.6h1V883.5zM950 883.5v-25.4h1V883.5zM951 883.5v-26.4h1V883.5zM952 883.5v-24.5h1V883.5zM953 883.5v-24.5h1V883.5zM954 883.5v-20.3h1V883.5zM955 883.5v-22.2h1V883.5zM956 883.5v-23.9h1V883.5zM957 883.5v-19.1h1V883.5zM958 883.5v-18.2h1V883.5zM959 883.5v-22.3h1V883.5zM960 883.5v-20.3h1V883.5zM961 883.5v-13.1h1V883.5zM962 883.5v-15.8h1V883.5zM963 883.5v-14.2h1V883.5zM964 883.5v-14.5h1V883.5zM965 883.5v-11.7h1V883.5zM966 883.5v-12.4h1V883.5zM967 883.5v-9.2h1V883.5zM968 883.5v-8.5h1V883.5zM969 883.5v-10.6h1V883.5zM970 883.5v-7.9h1V883.5zM971 883.5v-7.9h1V883.5zM972 883.5v-7.9h1V883.5zM973 883.5v-6.9h1V883.5zM974 883.5v-7.8h1V883.5zM975 883.5v-6.4h1V883.5zM976 883.5v-6.6h1V883.5zM977 883.5v-6.5h1V883.5zM978 883.5v-6.9h1V883.5zM979 883.5v-6.9h1V883.5zM980 883.5v-6.5h1V883.5zM981 883.5v-5.7h1V883.5zM982 883.5v-5.9h1V883.5zM983 883.5v-5.7h1V883.5zM984 883.5v-4.8h1V883.5zM985 883.5v-4.8h1V883.5zM986 883.5v-3.9h1V883.5zM987 883.5v-4.1h1V883.5zM988 883.5v-4.0h1V883.5zM989 883.5v-4.3h1V883.5zM990 883.5v-3.0h1V883.5zM991 883.5v-3.0h1V883.5zM992 883.5v-3.6h1V883.5zM993 883.5v-3.2h1V883.5zM994 883.5v-2.8h1V883.5zM995 883.5v-2.5h1V883.5zM996 883.5v-2.4h1V883.5zM997 883.5v-2.3h1V883.5zM998 883.5v-1.9h1V883.5zM999 883.5v-1.8h1V883.5zM1000 883.5v-1.6h1V883.5zM1009 883.5v-2.7h1V883.5zM1011 883.5v-2.7h1V883.5zM1013 883.5v-2.7h1V883.5zM1026 883.5v-2.7h1V883.5zM1028 883.5v-2.7h1V883.5zM1058 883.5v-2.7h1V883.5zM1099 883.5v-2.7h1V883.5zM1119 883.5v-2.7h1V883.5z" fill="#e0de22"/><path d="M699 883.5v-0.8h1V883.5zM700 883.5v-0.8h1V883.5zM701 883.5v-1.1h1V883.5zM702 883.5v-1.4h1V883.5zM703 883.5v-1.4h1V883.5zM704 883.5v-2.0h1V883.5zM705 883.5v-1.7h1V883.5zM706 883.5v-2.1h1V883.5zM707 883.5v-2.6h1V883.5zM708 883.5v-4.2h1V883.5zM709 883.5v-3.8h1V883.5zM710 883.5v-5.6h1V883.5zM711 883.5v-6.4h1V883.5zM712 883.5v-6.5h1V883.5zM713 883.5v-7.7h1V883.5zM714 883.5v-8.5h1V883.5zM715 883.5v-7.2h1V883.5zM716 883.5v-7.3h1V883.5zM717 883.5v-7.3h1V883.5zM718 883.5v-10.7h1V883.5zM719 883.5v-11.8h1V883.5zM720 883.5v-10.9h1V883.5zM721 883.5v-12.6h1V883.5zM722 883.5v-13.4h1V883.5zM723 883.5v-10.9h1V883.5zM724 883.5v-10.9h1V883.5zM725 883.5v-17.7h1V883.5zM726 883.5v-17.2h1V883.5zM727 883.5v-15.8h1V883.5zM728 883.5v-11.4h1V883.5zM729 883.5v-17.1h1V883.5zM730 883.5v-15.9h1V883.5zM731 883.5v-16.5h1V883.5zM732 883.5v-13.2h1V883.5zM733 883.5v-15.2h1V883.5zM734 883.5v-16.0h1V883.5zM735 883.5v-17.5h1V883.5zM736 883.5v-18.9h1V883.5zM737 883.5v-16.1h1V883.5zM738 883.5v-20.7h1V883.5zM739 883.5v-21.7h1V883.5zM740 883.5v-18.2h1V883.5zM741 883.5v-18.0h1V883.5zM742 883.5v-18.8h1V883.5zM743 883.5v-28.1h1V883.5zM744 883.5v-19.2h1V883.5zM745 883.5v-27.2h1V883.5zM746 883.5v-24.9h1V883.5zM747 883.5v-33.1h1V883.5zM748 883.5v-29.4h1V883.5zM749 883.5v-35.4h1V883.5zM750 883.5v-31.6h1V883.5zM751 883.5v-26.5h1V883.5zM752 883.5v-38.0h1V883.5zM753 883.5v-37.1h1V883.5zM754 883.5v-33.6h1V883.5zM755 883.5v-39.6h1V883.5zM756 883.5v-35.5h1V883.5zM757 883.5v-41.6h1V883.5zM758 883.5v-37.2h1V883.5zM759 883.5v-42.0h1V883.5zM760 883.5v-36.0h1V883.5zM761 883.5v-33.6h1V883.5zM762 883.5v-48.1h1V883.5zM763 883.5v-44.1h1V883.5zM764 883.5v-40.1h1V883.5zM765 883.5v-39.5h1V883.5zM766 883.5v-50.4h1V883.5zM767 883.5v-50.2h1V883.5zM768 883.5v-46.3h1V883.5zM769 883.5v-44.7h1V883.5zM770 883.5v-41.5h1V883.5zM771 883.5v-36.1h1V883.5zM772 883.5v-36.4h1V883.5zM773 883.5v-36.5h1V883.5zM774 883.5v-31.3h1V883.5zM775 883.5v-29.6h1V883.5zM776 883.5v-29.5h1V883.5zM777 883.5v-29.3h1V883.5zM778 883.5v-27.7h1V883.5zM779 883.5v-25.0h1V883.5zM780 883.5v-25.8h1V883.5zM781 883.5v-25.1h1V883.5zM782 883.5v-23.3h1V883.5zM783 883.5v-24.4h1V883.5zM784 883.5v-20.7h1V883.5zM785 883.5v-22.1h1V883.5zM786 883.5v-20.6h1V883.5zM787 883.5v-23.5h1V883.5zM788 883.5v-19.2h1V883.5zM789 883.5v-24.5h1V883.5zM790 883.5v-23.9h1V883.5zM791 883.5v-28.3h1V883.5zM792 883.5v-28.9h1V883.5zM793 883.5v-23.2h1V883.5zM794 883.5v-30.3h1V883.5zM795 883.5v-31.7h1V883.5zM796 883.5v-22.9h1V883.5zM797 883.5v-27.8h1V883.5zM798 883.5v-27.1h1V883.5zM799 883.5v-29.2h1V883.5zM800 883.5v-26.4h1V883.5zM801 883.5v-35.1h1V883.5zM802 883.5v-39.6h1V883.5zM803 883.5v-45.1h1V883.5zM804 883.5v-35.8h1V883.5zM805 883.5v-33.6h1V883.5zM806 883.5v-36.2h1V883.5zM807 883.5v-22.3h1V883.5zM808 883.5v-22.0h1V883.5zM809 883.5v-24.4h1V883.5zM810 883.5v-28.4h1V883.5zM811 883.5v-22.2h1V883.5zM812 883.5v-22.5h1V883.5zM813 883.5v-16.4h1V883.5zM814 883.5v-18.9h1V883.5zM815 883.5v-19.9h1V883.5zM816 883.5v-14.8h1V883.5zM817 883.5v-9.9h1V883.5zM818 883.5v-13.5h1V883.5zM819 883.5v-9.8h1V883.5zM820 883.5v-13.1h1V883.5zM821 883.5v-10.8h1V883.5zM822 883.5v-9.8h1V883.5zM823 883.5v-9.9h1V883.5zM824 883.5v-11.5h1V883.5zM825 883.5v-8.7h1V883.5zM826 883.5v-9.3h1V883.5zM827 883.5v-8.3h1V883.5zM828 883.5v-8.6h1V883.5zM829 883.5v-8.2h1V883.5zM830 883.5v-8.3h1V883.5zM831 883.5v-7.1h1V883.5zM832 883.5v-8.5h1V883.5zM833 883.5v-7.6h1V883.5zM834 883.5v-8.5h1V883.5zM835 883.5v-6.4h1V883.5zM836 883.5v-5.9h1V883.5zM837 883.5v-6.4h1V883.5zM838 883.5v-6.8h1V883.5zM839 883.5v-7.0h1V883.5zM840 883.5v-5.3h1V883.5zM841 883.5v-5.9h1V883.5zM842 883.5v-5.9h1V883.5zM843 883.5v-6.3h1V883.5zM844 883.5v-5.7h1V883.5zM845 883.5v-6.1h1V883.5zM846 883.5v-5.2h1V883.5zM847 883.5v-6.5h1V883.5zM848 883.5v-5.6h1V883.5zM849 883.5v-5.9h1V883.5zM850 883.5v-5.4h1V883.5zM851 883.5v-5.4h1V883.5zM852 883.5v-5.7h1V883.5zM853 883.5v-4.7h1V883.5zM854 883.5v-4.1h1V883.5zM855 883.5v-5.2h1V883.5zM856 883.5v-5.0h1V883.5zM857 883.5v-4.2h1V883.5zM858 883.5v-4.6h1V883.5zM859 883.5v-3.4h1V883.5zM860 883.5v-4.0h1V883.5zM861 883.5v-3.6h1V883.5zM862 883.5v-3.8h1V883.5zM863 883.5v-2.8h1V883.5zM864 883.5v-3.8h1V883.5zM865 883.5v-3.5h1V883.5zM866 883.5v-3.4h1V883.5zM867 883.5v-3.5h1V883.5zM868 883.5v-2.2h1V883.5zM869 883.5v-2.4h1V883.5zM870 883.5v-3.0h1V883.5zM871 883.5v-2.1h1V883.5zM872 883.5v-2.7h1V883.5zM873 883.5v-2.3h1V883.5zM874 883.5v-1.8h1V883.5zM875 883.5v-1.5h1V883.5zM876 883.5v-2.0h1V883.5zM877 883.5v-1.7h1V883.5zM878 883.5v-2.6h1V883.5zM879 883.5v-2.1h1V883.5zM880 883.5v-2.4h1V883.5zM881 883.5v-2.8h1V883.5zM882 883.5v-2.8h1V883.5zM883 883.5v-3.3h1V883.5zM884 883.5v-3.3h1V883.5zM885 883.5v-3.8h1V883.5zM886 883.5v-3.6h1V883.5zM887 883.5v-3.6h1V883.5zM888 883.5v-4.0h1V883.5zM889 883.5v-3.1h1V883.5zM890 883.5v-3.7h1V883.5zM891 883.5v-4.0h1V883.5zM892 883.5v-5.8h1V883.5zM893 883.5v-6.6h1V883.5zM894 883.5v-5.6h1V883.5zM895 883.5v-6.8h1V883.5zM896 883.5v-8.3h1V883.5zM897 883.5v-10.1h1V883.5zM898 883.5v-10.7h1V883.5zM899 883.5v-8.7h1V883.5zM900 883.5v-11.8h1V883.5zM901 883.5v-9.4h1V883.5zM902 883.5v-12.9h1V883.5zM903 883.5v-10.5h1V883.5zM904 883.5v-12.5h1V883.5zM905 883.5v-12.9h1V883.5zM906 883.5v-13.4h1V883.5zM907 883.5v-12.2h1V883.5zM908 883.5v-16.2h1V883.5zM909 883.5v-15.4h1V883.5zM910 883.5v-16.4h1V883.5zM911 883.5v-17.3h1V883.5zM912 883.5v-16.6h1V883.5zM913 883.5v-13.1h1V883.5zM914 883.5v-13.5h1V883.5zM915 883.5v-18.2h1V883.5zM916 883.5v-12.7h1V883.5zM917 883.5v-21.5h1V883.5zM918 883.5v-18.7h1V883.5zM919 883.5v-15.6h1V883.5zM920 883.5v-16.6h1V883.5zM921 883.5v-19.4h1V883.5zM922 883.5v-17.4h1V883.5zM923 883.5v-19.4h1V883.5zM924 883.5v-20.0h1V883.5zM925 883.5v-22.5h1V883.5zM926 883.5v-26.6h1V883.5zM927 883.5v-27.3h1V883.5zM928 883.5v-23.9h1V883.5zM929 883.5v-24.3h1V883.5zM930 883.5v-21.0h1V883.5zM931 883.5v-19.7h1V883.5zM932 883.5v-14.4h1V883.5zM933 883.5v-11.5h1V883.5zM934 883.5v-11.9h1V883.5zM935 883.5v-17.1h1V883.5zM936 883.5v-13.0h1V883.5zM937 883.5v-12.3h1V883.5zM938 883.5v-14.0h1V883.5zM939 883.5v-11.0h1V883.5zM940 883.5v-13.7h1V883.5zM941 883.5v-11.0h1V883.5zM942 883.5v-7.4h1V883.5zM943 883.5v-11.1h1V883.5zM944 883.5v-7.1h1V883.5zM945 883.5v-10.4h1V883.5zM946 883.5v-7.8h1V883.5zM947 883.5v-6.0h1V883.5zM948 883.5v-7.1h1V883.5zM949 883.5v-5.0h1V883.5zM950 883.5v-4.5h1V883.5zM951 883.5v-4.4h1V883.5zM952 883.5v-5.3h1V883.5zM953 883.5v-4.0h1V883.5zM954 883.5v-6.0h1V883.5zM955 883.5v-5.0h1V883.5zM956 883.5v-4.8h1V883.5zM957 883.5v-4.2h1V883.5zM958 883.5v-4.4h1V883.5zM959 883.5v-4.3h1V883.5zM960 883.5v-3.4h1V883.5zM961 883.5v-3.9h1V883.5zM962 883.5v-3.7h1V883.5zM963 883.5v-3.6h1V883.5zM964 883.5v-3.8h1V883.5zM965 883.5v-3.1h1V883.5zM966 883.5v-2.6h1V883.5zM967 883.5v-2.6h1V883.5zM968 883.5v-3.0h1V883.5zM969 883.5v-2.3h1V883.5zM970 883.5v-1.9h1V883.5zM971 883.5v-1.7h1V883.5zM972 883.5v-2.1h1V883.5zM973 883.5v-1.5h1V883.5zM974 883.5v-1.3h1V883.5zM975 883.5v-1.4h1V883.5zM976 883.5v-1.2h1V883.5zM977 883.5v-1.3h1V883.5zM978 883.5v-1.4h1V883.5zM979 883.5v-1.3h1V883.5zM980 883.5v-1.2h1V883.5zM981 883.5v-1.2h1V883.5zM982 883.5v-1.2h1V883.5zM983 883.5v-1.0h1V883.5zM984 883.5v-1.0h1V883.5zM985 883.5v-0.6h1V883.5zM986 883.5v-0.6h1V883.5zM987 883.5v-0.7h1V883.5z" fill="#7b7bdc"/><path d="M786.500 687V884" stroke="#44aaff"/><path d="M790.500 687V884" stroke="#44dd44"/><path d="M847.500 687V884" stroke="#ffaa44"/><path d="M849.500 687V884" stroke="#ff4444"/></svg>
<svg style="left:0;top:880px" width="1920" height="40" viewBox="0 880 1920 40"><path d="M697.5 888v3M728.5 888v3M751.5 888v3M768.5 888v3M783.5 888v3M795.5 888v3M805.5 888v3M814.5 888v3M822.5 888v7M877.5 888v3M908.5 888v3M931.5 888v3M948.5 888v3M963.5 888v3M975.5 888v3M985.5 888v3M994.5 888v3M1002.5 888v7M1057.5 888v3M1088.5 888v3M1111.5 888v3M694.5 888v19M1120.5 888v19" stroke="#8a8a86" fill="none"/></svg>
<span style="left:821px;top:896px;color:#828282;letter-spacing:-0.026px;">1 ms</span>
<span style="left:1001px;top:896px;color:#828282;letter-spacing:-0.114px;">10 ms</span>
<span style="left:694px;top:911px;color:#828282;letter-spacing:-0.140px;">194.69 µs</span>
<span style="left:1066px;top:911px;color:#828282;letter-spacing:-0.155px;">45.92 ms</span>
<span style="left:880.5px;top:911px;color:#828282;letter-spacing:-0.155px;">45.72 ms</span>
<svg style="left:864px;top:914px" width="90" height="10" viewBox="0 0 90 10"><path d="M3 5h8.500M76 5h8" fill="none" stroke="#828282" stroke-width="1.600"/><path d="M0.500 5L5 1.800v6.400zM87 5L82.500 1.800v6.400z" fill="#828282"/></svg>
<div style="left:673px;top:928px;width:448px;height:1px;background:#46464b;"></div>
<span style="left:673px;top:933px;color:#fff;letter-spacing:-0.198px;">Found zones:</span>
<span style="left:760px;top:933px;color:#828282;letter-spacing:-0.471px;">(?)</span>
<span style="left:673px;top:952px;color:#fff;letter-spacing:-0.219px;">Group by:</span>
<div style="left:738px;top:951px;width:15px;height:15px;background:#233650;border-radius:8px;box-shadow:inset 0 0 0 1px rgba(110,110,128,.5);"></div>
<div style="left:741px;top:954px;width:9px;height:9px;background:#4296fa;border-radius:5px;"></div>
<span style="left:757px;top:952px;color:#fff;letter-spacing:-0.425px;">Thread</span>
<div style="left:805px;top:951px;width:15px;height:15px;background:#233650;border-radius:8px;box-shadow:inset 0 0 0 1px rgba(110,110,128,.5);"></div>
<span style="left:824px;top:952px;color:#fff;letter-spacing:0.030px;">User text</span>
<div style="left:886px;top:951px;width:15px;height:15px;background:#233650;border-radius:8px;box-shadow:inset 0 0 0 1px rgba(110,110,128,.5);"></div>
<span style="left:905px;top:952px;color:#fff;letter-spacing:0.098px;">Call stacks</span>
<div style="left:979px;top:951px;width:15px;height:15px;background:#233650;border-radius:8px;box-shadow:inset 0 0 0 1px rgba(110,110,128,.5);"></div>
<span style="left:998px;top:952px;color:#fff;letter-spacing:-0.261px;">Parent</span>
<div style="left:1044px;top:951px;width:15px;height:15px;background:#233650;border-radius:8px;box-shadow:inset 0 0 0 1px rgba(110,110,128,.5);"></div>
<span style="left:1063px;top:952px;color:#fff;letter-spacing:-0.288px;width:58px;overflow:hidden;">No grouping</span>
<span style="left:673px;top:971px;color:#fff;letter-spacing:-0.035px;">Sort by:</span>
<div style="left:727px;top:970px;width:15px;height:15px;background:#233650;border-radius:8px;box-shadow:inset 0 0 0 1px rgba(110,110,128,.5);"></div>
<span style="left:746px;top:971px;color:#fff;letter-spacing:-0.466px;">Order</span>
<div style="left:786px;top:970px;width:15px;height:15px;background:#233650;border-radius:8px;box-shadow:inset 0 0 0 1px rgba(110,110,128,.5);"></div>
<div style="left:789px;top:973px;width:9px;height:9px;background:#4296fa;border-radius:5px;"></div>
<span style="left:805px;top:971px;color:#fff;letter-spacing:-0.167px;">Count</span>
<div style="left:848px;top:970px;width:15px;height:15px;background:#233650;border-radius:8px;box-shadow:inset 0 0 0 1px rgba(110,110,128,.5);"></div>
<span style="left:867px;top:971px;color:#fff;letter-spacing:-0.211px;">Time</span>
<div style="left:904px;top:970px;width:15px;height:15px;background:#233650;border-radius:8px;box-shadow:inset 0 0 0 1px rgba(110,110,128,.5);"></div>
<span style="left:923px;top:971px;color:#fff;letter-spacing:-0.012px;">MTPC</span>
<span style="left:969px;top:971px;color:#828282;letter-spacing:-0.471px;">(?)</span>
<div style="left:673.2px;top:989.2px;width:14.4px;height:14.4px;background:#68aa70;border-radius:3.500px;box-shadow:inset 0 0 0 1px rgba(30,30,38,.45);"></div>
<svg style="left:703.8px;top:993px" width="7.7" height="7.7" viewBox="0 0 8 8"><path d="M0.500 0.300v7.400L7.700 4z" fill="#fff"/></svg>
<span style="left:719px;top:990px;color:#fff;letter-spacing:-0.437px;">Thread-2</span>
<span style="left:778px;top:990px;color:#828282;letter-spacing:-0.205px;">(4,105) 6.46 s</span>
<div style="left:696px;top:1008px;width:425px;height:15px;background:#29425e;"></div>
<div style="left:673.2px;top:1008.2px;width:14.4px;height:14.4px;background:#ac6ba0;border-radius:3.500px;box-shadow:inset 0 0 0 1px rgba(30,30,38,.45);"></div>
<svg style="left:703.8px;top:1012px" width="7.7" height="7.7" viewBox="0 0 8 8"><path d="M0.500 0.300v7.400L7.700 4z" fill="#fff"/></svg>
<span style="left:719px;top:1009px;color:#fff;letter-spacing:-0.101px;">GUIF worker 2</span>
<span style="left:813px;top:1009px;color:#828282;letter-spacing:-0.205px;">(3,296) 4.61 s</span>
<div style="left:673.2px;top:1027.2px;width:14.4px;height:14.4px;background:#ac786b;border-radius:3.500px;box-shadow:inset 0 0 0 1px rgba(30,30,38,.45);"></div>
<svg style="left:703.8px;top:1031px" width="7.7" height="7.7" viewBox="0 0 8 8"><path d="M0.500 0.300v7.400L7.700 4z" fill="#fff"/></svg>
<span style="left:719px;top:1028px;color:#fff;letter-spacing:-0.101px;">GUIF worker 0</span>
<span style="left:813px;top:1028px;color:#828282;letter-spacing:-0.205px;">(3,231) 4.48 s</span>
<div style="left:673.2px;top:1046.2px;width:14.4px;height:14.4px;background:#ac697d;border-radius:3.500px;box-shadow:inset 0 0 0 1px rgba(30,30,38,.45);"></div>
<svg style="left:703.8px;top:1050px" width="7.7" height="7.7" viewBox="0 0 8 8"><path d="M0.500 0.300v7.400L7.700 4z" fill="#fff"/></svg>
<span style="left:719px;top:1047px;color:#fff;letter-spacing:-0.101px;">GUIF worker 1</span>
<span style="left:813px;top:1047px;color:#828282;letter-spacing:-0.205px;">(3,192) 4.39 s</span>
</body></html>
